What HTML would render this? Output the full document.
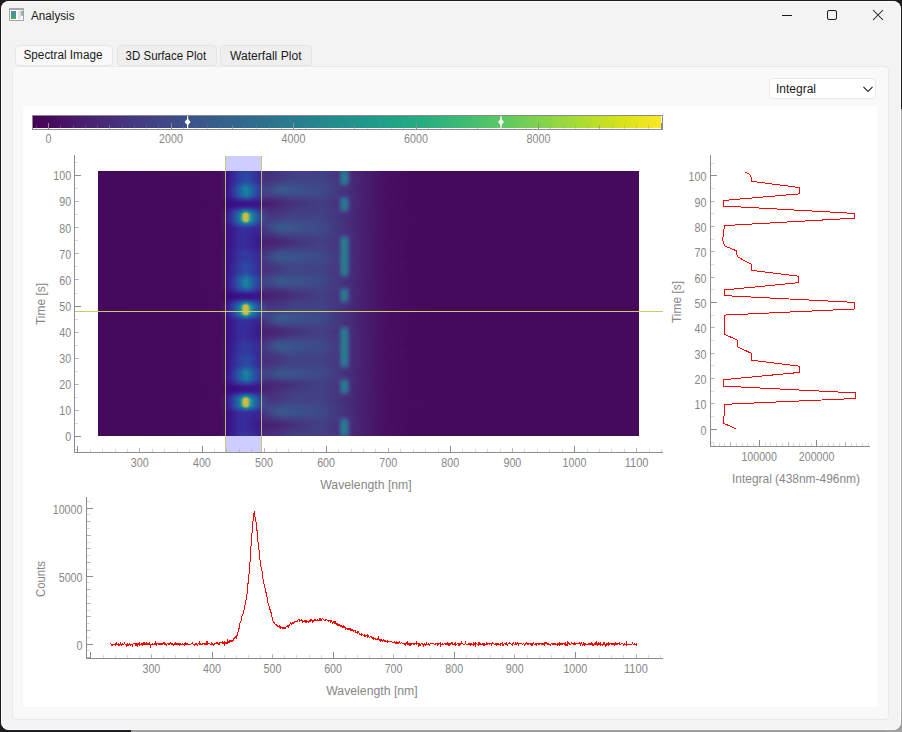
<!DOCTYPE html>
<html><head><meta charset="utf-8">
<style>
html,body{margin:0;padding:0;}
body{width:902px;height:732px;overflow:hidden;background:#1d1d1f;position:relative;font-family:"Liberation Sans",sans-serif;}
.abs{position:absolute;}
#win{left:1px;top:1px;width:900px;height:729px;background:#f3f3f3;border-radius:8px;box-shadow:inset 0 0 0 1px rgba(255,255,255,.7);}
.tab{top:45px;height:21px;border:1px solid #e4e4e4;border-radius:4px;box-sizing:border-box;background:#efefef;}
#pane{left:12px;top:66px;width:877px;height:654px;background:#f9f9f9;border:1px solid #e9e9e9;border-radius:4px;box-sizing:border-box;}
#white{left:23px;top:106px;width:854px;height:601px;background:#fff;}
#combo{left:769px;top:78px;width:107px;height:21px;background:#fff;border:1px solid #e8e8e8;border-radius:4px;box-sizing:border-box;}
#heat{left:98px;top:171px;width:541px;height:265px;}
svg{position:absolute;left:0;top:0;}
svg text{font-family:"Liberation Sans",sans-serif;}
</style></head><body>
<div class="abs" style="left:131px;top:730px;width:771px;height:2px;background:#9c9c9c"></div>
<div class="abs" style="left:901px;top:109px;width:1px;height:623px;background:#a8a8a8"></div>
<div class="abs" style="left:886px;top:716px;width:16px;height:16px;background:#a0a0a0"></div>
<div class="abs" id="win"></div>
<div class="abs" style="left:9px;top:8px;width:15px;height:13px;box-sizing:border-box;border:1px solid #a6a6a6;border-top:2px solid #a9a9a9;background:#fafafa;border-radius:1px;">
 <div class="abs" style="left:1px;top:1px;width:5px;height:8px;background:linear-gradient(#5d86c0,#3e9a80 55%,#4fae5c);"></div>
 <div class="abs" style="left:8px;top:1px;width:3px;height:8px;background:#e2e2e2;"></div>
 <div class="abs" style="left:11px;top:1px;width:2px;height:5px;background:linear-gradient(#7fa2d0,#9ad080);"></div>
</div>
<div class="abs" id="pane"></div>
<div class="abs tab" style="left:15px;width:98px;background:#f9f9f9;border-color:#e6e6e6"></div>
<div class="abs tab" style="left:117px;width:100px;"></div>
<div class="abs tab" style="left:220px;width:92px;"></div>
<div class="abs" id="white"></div>
<div class="abs" id="combo"></div>
<div class="abs" id="heat" style="background:linear-gradient(90deg,#460a5d 0.1%,#460b5e 22.5%,#48186a 23.9%,#443983 25.4%,#3c4f8a 26.5%,#39558c 27.4%,#3e4989 28.4%,#46327e 29.7%,#472e7c 31.3%,#453581 33.5%,#424086 36.0%,#423f85 41.9%,#453581 44.1%,#443b84 44.5%,#34618d 45.2%,#32658e 45.6%,#355e8d 45.9%,#443b84 46.5%,#472c7a 46.9%,#482475 47.8%,#470e61 53.5%,#460a5d 58.5%,#460a5d 99.9%) 0 0px/100% 1px no-repeat,
linear-gradient(90deg,#460a5d 0.1%,#460b5e 22.5%,#48186a 23.9%,#433e85 25.6%,#3c508b 26.5%,#39568c 27.4%,#3e4a89 28.4%,#46327e 29.7%,#472e7c 31.3%,#453781 33.7%,#424086 36.1%,#423f85 41.9%,#453581 44.1%,#433d84 44.5%,#31668e 45.2%,#2f6c8e 45.6%,#32648e 45.9%,#433e85 46.5%,#472c7a 46.9%,#482475 47.8%,#470e61 53.5%,#460a5d 58.5%,#460a5d 99.9%) 0 1px/100% 1px no-repeat,
linear-gradient(90deg,#460a5d 0.1%,#460b5e 22.5%,#48186a 23.9%,#453581 25.2%,#3b518b 26.5%,#38598c 27.4%,#3f4889 28.6%,#46337f 29.7%,#472e7c 31.1%,#453781 33.7%,#424086 36.1%,#424086 41.5%,#453581 44.1%,#433e85 44.5%,#33638d 45.0%,#2d718e 45.4%,#2d708e 45.7%,#306a8e 45.9%,#3c508b 46.3%,#463480 46.7%,#482979 47.0%,#471063 52.8%,#460a5d 57.9%,#460a5d 99.9%) 0 2px/100% 1px no-repeat,
linear-gradient(90deg,#460a5d 0.1%,#460b5e 22.5%,#48186a 23.9%,#443a83 25.4%,#3c508b 26.3%,#375b8d 27.4%,#3d4d8a 28.4%,#463480 29.7%,#472e7c 31.0%,#463480 33.2%,#424186 36.1%,#424086 41.5%,#453581 44.1%,#433e85 44.5%,#31668e 45.0%,#2b758e 45.4%,#2c738e 45.7%,#2e6e8e 45.9%,#3b528b 46.3%,#463480 46.7%,#482979 47.0%,#471063 52.8%,#460a5d 57.9%,#460a5d 99.9%) 0 3px/100% 1px no-repeat,
linear-gradient(90deg,#460a5d 0.1%,#460b5e 22.5%,#48186a 23.9%,#46307e 25.0%,#3d4d8a 26.2%,#365c8d 27.4%,#3d4e8a 28.4%,#46327e 29.9%,#46327e 32.8%,#424186 36.0%,#424086 41.5%,#453581 44.1%,#423f85 44.5%,#31688e 45.0%,#2c728e 45.2%,#29798e 45.6%,#2d708e 45.9%,#3a538b 46.3%,#453581 46.7%,#482979 47.0%,#471063 52.8%,#460a5d 57.9%,#460a5d 99.9%) 0 4px/100% 1px no-repeat,
linear-gradient(90deg,#460a5d 0.1%,#460b5e 22.5%,#48186a 23.9%,#46327e 25.0%,#3b518b 26.3%,#365c8d 27.4%,#3c4f8a 28.4%,#463480 29.7%,#472f7d 31.1%,#453882 33.7%,#424186 36.1%,#424086 41.7%,#453581 44.1%,#423f85 44.5%,#30698e 45.0%,#2c738e 45.2%,#297a8e 45.6%,#2d718e 45.9%,#3a548c 46.3%,#453581 46.7%,#482979 47.0%,#471063 52.8%,#460a5d 57.9%,#460a5d 99.9%) 0 5px/100% 1px no-repeat,
linear-gradient(90deg,#460a5d 0.1%,#460b5e 22.5%,#48186a 23.9%,#424086 25.6%,#3a538b 26.5%,#365d8d 27.4%,#3c4f8a 28.4%,#463480 29.7%,#472f7d 31.1%,#443983 33.7%,#414287 36.3%,#424086 41.7%,#453781 44.1%,#453882 44.3%,#423f85 44.5%,#30698e 45.0%,#29798e 45.4%,#2a788e 45.7%,#32658e 46.1%,#453581 46.7%,#482979 47.0%,#471063 52.8%,#460a5d 57.9%,#460a5d 99.9%) 0 6px/100% 1px no-repeat,
linear-gradient(90deg,#460a5d 0.1%,#460b5e 22.5%,#48186a 23.9%,#424086 25.6%,#3a538b 26.5%,#365d8d 27.4%,#3c4f8a 28.4%,#453581 29.7%,#46307e 30.8%,#453781 33.2%,#414287 36.0%,#424186 41.5%,#453781 44.1%,#423f85 44.5%,#30698e 45.0%,#29798e 45.4%,#2a778e 45.7%,#2d718e 45.9%,#3a548c 46.3%,#453581 46.7%,#482979 47.0%,#471063 52.8%,#460a5d 57.9%,#460a5d 99.9%) 0 7px/100% 1px no-repeat,
linear-gradient(90deg,#460a5d 0.1%,#460b5e 22.5%,#48186a 23.9%,#424086 25.6%,#3a538b 26.5%,#365d8d 27.4%,#3c4f8a 28.4%,#46337f 29.9%,#46337f 32.1%,#414487 35.8%,#424186 41.7%,#453781 44.1%,#423f85 44.5%,#30698e 45.0%,#2a788e 45.4%,#2a778e 45.7%,#2d718e 45.9%,#3a548c 46.3%,#453581 46.7%,#482979 47.0%,#471063 52.8%,#460a5d 57.9%,#460a5d 99.9%) 0 8px/100% 1px no-repeat,
linear-gradient(90deg,#460a5d 0.1%,#460b5e 22.5%,#48186a 23.9%,#453781 25.2%,#3b528b 26.3%,#355e8d 27.4%,#3c508b 28.4%,#453781 29.7%,#46327e 30.8%,#443a83 33.0%,#404588 36.0%,#414287 41.5%,#453781 44.1%,#423f85 44.5%,#31688e 45.0%,#2a768e 45.4%,#2b758e 45.7%,#2e6f8e 45.9%,#3a538b 46.3%,#453581 46.7%,#482979 47.0%,#471063 52.8%,#460a5d 57.9%,#460a5d 99.9%) 0 9px/100% 1px no-repeat,
linear-gradient(90deg,#460a5d 0.1%,#460b5e 22.5%,#481668 23.8%,#46337f 25.0%,#3b518b 26.2%,#33628d 27.4%,#38588c 28.2%,#453882 29.7%,#46337f 30.8%,#404688 35.2%,#414487 41.3%,#453781 44.1%,#423f85 44.5%,#2e6f8e 45.2%,#2b748e 45.6%,#2f6c8e 45.9%,#3b518b 46.3%,#463480 46.7%,#482979 47.0%,#471063 52.8%,#460a5d 57.9%,#460a5d 99.9%) 0 10px/100% 1px no-repeat,
linear-gradient(90deg,#460a5d 0.1%,#460b5e 22.5%,#481769 23.8%,#472f7d 24.9%,#3b518b 26.0%,#306a8e 27.4%,#355e8d 28.2%,#443b84 29.7%,#453581 30.6%,#433d84 32.4%,#3f4788 34.7%,#404588 41.3%,#453781 44.1%,#433e85 44.5%,#306a8e 45.2%,#2e6f8e 45.6%,#31678e 45.9%,#423f85 46.5%,#46337f 46.7%,#482878 47.2%,#471063 52.8%,#460a5d 57.9%,#460a5d 99.9%) 0 11px/100% 1px no-repeat,
linear-gradient(90deg,#460a5d 0.1%,#460b5e 22.5%,#481769 23.8%,#453882 25.0%,#375b8d 26.2%,#2c728e 27.3%,#2c718e 27.6%,#423f85 29.7%,#453882 30.8%,#414287 32.8%,#3e4a89 35.0%,#404588 41.5%,#453882 44.1%,#433d84 44.5%,#33628d 45.2%,#31668e 45.6%,#355f8d 45.9%,#433d84 46.5%,#472c7a 46.9%,#481769 50.7%,#460b5e 55.4%,#460a5d 99.9%) 0 12px/100% 1px no-repeat,
linear-gradient(90deg,#460a5d 0.1%,#460b5e 22.5%,#48186a 23.8%,#472e7c 24.7%,#39558c 25.8%,#287d8e 27.3%,#287c8e 27.6%,#3f4788 29.5%,#443a83 30.4%,#424186 32.3%,#3d4d8a 34.3%,#404688 41.5%,#453882 44.3%,#3e4989 44.8%,#38588c 45.2%,#38598c 45.7%,#3d4d8a 46.1%,#46307e 46.7%,#482677 47.4%,#470e61 53.3%,#460a5d 58.7%,#460a5d 99.9%) 0 13px/100% 1px no-repeat,
linear-gradient(90deg,#460a5d 0.1%,#460b5e 22.5%,#48186a 23.8%,#453781 24.9%,#375a8c 25.8%,#23888e 27.3%,#24868e 27.6%,#3e4c8a 29.5%,#423f85 30.2%,#423f85 31.5%,#3c508b 33.9%,#3f4788 41.3%,#453882 44.3%,#414287 44.8%,#3d4e8a 45.4%,#3f4889 45.9%,#472a7a 46.9%,#471164 52.2%,#460a5d 57.4%,#460a5d 99.9%) 0 14px/100% 1px no-repeat,
linear-gradient(90deg,#460a5d 0.1%,#460b5e 22.5%,#481668 23.6%,#472d7b 24.5%,#38588c 25.6%,#20938c 27.3%,#21918c 27.6%,#39558c 29.3%,#414487 30.0%,#423f85 31.0%,#3a538b 33.9%,#3e4c8a 39.8%,#414487 42.1%,#453882 44.5%,#414287 45.4%,#433e85 45.9%,#472a7a 46.9%,#471164 52.2%,#460a5d 57.4%,#460a5d 99.9%) 0 15px/100% 1px no-repeat,
linear-gradient(90deg,#460a5d 0.1%,#460b5e 22.5%,#481a6c 23.8%,#463480 24.7%,#375b8d 25.6%,#25858e 26.7%,#1e9d89 27.3%,#1f9e89 27.4%,#297a8e 28.4%,#3d4e8a 29.7%,#414287 30.4%,#404588 31.5%,#39558c 33.7%,#3b518b 36.1%,#3f4889 41.5%,#453882 44.5%,#443a83 45.6%,#482878 47.2%,#471063 52.8%,#460a5d 57.9%,#460a5d 99.9%) 0 16px/100% 1px no-repeat,
linear-gradient(90deg,#460a5d 0.1%,#460b5e 22.5%,#481a6c 23.8%,#472e7c 24.5%,#3a548c 25.4%,#23888e 26.7%,#1fa287 27.3%,#20a386 27.4%,#228c8d 28.0%,#3c4f8a 29.7%,#414487 30.4%,#404688 31.5%,#38588c 33.5%,#3a538b 36.0%,#3d4e8a 39.1%,#3f4788 41.7%,#453781 44.6%,#46337f 45.9%,#482576 47.6%,#470e61 53.5%,#460a5d 58.5%,#460a5d 99.9%) 0 17px/100% 1px no-repeat,
linear-gradient(90deg,#460a5d 0.1%,#460b5e 22.5%,#481a6c 23.8%,#472e7c 24.5%,#3a548c 25.4%,#26818e 26.5%,#1f9e89 27.1%,#20a486 27.3%,#1fa088 27.6%,#2a768e 28.6%,#3c508b 29.7%,#414487 30.4%,#404688 31.5%,#38598c 33.5%,#3a548c 35.8%,#3c4f8a 38.4%,#3f4889 41.5%,#46337f 45.4%,#481668 51.1%,#460b5e 55.5%,#460a5d 99.9%) 0 18px/100% 1px no-repeat,
linear-gradient(90deg,#460a5d 0.1%,#460b5e 22.5%,#481a6c 23.8%,#472e7c 24.5%,#3a548c 25.4%,#238a8d 26.7%,#1f9e89 27.1%,#20a486 27.3%,#21a585 27.4%,#218e8d 28.0%,#3a548c 29.5%,#414487 30.4%,#404688 31.5%,#38598c 33.5%,#3b528b 36.1%,#3e4989 41.3%,#482677 47.4%,#470e61 53.3%,#460a5d 58.7%,#460a5d 99.9%) 0 19px/100% 1px no-repeat,
linear-gradient(90deg,#460a5d 0.1%,#460b5e 22.5%,#481a6c 23.8%,#472e7c 24.5%,#3a548c 25.4%,#26818e 26.5%,#1f9e89 27.1%,#20a486 27.3%,#21a585 27.4%,#218e8d 28.0%,#3a548c 29.5%,#404588 30.2%,#404588 31.3%,#38588c 33.7%,#3d4e8a 38.5%,#3f4889 41.5%,#482173 48.5%,#470e61 53.5%,#460a5d 58.5%,#460a5d 99.9%) 0 20px/100% 1px no-repeat,
linear-gradient(90deg,#460a5d 0.1%,#460b5e 22.5%,#481a6c 23.8%,#472e7c 24.5%,#3a548c 25.4%,#23898e 26.7%,#1f9e89 27.1%,#20a486 27.3%,#1fa088 27.6%,#2a768e 28.6%,#3c4f8a 29.7%,#414287 30.4%,#414487 31.5%,#39558c 33.7%,#3d4d8a 38.7%,#3f4788 41.7%,#482677 47.4%,#470e61 53.3%,#460a5d 58.7%,#460a5d 99.9%) 0 21px/100% 1px no-repeat,
linear-gradient(90deg,#460a5d 0.1%,#460b5e 22.5%,#481a6c 23.8%,#472e7c 24.5%,#3a548c 25.4%,#23898e 26.7%,#20a386 27.3%,#20a486 27.4%,#228d8d 28.0%,#3d4e8a 29.7%,#424186 30.4%,#414287 31.7%,#3b528b 33.9%,#3e4c8a 38.5%,#3f4788 41.5%,#453581 44.8%,#472e7c 46.3%,#481769 50.7%,#460b5e 55.4%,#460a5d 99.9%) 0 22px/100% 1px no-repeat,
linear-gradient(90deg,#460a5d 0.1%,#460b5e 22.5%,#481a6c 23.8%,#463480 24.7%,#375b8d 25.6%,#24878e 26.7%,#1fa188 27.3%,#1fa187 27.4%,#238a8d 28.0%,#3d4d8a 29.7%,#423f85 30.4%,#424086 31.7%,#3d4e8a 34.1%,#3e4989 40.4%,#453781 44.6%,#453781 45.7%,#482878 47.2%,#471063 52.8%,#460a5d 57.9%,#460a5d 99.9%) 0 23px/100% 1px no-repeat,
linear-gradient(90deg,#460a5d 0.1%,#460b5e 22.5%,#481668 23.6%,#472c7a 24.5%,#3c508b 25.4%,#26818e 26.7%,#1f988b 27.3%,#1f948c 27.6%,#375b8d 29.1%,#424186 30.0%,#443a83 31.1%,#3e4989 34.5%,#404688 41.3%,#453781 44.5%,#423f85 45.4%,#453882 46.1%,#472a7a 46.9%,#471164 52.2%,#460a5d 57.4%,#460a5d 99.9%) 0 24px/100% 1px no-repeat,
linear-gradient(90deg,#460a5d 0.1%,#460b5e 22.5%,#481668 23.6%,#482979 24.5%,#3b518b 25.6%,#23888e 27.3%,#25858e 27.6%,#3d4e8a 29.3%,#443a83 30.2%,#453781 31.5%,#404588 34.7%,#414487 41.5%,#453781 44.3%,#3e4989 45.4%,#404588 45.9%,#472a7a 46.9%,#471164 52.2%,#460a5d 57.4%,#460a5d 99.9%) 0 25px/100% 1px no-repeat,
linear-gradient(90deg,#460a5d 0.1%,#460b5e 22.6%,#481c6e 24.1%,#424186 25.4%,#2d718e 27.1%,#2b758e 27.4%,#34618d 28.4%,#443983 29.9%,#46327e 31.3%,#424086 35.0%,#414487 41.3%,#453781 44.3%,#423f85 44.6%,#3a538b 45.2%,#3a548c 45.7%,#424086 46.3%,#472a7a 46.9%,#471164 52.2%,#460a5d 57.4%,#460a5d 99.9%) 0 26px/100% 1px no-repeat,
linear-gradient(90deg,#460a5d 0.1%,#460b5e 22.6%,#481769 23.9%,#472e7c 25.0%,#3e4a89 26.2%,#34618d 27.3%,#355e8d 27.8%,#453581 29.7%,#472e7c 30.8%,#463480 33.2%,#433d84 36.0%,#414287 41.3%,#453781 44.1%,#443b84 44.5%,#355e8d 45.2%,#33628d 45.6%,#375b8d 45.9%,#443b84 46.5%,#472c7a 46.9%,#481a6c 50.0%,#460b5e 55.0%,#460a5d 99.9%) 0 27px/100% 1px no-repeat,
linear-gradient(90deg,#460a5d 0.1%,#460b5e 22.8%,#48186a 24.3%,#433d84 26.2%,#3d4d8a 27.4%,#423f85 28.6%,#472c7a 29.9%,#472a7a 31.9%,#443983 36.1%,#424186 41.3%,#453781 44.1%,#433d84 44.5%,#355f8d 45.0%,#2f6c8e 45.4%,#306a8e 45.7%,#375a8c 46.1%,#46337f 46.7%,#482979 47.0%,#471063 52.8%,#460a5d 57.9%,#460a5d 99.9%) 0 28px/100% 1px no-repeat,
linear-gradient(90deg,#460a5d 0.1%,#460b5e 23.0%,#481a6c 24.7%,#46337f 26.7%,#443983 27.6%,#482576 29.9%,#472a7a 33.0%,#453781 36.3%,#424086 41.3%,#453581 44.1%,#433e85 44.5%,#32648e 45.0%,#2c718e 45.4%,#2d718e 45.7%,#355f8d 46.1%,#463480 46.7%,#482979 47.0%,#471063 52.8%,#460a5d 57.9%,#460a5d 99.9%) 0 29px/100% 1px no-repeat,
linear-gradient(90deg,#460a5d 0.1%,#460b5e 23.2%,#481a6c 25.2%,#482576 26.7%,#482677 28.0%,#481f70 29.9%,#472c7a 33.9%,#423f85 40.2%,#443b84 42.6%,#453581 44.1%,#433e85 44.5%,#31678e 45.0%,#2b758e 45.4%,#2b748e 45.7%,#2e6e8e 45.9%,#3b528b 46.3%,#463480 46.7%,#482979 47.0%,#471063 52.8%,#460a5d 57.9%,#460a5d 99.9%) 0 30px/100% 1px no-repeat,
linear-gradient(90deg,#460a5d 0.1%,#460b5e 23.4%,#481c6e 26.7%,#481d6f 30.2%,#472d7b 34.7%,#423f85 41.1%,#453581 44.1%,#423f85 44.5%,#31688e 45.0%,#2c728e 45.2%,#29798e 45.6%,#2d708e 45.9%,#3a538b 46.3%,#453581 46.7%,#482979 47.0%,#471063 52.8%,#460a5d 57.9%,#460a5d 99.9%) 0 31px/100% 1px no-repeat,
linear-gradient(90deg,#460a5d 0.1%,#460b5e 23.6%,#48186a 26.5%,#481c6e 30.2%,#482173 31.9%,#472d7b 34.8%,#423f85 41.3%,#453581 44.1%,#423f85 44.5%,#30698e 45.0%,#2c738e 45.2%,#297a8e 45.6%,#2d718e 45.9%,#3a548c 46.3%,#453581 46.7%,#482979 47.0%,#471063 52.8%,#460a5d 57.9%,#460a5d 99.9%) 0 32px/100% 1px no-repeat,
linear-gradient(90deg,#460a5d 0.1%,#460b5e 23.6%,#481a6c 26.7%,#481c6e 30.2%,#482173 31.9%,#472d7b 34.8%,#423f85 41.1%,#453581 44.1%,#423f85 44.5%,#30698e 45.0%,#2c738e 45.2%,#297a8e 45.6%,#2d718e 45.9%,#3a548c 46.3%,#453581 46.7%,#482979 47.0%,#471063 52.8%,#460a5d 57.9%,#460a5d 99.9%) 0 33px/100% 1px no-repeat,
linear-gradient(90deg,#460a5d 0.1%,#460b5e 23.4%,#481c6e 26.7%,#481d6f 30.2%,#482979 33.9%,#463480 36.9%,#423f85 41.1%,#453581 44.1%,#423f85 44.5%,#31688e 45.0%,#2a788e 45.4%,#2a768e 45.7%,#2d708e 45.9%,#3a548c 46.3%,#453581 46.7%,#482979 47.0%,#471063 52.8%,#460a5d 57.9%,#460a5d 99.9%) 0 34px/100% 1px no-repeat,
linear-gradient(90deg,#460a5d 0.1%,#460b5e 23.2%,#482475 26.5%,#482374 28.6%,#481f70 30.0%,#472a7a 33.9%,#453581 36.7%,#423f85 41.3%,#453581 44.1%,#433e85 44.5%,#31678e 45.0%,#2c718e 45.2%,#2a778e 45.6%,#2e6f8e 45.9%,#3a538b 46.3%,#463480 46.7%,#482979 47.0%,#471063 52.8%,#460a5d 57.9%,#460a5d 99.9%) 0 35px/100% 1px no-repeat,
linear-gradient(90deg,#460a5d 0.1%,#460b5e 23.0%,#48186a 24.5%,#463480 26.5%,#443983 27.6%,#482576 29.9%,#482878 33.0%,#453781 36.3%,#423f85 41.3%,#453581 44.1%,#433e85 44.5%,#38588c 44.8%,#2e6f8e 45.2%,#2b748e 45.6%,#2f6c8e 45.9%,#3b518b 46.3%,#463480 46.7%,#482979 47.0%,#471063 52.8%,#460a5d 57.9%,#460a5d 99.9%) 0 36px/100% 1px no-repeat,
linear-gradient(90deg,#460a5d 0.1%,#460b5e 22.6%,#48186a 24.1%,#453781 25.6%,#3b518b 27.1%,#3a538b 27.6%,#472d7b 29.9%,#482878 32.4%,#453882 36.1%,#423f85 41.5%,#453581 44.1%,#433d84 44.5%,#30698e 45.2%,#2e6f8e 45.6%,#31678e 45.9%,#423f85 46.5%,#472c7a 46.9%,#482475 47.8%,#470e61 53.5%,#460a5d 58.5%,#460a5d 99.9%) 0 37px/100% 1px no-repeat,
linear-gradient(90deg,#460a5d 0.1%,#460b5e 22.6%,#48186a 23.9%,#443983 25.2%,#355e8d 26.5%,#2d708e 27.3%,#2e6f8e 27.6%,#414287 29.3%,#46337f 30.0%,#472a7a 31.7%,#472f7d 33.7%,#443a83 36.3%,#423f85 41.3%,#453581 44.1%,#443b84 44.5%,#34618d 45.2%,#31668e 45.6%,#355f8d 45.9%,#443b84 46.5%,#472c7a 46.9%,#482475 47.8%,#470e61 53.5%,#460a5d 58.5%,#460a5d 99.9%) 0 38px/100% 1px no-repeat,
linear-gradient(90deg,#460a5d 0.1%,#460b5e 22.5%,#481668 23.6%,#482979 24.5%,#3b528b 25.6%,#218e8d 27.3%,#228b8d 27.6%,#3c4f8a 29.3%,#453882 30.2%,#472c7a 32.1%,#443b84 36.1%,#424086 41.3%,#453581 44.3%,#424086 44.6%,#39568c 45.2%,#38598c 45.7%,#3d4d8a 46.1%,#472f7d 46.7%,#482677 47.2%,#470e61 53.5%,#460a5d 58.5%,#460a5d 99.9%) 0 39px/100% 1px no-repeat,
linear-gradient(90deg,#460a5d 0.1%,#460b5e 22.5%,#481a6c 23.8%,#472e7c 24.5%,#39558c 25.4%,#25848e 26.5%,#1e9d89 26.9%,#2ab07f 27.3%,#2ab07f 27.4%,#1f9e89 27.8%,#26818e 28.4%,#404688 29.9%,#46337f 31.0%,#472e7c 32.6%,#433e85 36.3%,#424086 41.3%,#453581 44.3%,#424186 44.8%,#3e4c8a 45.2%,#3e4c8a 45.7%,#443b84 46.3%,#472e7c 46.7%,#482677 47.4%,#470e61 53.3%,#460a5d 58.7%,#460a5d 99.9%) 0 40px/100% 1px no-repeat,
linear-gradient(90deg,#460a5d 0.1%,#460b5e 22.3%,#481668 23.4%,#482576 24.1%,#3e4c8a 25.0%,#26818e 26.2%,#1f988b 26.5%,#23a983 26.7%,#3dbc74 26.9%,#63cb5f 27.1%,#7cd250 27.3%,#77d153 27.4%,#5ac864 27.6%,#37b878 27.8%,#22a884 28.0%,#1e9b8a 28.2%,#2e6d8e 29.1%,#3f4889 30.0%,#453781 31.0%,#472f7d 32.4%,#423f85 36.1%,#423f85 41.7%,#453581 44.5%,#424186 45.4%,#443a83 46.1%,#482979 46.9%,#470e61 53.1%,#460a5d 58.9%,#460a5d 99.9%) 0 41px/100% 1px no-repeat,
linear-gradient(90deg,#460a5d 0.1%,#460b5e 22.3%,#481668 23.4%,#472f7d 24.3%,#365c8d 25.2%,#228d8d 26.2%,#1f998a 26.3%,#25ab82 26.5%,#4ac16d 26.7%,#8ed645 26.9%,#d0e11c 27.1%,#f4e61e 27.3%,#eae51a 27.4%,#b8de29 27.6%,#73d056 27.8%,#3fbc73 28.0%,#26ad81 28.2%,#1fa088 28.4%,#2a768e 29.1%,#3d4e8a 30.0%,#443b84 30.8%,#46327e 31.9%,#453781 33.7%,#424086 36.3%,#423f85 41.9%,#463480 44.5%,#443983 45.6%,#472d7b 46.5%,#48186a 50.4%,#460b5e 55.2%,#460a5d 99.9%) 0 42px/100% 1px no-repeat,
linear-gradient(90deg,#460a5d 0.1%,#460b5e 22.3%,#471365 23.2%,#482475 23.9%,#414287 24.7%,#2b758e 25.6%,#1f958b 26.2%,#20a386 26.3%,#37b878 26.5%,#77d153 26.7%,#d8e219 26.9%,#fde725 27.1%,#fde725 27.6%,#aadc32 27.8%,#60ca60 28.0%,#37b878 28.2%,#24aa83 28.4%,#1f9f88 28.6%,#2c738e 29.3%,#3b518b 30.0%,#433e85 30.8%,#46337f 31.9%,#453882 33.7%,#424186 36.3%,#424086 41.7%,#463480 44.6%,#46327e 45.9%,#482173 48.3%,#470d60 54.1%,#460a5d 62.4%,#460a5d 99.9%) 0 43px/100% 1px no-repeat,
linear-gradient(90deg,#460a5d 0.1%,#460b5e 22.3%,#481769 23.4%,#472a7a 24.1%,#3d4e8a 24.9%,#26828e 25.8%,#1f998a 26.2%,#22a884 26.3%,#40bd72 26.5%,#8ed645 26.7%,#f6e620 26.9%,#fde725 27.1%,#fde725 27.6%,#c5e021 27.8%,#70cf57 28.0%,#3fbc73 28.2%,#28ae80 28.4%,#1fa287 28.6%,#228c8d 28.9%,#33638d 29.7%,#3f4788 30.4%,#453882 31.3%,#463480 32.8%,#424186 36.0%,#424086 41.7%,#46307e 45.6%,#471365 51.8%,#460a5d 56.8%,#460a5d 99.9%) 0 44px/100% 1px no-repeat,
linear-gradient(90deg,#460a5d 0.1%,#460b5e 22.3%,#481769 23.4%,#472a7a 24.1%,#3d4e8a 24.9%,#25838e 25.8%,#1f998a 26.2%,#23a983 26.3%,#42be71 26.5%,#93d741 26.7%,#fde725 26.9%,#fde725 27.6%,#c8e020 27.8%,#73d056 28.0%,#40bd72 28.2%,#29af7f 28.4%,#20a386 28.6%,#228c8d 28.9%,#375b8d 29.9%,#414487 30.6%,#453882 31.5%,#453882 33.2%,#414287 36.0%,#424186 41.5%,#482374 48.2%,#470e61 53.5%,#460a5d 58.5%,#460a5d 99.9%) 0 45px/100% 1px no-repeat,
linear-gradient(90deg,#460a5d 0.1%,#460b5e 22.3%,#481769 23.4%,#472a7a 24.1%,#3d4e8a 24.9%,#25838e 25.8%,#1f998a 26.2%,#23a983 26.3%,#44bf70 26.5%,#93d741 26.7%,#fde725 26.9%,#fde725 27.6%,#cae11f 27.8%,#73d056 28.0%,#42be71 28.2%,#29af7f 28.4%,#20a386 28.6%,#228d8d 28.9%,#32648e 29.7%,#3f4889 30.4%,#443a83 31.3%,#453882 32.4%,#414487 36.1%,#414287 41.3%,#482071 48.7%,#470d60 54.1%,#460a5d 62.4%,#460a5d 99.9%) 0 46px/100% 1px no-repeat,
linear-gradient(90deg,#460a5d 0.1%,#460b5e 22.3%,#481769 23.4%,#472a7a 24.1%,#3d4e8a 24.9%,#25838e 25.8%,#1f998a 26.2%,#22a884 26.3%,#42be71 26.5%,#93d741 26.7%,#fbe723 26.9%,#fde725 27.6%,#c8e020 27.8%,#73d056 28.0%,#40bd72 28.2%,#29af7f 28.4%,#20a386 28.6%,#228d8d 28.9%,#32648e 29.7%,#3e4989 30.4%,#443b84 31.3%,#443b84 33.0%,#404688 36.0%,#414287 41.5%,#481d6f 49.3%,#470d60 54.1%,#460a5d 62.4%,#460a5d 99.9%) 0 47px/100% 1px no-repeat,
linear-gradient(90deg,#460a5d 0.1%,#460b5e 22.3%,#481769 23.4%,#472a7a 24.1%,#3d4e8a 24.9%,#228d8d 26.0%,#1f988b 26.2%,#22a785 26.3%,#3fbc73 26.5%,#89d548 26.7%,#efe51c 26.9%,#fde725 27.1%,#fde725 27.6%,#c0df25 27.8%,#6ccd5a 28.0%,#3dbc74 28.2%,#28ae80 28.4%,#1fa287 28.6%,#228b8d 28.9%,#365c8d 29.9%,#404688 30.6%,#443b84 31.5%,#414287 33.7%,#3f4788 36.5%,#414287 41.7%,#481d6f 49.3%,#470d60 54.1%,#460a5d 62.4%,#460a5d 99.9%) 0 48px/100% 1px no-repeat,
linear-gradient(90deg,#460a5d 0.1%,#460b5e 22.3%,#471365 23.2%,#482979 24.1%,#3e4c8a 24.9%,#23898e 26.0%,#1fa187 26.3%,#31b57b 26.5%,#6ccd5a 26.7%,#c5e021 26.9%,#fde725 27.1%,#fde725 27.4%,#f1e51d 27.6%,#9dd93b 27.8%,#58c765 28.0%,#32b67a 28.2%,#22a884 28.4%,#1e9d89 28.6%,#2c738e 29.3%,#375a8c 29.9%,#404688 30.6%,#433e85 31.5%,#3e4989 35.4%,#404588 41.3%,#481d6f 49.3%,#470d60 54.1%,#460a5d 62.4%,#460a5d 99.9%) 0 49px/100% 1px no-repeat,
linear-gradient(90deg,#460a5d 0.1%,#460b5e 22.3%,#481668 23.4%,#472e7c 24.3%,#3b518b 25.0%,#238a8d 26.2%,#1f958b 26.3%,#21a685 26.5%,#3dbc74 26.7%,#75d054 26.9%,#b0dd2f 27.1%,#d2e21b 27.3%,#cae11f 27.4%,#9dd93b 27.6%,#60ca60 27.8%,#35b779 28.0%,#23a983 28.2%,#1e9d89 28.4%,#2b758e 29.1%,#39558c 29.9%,#404588 30.6%,#423f85 31.7%,#3e4c8a 34.7%,#404688 41.3%,#481f70 49.1%,#470d60 54.1%,#460a5d 62.4%,#460a5d 99.9%) 0 50px/100% 1px no-repeat,
linear-gradient(90deg,#460a5d 0.1%,#460b5e 22.3%,#481467 23.4%,#472c7a 24.3%,#3a548c 25.2%,#24878e 26.3%,#20a386 26.7%,#2fb47c 26.9%,#4cc26c 27.1%,#60ca60 27.3%,#5ec962 27.4%,#48c16e 27.6%,#2db27d 27.8%,#20a386 28.0%,#218e8d 28.4%,#39568c 29.7%,#404588 30.4%,#424086 31.5%,#3c4f8a 34.3%,#404688 41.5%,#481f70 49.1%,#470d60 54.1%,#460a5d 62.4%,#460a5d 99.9%) 0 51px/100% 1px no-repeat,
linear-gradient(90deg,#460a5d 0.1%,#460b5e 22.5%,#481a6c 23.8%,#453581 24.7%,#365d8d 25.6%,#26828e 26.5%,#1f978b 26.9%,#23a983 27.3%,#23a983 27.4%,#1f998a 27.8%,#2d708e 28.7%,#3e4a89 29.9%,#424086 30.6%,#414487 31.9%,#3b518b 33.7%,#3f4788 41.5%,#482374 48.2%,#470e61 53.5%,#460a5d 58.5%,#460a5d 99.9%) 0 52px/100% 1px no-repeat,
linear-gradient(90deg,#460a5d 0.1%,#460b5e 22.5%,#48186a 23.8%,#453781 24.9%,#375a8c 25.8%,#238a8d 27.3%,#24878e 27.6%,#3e4c8a 29.5%,#424086 30.2%,#424186 31.3%,#3a548c 33.7%,#3e4c8a 40.2%,#453882 44.1%,#471365 51.8%,#460a5d 56.8%,#460a5d 99.9%) 0 53px/100% 1px no-repeat,
linear-gradient(90deg,#460a5d 0.1%,#460b5e 22.5%,#481769 23.8%,#46327e 24.9%,#3a548c 26.0%,#2d718e 27.3%,#2d708e 27.6%,#414287 29.5%,#443b84 30.4%,#3e4c8a 32.3%,#38588c 33.9%,#3d4e8a 38.5%,#3f4889 41.5%,#482576 47.6%,#470e61 53.5%,#460a5d 58.5%,#460a5d 99.9%) 0 54px/100% 1px no-repeat,
linear-gradient(90deg,#460a5d 0.1%,#460b5e 22.5%,#48186a 23.9%,#423f85 25.6%,#3a548c 26.7%,#375b8d 27.4%,#3d4e8a 28.4%,#453882 29.7%,#443983 30.6%,#38588c 33.4%,#39558c 35.4%,#3c4f8a 38.2%,#3f4889 41.5%,#482374 48.2%,#470e61 53.5%,#460a5d 58.5%,#460a5d 99.9%) 0 55px/100% 1px no-repeat,
linear-gradient(90deg,#460a5d 0.1%,#460b5e 22.6%,#481769 23.9%,#433e85 26.0%,#3f4889 27.1%,#424186 28.2%,#46327e 29.5%,#453781 30.6%,#38588c 33.4%,#38588c 35.0%,#3c4f8a 38.2%,#3e4989 41.3%,#482173 48.5%,#470e61 53.5%,#460a5d 58.5%,#460a5d 99.9%) 0 56px/100% 1px no-repeat,
linear-gradient(90deg,#460a5d 0.1%,#460b5e 22.6%,#48186a 24.1%,#443a83 26.2%,#433e85 27.4%,#472d7b 29.5%,#453581 30.6%,#3a548c 33.0%,#38598c 34.5%,#3c4f8a 38.0%,#3f4889 41.5%,#482071 48.7%,#470d60 54.1%,#460a5d 62.4%,#460a5d 99.9%) 0 57px/100% 1px no-repeat,
linear-gradient(90deg,#460a5d 0.1%,#460b5e 22.6%,#48186a 24.1%,#453882 26.2%,#443a83 27.3%,#472c7a 29.7%,#433e85 31.3%,#39558c 33.4%,#39558c 35.2%,#3d4e8a 38.4%,#3f4889 41.5%,#482374 48.2%,#470e61 53.5%,#460a5d 58.5%,#460a5d 99.9%) 0 58px/100% 1px no-repeat,
linear-gradient(90deg,#460a5d 0.1%,#460b5e 22.6%,#48186a 24.1%,#453781 26.2%,#443a83 27.1%,#472a7a 29.5%,#453581 30.8%,#3a538b 33.4%,#3a538b 35.2%,#3d4d8a 38.4%,#3f4889 41.3%,#482173 48.5%,#470e61 53.5%,#460a5d 58.5%,#460a5d 99.9%) 0 59px/100% 1px no-repeat,
linear-gradient(90deg,#460a5d 0.1%,#460b5e 22.6%,#48186a 24.1%,#453781 26.2%,#443983 27.3%,#472a7a 29.7%,#433d84 31.5%,#3c508b 33.5%,#3c508b 35.6%,#3e4c8a 38.9%,#404588 41.9%,#482475 48.0%,#470e61 53.5%,#460a5d 58.5%,#460a5d 99.9%) 0 60px/100% 1px no-repeat,
linear-gradient(90deg,#460a5d 0.1%,#460b5e 22.6%,#48186a 24.1%,#453781 26.2%,#443983 27.3%,#482979 29.7%,#3e4a89 33.4%,#3d4e8a 35.2%,#3e4989 39.3%,#404588 41.7%,#453581 44.8%,#481769 50.7%,#460b5e 55.4%,#460a5d 99.9%) 0 61px/100% 1px no-repeat,
linear-gradient(90deg,#460a5d 0.1%,#460b5e 22.6%,#481a6c 24.3%,#463480 26.0%,#443a83 26.9%,#482979 29.7%,#3f4889 33.9%,#404688 41.3%,#453581 44.5%,#453581 45.7%,#482677 47.4%,#470e61 53.3%,#460a5d 58.7%,#460a5d 99.9%) 0 62px/100% 1px no-repeat,
linear-gradient(90deg,#460a5d 0.1%,#460b5e 22.6%,#481a6c 24.3%,#463480 26.0%,#443a83 26.9%,#472d7b 28.7%,#482878 29.7%,#404588 34.5%,#414487 41.5%,#453781 44.5%,#433e85 45.6%,#472f7d 46.5%,#482878 47.2%,#471063 52.8%,#460a5d 57.9%,#460a5d 99.9%) 0 63px/100% 1px no-repeat,
linear-gradient(90deg,#460a5d 0.1%,#460b5e 22.6%,#481a6c 24.3%,#463480 26.0%,#443983 27.1%,#482677 29.9%,#424086 34.5%,#414487 41.3%,#453781 44.3%,#423f85 44.8%,#3f4889 45.4%,#423f85 46.1%,#472d7b 46.7%,#482173 48.3%,#470d60 54.1%,#460a5d 62.4%,#460a5d 99.9%) 0 64px/100% 1px no-repeat,
linear-gradient(90deg,#460a5d 0.1%,#460b5e 22.6%,#481a6c 24.3%,#463480 26.0%,#443983 27.1%,#482576 29.7%,#433e85 35.4%,#414287 41.3%,#453781 44.3%,#423f85 44.6%,#3b518b 45.2%,#3a548c 45.6%,#3c4f8a 45.9%,#472a7a 46.9%,#471164 52.2%,#460a5d 57.4%,#460a5d 99.9%) 0 65px/100% 1px no-repeat,
linear-gradient(90deg,#460a5d 0.1%,#460b5e 22.6%,#481a6c 24.3%,#463480 26.0%,#443983 27.1%,#482475 29.7%,#463480 33.9%,#443b84 36.7%,#424186 41.3%,#453781 44.3%,#414287 44.6%,#365d8d 45.2%,#34618d 45.6%,#375a8c 45.9%,#443a83 46.5%,#472c7a 46.9%,#482475 47.8%,#470e61 53.5%,#460a5d 58.5%,#460a5d 99.9%) 0 66px/100% 1px no-repeat,
linear-gradient(90deg,#460a5d 0.1%,#460b5e 22.6%,#481a6c 24.3%,#463480 26.0%,#443983 27.1%,#482374 29.9%,#46327e 34.3%,#443a83 37.6%,#424086 41.3%,#453581 44.1%,#433d84 44.5%,#31668e 45.2%,#2f6b8e 45.6%,#33638d 45.9%,#3e4c8a 46.3%,#46337f 46.7%,#482979 47.0%,#471063 52.8%,#460a5d 57.9%,#460a5d 99.9%) 0 67px/100% 1px no-repeat,
linear-gradient(90deg,#460a5d 0.1%,#460b5e 22.6%,#481a6c 24.3%,#453781 26.2%,#453781 27.4%,#482173 29.7%,#472a7a 33.5%,#453781 36.7%,#424086 41.1%,#453581 44.1%,#433e85 44.5%,#2e6d8e 45.2%,#2c728e 45.6%,#306a8e 45.9%,#3c508b 46.3%,#463480 46.7%,#482979 47.0%,#471063 52.8%,#460a5d 57.9%,#460a5d 99.9%) 0 68px/100% 1px no-repeat,
linear-gradient(90deg,#460a5d 0.1%,#460b5e 22.6%,#481a6c 24.3%,#463480 26.0%,#453882 27.1%,#472c7a 28.6%,#482071 30.0%,#482979 33.7%,#463480 36.7%,#423f85 41.1%,#453581 44.1%,#433e85 44.5%,#31668e 45.0%,#2b758e 45.4%,#2b748e 45.7%,#2e6e8e 45.9%,#3b528b 46.3%,#463480 46.7%,#482979 47.0%,#471063 52.8%,#460a5d 57.9%,#460a5d 99.9%) 0 69px/100% 1px no-repeat,
linear-gradient(90deg,#460a5d 0.1%,#460b5e 22.6%,#481a6c 24.3%,#463480 26.0%,#453882 27.1%,#482979 28.7%,#482071 29.9%,#482677 33.5%,#463480 36.9%,#423f85 41.3%,#453581 44.1%,#423f85 44.5%,#31688e 45.0%,#2c728e 45.2%,#29798e 45.6%,#2d708e 45.9%,#3a538b 46.3%,#453581 46.7%,#482979 47.0%,#471063 52.8%,#460a5d 57.9%,#460a5d 99.9%) 0 70px/100% 1px no-repeat,
linear-gradient(90deg,#460a5d 0.1%,#460b5e 22.6%,#481a6c 24.3%,#463480 26.0%,#453882 27.1%,#482979 28.7%,#482071 29.9%,#482576 33.4%,#46337f 36.7%,#423f85 41.3%,#453581 44.1%,#423f85 44.5%,#30698e 45.0%,#29798e 45.4%,#2a778e 45.7%,#2d718e 45.9%,#3a548c 46.3%,#453581 46.7%,#482979 47.0%,#471063 52.8%,#460a5d 57.9%,#460a5d 99.9%) 0 71px/100% 1px no-repeat,
linear-gradient(90deg,#460a5d 0.1%,#460b5e 22.6%,#481a6c 24.3%,#463480 26.0%,#453882 27.1%,#472c7a 28.6%,#482071 29.9%,#482677 33.5%,#46337f 36.5%,#423f85 41.1%,#453581 44.1%,#423f85 44.5%,#30698e 45.0%,#29798e 45.4%,#2a788e 45.7%,#2c718e 45.9%,#3a548c 46.3%,#453581 46.7%,#482979 47.0%,#471063 52.8%,#460a5d 57.9%,#460a5d 99.9%) 0 72px/100% 1px no-repeat,
linear-gradient(90deg,#460a5d 0.1%,#460b5e 22.6%,#481a6c 24.3%,#453781 26.2%,#453781 27.4%,#482173 29.7%,#482878 33.4%,#453581 36.7%,#423f85 41.3%,#453581 44.1%,#423f85 44.5%,#306a8e 45.0%,#297a8e 45.4%,#2a788e 45.7%,#2c718e 45.9%,#39558c 46.3%,#453581 46.7%,#482979 47.0%,#471063 52.8%,#460a5d 57.9%,#460a5d 99.9%) 0 73px/100% 1px no-repeat,
linear-gradient(90deg,#460a5d 0.1%,#460b5e 22.6%,#481a6c 24.3%,#463480 26.0%,#443983 26.9%,#472e7c 28.4%,#482173 29.9%,#472d7b 33.7%,#453882 37.1%,#424086 41.3%,#453581 44.1%,#423f85 44.5%,#306a8e 45.0%,#297a8e 45.4%,#2a788e 45.7%,#2c718e 45.9%,#39558c 46.3%,#453581 46.7%,#482979 47.0%,#471063 52.8%,#460a5d 57.9%,#460a5d 99.9%) 0 74px/100% 1px no-repeat,
linear-gradient(90deg,#460a5d 0.1%,#460b5e 22.6%,#481a6c 24.3%,#463480 26.0%,#443983 27.1%,#482374 29.9%,#453581 34.8%,#424186 41.1%,#453781 44.1%,#423f85 44.5%,#306a8e 45.0%,#297a8e 45.4%,#2a788e 45.7%,#2c718e 45.9%,#39558c 46.3%,#453581 46.7%,#482979 47.0%,#471063 52.8%,#460a5d 57.9%,#460a5d 99.9%) 0 75px/100% 1px no-repeat,
linear-gradient(90deg,#460a5d 0.1%,#460b5e 22.6%,#48186a 24.1%,#453581 26.0%,#443a83 27.1%,#472a7a 28.9%,#482576 29.9%,#433d84 36.1%,#424186 41.5%,#453781 44.1%,#424086 44.5%,#306a8e 45.0%,#297a8e 45.4%,#29798e 45.7%,#31668e 46.1%,#453581 46.7%,#482979 47.0%,#471063 52.8%,#460a5d 57.9%,#460a5d 99.9%) 0 76px/100% 1px no-repeat,
linear-gradient(90deg,#460a5d 0.1%,#460b5e 22.6%,#48186a 24.1%,#443983 26.2%,#443b84 27.3%,#482677 29.9%,#423f85 35.2%,#414287 41.3%,#453781 44.1%,#424086 44.5%,#365c8d 44.8%,#2f6b8e 45.0%,#297a8e 45.4%,#29798e 45.7%,#31668e 46.1%,#453581 46.7%,#482979 47.0%,#471063 52.8%,#460a5d 57.9%,#460a5d 99.9%) 0 77px/100% 1px no-repeat,
linear-gradient(90deg,#460a5d 0.1%,#460b5e 22.6%,#48186a 24.1%,#453882 26.0%,#423f85 27.1%,#453581 28.4%,#482979 29.7%,#453882 32.6%,#414287 34.8%,#414287 41.7%,#453882 44.1%,#443983 44.3%,#424086 44.5%,#2f6b8e 45.0%,#2b758e 45.2%,#287c8e 45.6%,#2c728e 45.9%,#39558c 46.3%,#453581 46.7%,#482979 47.0%,#471063 52.8%,#460a5d 57.9%,#460a5d 99.9%) 0 78px/100% 1px no-repeat,
linear-gradient(90deg,#460a5d 0.1%,#460b5e 22.6%,#48186a 24.1%,#443a83 26.0%,#414287 27.3%,#46327e 28.9%,#472c7a 30.0%,#404688 34.3%,#404588 41.3%,#453882 44.1%,#424086 44.5%,#2f6b8e 45.0%,#297b8e 45.4%,#29798e 45.7%,#2c728e 45.9%,#39558c 46.3%,#453581 46.7%,#482979 47.0%,#471063 52.8%,#460a5d 57.9%,#460a5d 99.9%) 0 79px/100% 1px no-repeat,
linear-gradient(90deg,#460a5d 0.1%,#460b5e 22.6%,#481769 23.9%,#433d84 26.0%,#404588 27.3%,#443b84 28.4%,#472e7c 29.5%,#46327e 30.8%,#3e4989 33.7%,#404688 41.3%,#453882 44.1%,#424186 44.5%,#2f6b8e 45.0%,#297b8e 45.4%,#29798e 45.7%,#2c728e 45.9%,#39558c 46.3%,#453781 46.7%,#482979 47.0%,#471063 52.8%,#460a5d 57.9%,#460a5d 99.9%) 0 80px/100% 1px no-repeat,
linear-gradient(90deg,#460a5d 0.1%,#460b5e 22.6%,#481769 23.9%,#433e85 26.0%,#3f4788 27.1%,#404588 27.8%,#472f7d 29.7%,#433d84 31.7%,#3d4e8a 33.7%,#3f4788 41.3%,#443983 44.1%,#443a83 44.3%,#424186 44.5%,#2f6b8e 45.0%,#297b8e 45.4%,#29798e 45.7%,#2c728e 45.9%,#39558c 46.3%,#453781 46.7%,#482979 47.0%,#471063 52.8%,#460a5d 57.9%,#460a5d 99.9%) 0 81px/100% 1px no-repeat,
linear-gradient(90deg,#460a5d 0.1%,#460b5e 22.6%,#481769 23.9%,#423f85 26.0%,#3f4889 27.1%,#404688 27.8%,#46307e 29.7%,#443a83 31.1%,#3b518b 33.5%,#3c4f8a 36.1%,#3f4788 41.5%,#443983 44.1%,#424186 44.5%,#2f6c8e 45.0%,#297b8e 45.4%,#297a8e 45.7%,#31678e 46.1%,#453781 46.7%,#482979 47.0%,#471063 52.8%,#460a5d 57.9%,#460a5d 99.9%) 0 82px/100% 1px no-repeat,
linear-gradient(90deg,#460a5d 0.1%,#460b5e 22.6%,#481a6c 24.1%,#423f85 26.0%,#3e4989 27.1%,#414287 28.2%,#46327e 29.5%,#453581 30.6%,#3b528b 33.2%,#39558c 34.7%,#3d4d8a 38.4%,#3f4889 41.5%,#443983 44.1%,#414287 44.5%,#2a768e 45.2%,#287d8e 45.6%,#2c728e 45.9%,#39568c 46.3%,#453781 46.7%,#472a7a 47.0%,#481467 51.5%,#460a5d 56.7%,#460a5d 99.9%) 0 83px/100% 1px no-repeat,
linear-gradient(90deg,#460a5d 0.1%,#460b5e 22.6%,#481a6c 24.1%,#423f85 26.0%,#3e4989 27.1%,#404688 28.0%,#46337f 29.5%,#46337f 30.2%,#39568c 33.4%,#3a548c 35.6%,#3d4e8a 38.4%,#3e4989 41.3%,#443983 44.1%,#414287 44.5%,#2a768e 45.2%,#287d8e 45.6%,#2c728e 45.9%,#39568c 46.3%,#453781 46.7%,#472a7a 47.0%,#481467 51.5%,#460a5d 56.7%,#460a5d 99.9%) 0 84px/100% 1px no-repeat,
linear-gradient(90deg,#460a5d 0.1%,#460b5e 22.6%,#481a6c 24.1%,#423f85 26.0%,#3e4989 27.1%,#404688 28.0%,#46327e 29.7%,#433e85 31.1%,#38588c 33.4%,#38588c 34.8%,#3c4f8a 38.0%,#3f4889 41.5%,#443a83 44.1%,#443b84 44.3%,#3d4e8a 44.6%,#2f6c8e 45.0%,#287c8e 45.4%,#297a8e 45.7%,#31678e 46.1%,#453781 46.7%,#472a7a 47.0%,#481467 51.5%,#460a5d 56.7%,#460a5d 99.9%) 0 85px/100% 1px no-repeat,
linear-gradient(90deg,#460a5d 0.1%,#460b5e 22.6%,#481a6c 24.1%,#443b84 25.8%,#3e4989 26.9%,#3f4889 27.8%,#46337f 29.5%,#453882 30.6%,#38588c 33.4%,#38588c 35.0%,#3c4f8a 38.2%,#3e4989 41.3%,#443a83 44.1%,#443b84 44.3%,#3d4e8a 44.6%,#2f6c8e 45.0%,#287c8e 45.4%,#297a8e 45.7%,#31678e 46.1%,#453781 46.7%,#472a7a 47.0%,#481467 51.5%,#460a5d 56.7%,#460a5d 99.9%) 0 86px/100% 1px no-repeat,
linear-gradient(90deg,#460a5d 0.1%,#460b5e 22.6%,#481a6c 24.1%,#424086 26.0%,#3e4c8a 27.3%,#3f4788 28.0%,#46337f 29.5%,#453781 30.6%,#39568c 33.4%,#39568c 35.2%,#3c4f8a 38.0%,#3f4889 41.5%,#443983 44.1%,#414287 44.5%,#2a768e 45.2%,#287d8e 45.6%,#2c728e 45.9%,#39568c 46.3%,#453781 46.7%,#472a7a 47.0%,#481467 51.5%,#460a5d 56.7%,#460a5d 99.9%) 0 87px/100% 1px no-repeat,
linear-gradient(90deg,#460a5d 0.1%,#460b5e 22.6%,#481a6c 24.1%,#433d84 25.8%,#3e4a89 26.9%,#3e4a89 27.8%,#46337f 29.7%,#433d84 31.1%,#3a548c 33.4%,#3a548c 35.4%,#3d4e8a 38.5%,#3f4788 41.7%,#443983 44.1%,#414287 44.5%,#2a768e 45.2%,#287d8e 45.6%,#2c728e 45.9%,#39568c 46.3%,#453781 46.7%,#472a7a 47.0%,#481467 51.5%,#460a5d 56.7%,#460a5d 99.9%) 0 88px/100% 1px no-repeat,
linear-gradient(90deg,#460a5d 0.1%,#460b5e 22.6%,#481a6c 24.1%,#433e85 25.8%,#3d4e8a 27.1%,#3e4c8a 27.8%,#46337f 29.7%,#453882 30.8%,#3a538b 33.5%,#3c508b 36.1%,#3f4788 41.5%,#443983 44.1%,#424186 44.5%,#2f6c8e 45.0%,#2a768e 45.2%,#287c8e 45.6%,#297a8e 45.7%,#31678e 46.1%,#453781 46.7%,#482979 47.0%,#471063 52.8%,#460a5d 57.9%,#460a5d 99.9%) 0 89px/100% 1px no-repeat,
linear-gradient(90deg,#460a5d 0.1%,#460b5e 22.6%,#481b6d 24.1%,#414287 26.0%,#3c508b 27.1%,#3d4e8a 27.8%,#453581 29.5%,#453581 30.6%,#3c508b 33.5%,#3d4e8a 36.3%,#3f4788 41.5%,#443983 44.1%,#424186 44.5%,#2f6c8e 45.0%,#297b8e 45.4%,#29798e 45.7%,#31678e 46.1%,#453781 46.7%,#482979 47.0%,#471063 52.8%,#460a5d 57.9%,#460a5d 99.9%) 0 90px/100% 1px no-repeat,
linear-gradient(90deg,#460a5d 0.1%,#460b5e 22.6%,#481b6d 24.1%,#424086 25.8%,#3c4f8a 26.7%,#3b528b 27.6%,#463480 29.7%,#453581 30.8%,#3d4e8a 33.9%,#404688 41.5%,#453882 44.1%,#424186 44.5%,#2f6b8e 45.0%,#297b8e 45.4%,#29798e 45.7%,#2c728e 45.9%,#39558c 46.3%,#453781 46.7%,#482979 47.0%,#471063 52.8%,#460a5d 57.9%,#460a5d 99.9%) 0 91px/100% 1px no-repeat,
linear-gradient(90deg,#460a5d 0.1%,#460b5e 22.5%,#48186a 23.9%,#443983 25.4%,#3c4f8a 26.5%,#39558c 27.4%,#404688 28.6%,#46337f 29.9%,#453882 31.3%,#3e4a89 34.3%,#404688 41.3%,#453882 44.1%,#424186 44.5%,#2f6b8e 45.0%,#297b8e 45.4%,#29798e 45.7%,#2c728e 45.9%,#39558c 46.3%,#453581 46.7%,#482979 47.0%,#471063 52.8%,#460a5d 57.9%,#460a5d 99.9%) 0 92px/100% 1px no-repeat,
linear-gradient(90deg,#460a5d 0.1%,#460b5e 22.5%,#48186a 23.9%,#453581 25.2%,#3c508b 26.5%,#38588c 27.4%,#3f4889 28.6%,#463480 29.7%,#463480 31.0%,#3f4889 34.5%,#404588 41.3%,#453882 44.1%,#424086 44.5%,#2f6b8e 45.0%,#297b8e 45.4%,#29798e 45.7%,#2c728e 45.9%,#39558c 46.3%,#453581 46.7%,#482979 47.0%,#471063 52.8%,#460a5d 57.9%,#460a5d 99.9%) 0 93px/100% 1px no-repeat,
linear-gradient(90deg,#460a5d 0.1%,#460b5e 22.5%,#48186a 23.9%,#423f85 25.6%,#3a548c 26.7%,#375a8c 27.4%,#3d4d8a 28.4%,#46337f 29.9%,#453581 31.5%,#3f4788 35.0%,#414487 41.5%,#453781 44.1%,#424086 44.5%,#2f6b8e 45.0%,#2b758e 45.2%,#287c8e 45.6%,#2c718e 45.9%,#39558c 46.3%,#453581 46.7%,#482979 47.0%,#471063 52.8%,#460a5d 57.9%,#460a5d 99.9%) 0 94px/100% 1px no-repeat,
linear-gradient(90deg,#460a5d 0.1%,#460b5e 22.5%,#48186a 23.9%,#46327e 25.0%,#3c508b 26.3%,#365c8d 27.4%,#3d4e8a 28.4%,#453581 29.7%,#46327e 31.0%,#404688 35.4%,#414487 41.3%,#453781 44.1%,#424086 44.5%,#306a8e 45.0%,#297a8e 45.4%,#29798e 45.7%,#31668e 46.1%,#453581 46.7%,#482979 47.0%,#471063 52.8%,#460a5d 57.9%,#460a5d 99.9%) 0 95px/100% 1px no-repeat,
linear-gradient(90deg,#460a5d 0.1%,#460b5e 22.5%,#48186a 23.9%,#424086 25.6%,#3a538b 26.5%,#365d8d 27.4%,#3c4f8a 28.4%,#46337f 29.9%,#46337f 31.7%,#404588 35.6%,#414287 41.5%,#453781 44.1%,#424086 44.5%,#306a8e 45.0%,#297a8e 45.4%,#29798e 45.7%,#31668e 46.1%,#453581 46.7%,#482979 47.0%,#471063 52.8%,#460a5d 57.9%,#460a5d 99.9%) 0 96px/100% 1px no-repeat,
linear-gradient(90deg,#460a5d 0.1%,#460b5e 22.5%,#48186a 23.9%,#424086 25.6%,#3a538b 26.5%,#365d8d 27.4%,#3c4f8a 28.4%,#46337f 29.9%,#46337f 31.9%,#404588 35.8%,#414287 41.5%,#453781 44.1%,#424086 44.5%,#306a8e 45.0%,#297a8e 45.4%,#2a788e 45.7%,#2c718e 45.9%,#39558c 46.3%,#453581 46.7%,#482979 47.0%,#471063 52.8%,#460a5d 57.9%,#460a5d 99.9%) 0 97px/100% 1px no-repeat,
linear-gradient(90deg,#460a5d 0.1%,#460b5e 22.5%,#48186a 23.9%,#424086 25.6%,#3a538b 26.5%,#365d8d 27.4%,#3c4f8a 28.4%,#46337f 29.9%,#46337f 31.9%,#404588 35.8%,#414287 41.5%,#453781 44.1%,#424086 44.5%,#2b748e 45.2%,#297b8e 45.6%,#2c718e 45.9%,#3a548c 46.3%,#453581 46.7%,#482979 47.0%,#471063 52.8%,#460a5d 57.9%,#460a5d 99.9%) 0 98px/100% 1px no-repeat,
linear-gradient(90deg,#460a5d 0.1%,#460b5e 22.5%,#48186a 23.9%,#424086 25.6%,#3a538b 26.5%,#365d8d 27.4%,#3c4f8a 28.4%,#46337f 29.9%,#46337f 31.9%,#404588 35.6%,#414287 41.5%,#453781 44.1%,#423f85 44.5%,#30698e 45.0%,#29798e 45.4%,#2a778e 45.7%,#2d718e 45.9%,#3a548c 46.3%,#453581 46.7%,#482979 47.0%,#471063 52.8%,#460a5d 57.9%,#460a5d 99.9%) 0 99px/100% 1px no-repeat,
linear-gradient(90deg,#460a5d 0.1%,#460b5e 22.5%,#48186a 23.9%,#443b84 25.4%,#3b518b 26.3%,#365d8d 27.4%,#3c4f8a 28.4%,#453581 29.7%,#46327e 31.0%,#404688 35.8%,#414287 41.5%,#453781 44.1%,#423f85 44.5%,#31688e 45.0%,#2c728e 45.2%,#2a788e 45.6%,#2d708e 45.9%,#3a538b 46.3%,#453581 46.7%,#482979 47.0%,#471063 52.8%,#460a5d 57.9%,#460a5d 99.9%) 0 100px/100% 1px no-repeat,
linear-gradient(90deg,#460a5d 0.1%,#460b5e 22.5%,#48186a 23.9%,#46327e 25.0%,#3c4f8a 26.2%,#34608d 27.4%,#3e4989 28.7%,#453781 29.7%,#46337f 31.0%,#3f4788 35.6%,#414487 41.3%,#453781 44.1%,#423f85 44.5%,#31668e 45.0%,#2b748e 45.4%,#2c738e 45.7%,#33628d 46.1%,#463480 46.7%,#482979 47.0%,#471063 52.8%,#460a5d 57.9%,#460a5d 99.9%) 0 101px/100% 1px no-repeat,
linear-gradient(90deg,#460a5d 0.1%,#460b5e 22.5%,#481769 23.8%,#482979 24.7%,#3e4a89 25.8%,#32658e 27.3%,#33628d 27.8%,#443983 29.7%,#463480 30.8%,#3f4788 34.8%,#404588 41.3%,#453781 44.1%,#423f85 44.5%,#2f6b8e 45.2%,#2d718e 45.6%,#31688e 45.9%,#3c4f8a 46.3%,#463480 46.7%,#482979 47.0%,#471063 52.8%,#460a5d 57.9%,#460a5d 99.9%) 0 102px/100% 1px no-repeat,
linear-gradient(90deg,#460a5d 0.1%,#460b5e 22.5%,#481769 23.8%,#46307e 24.9%,#3a538b 26.0%,#2e6e8e 27.3%,#2e6e8e 27.6%,#433e85 29.7%,#453781 30.8%,#3e4989 34.7%,#404688 41.1%,#453882 44.1%,#433e85 44.5%,#32648e 45.2%,#30698e 45.6%,#34618d 45.9%,#433e85 46.5%,#472c7a 46.9%,#481769 50.7%,#460b5e 55.4%,#460a5d 99.9%) 0 103px/100% 1px no-repeat,
linear-gradient(90deg,#460a5d 0.1%,#460b5e 22.5%,#481668 23.6%,#482878 24.5%,#3d4d8a 25.6%,#2b748e 27.1%,#29798e 27.4%,#306a8e 28.2%,#424186 29.7%,#443983 30.4%,#423f85 32.1%,#3d4d8a 34.3%,#404688 41.3%,#453882 44.3%,#414287 44.6%,#375b8d 45.2%,#355e8d 45.6%,#39568c 45.9%,#443983 46.5%,#472c7a 46.9%,#481769 50.7%,#460b5e 55.4%,#460a5d 99.9%) 0 104px/100% 1px no-repeat,
linear-gradient(90deg,#460a5d 0.1%,#460b5e 22.5%,#48186a 23.8%,#453781 24.9%,#355e8d 26.0%,#25838e 27.3%,#26828e 27.6%,#404688 29.7%,#433d84 30.4%,#424186 31.9%,#3c508b 34.3%,#404688 41.5%,#453882 44.3%,#3b518b 45.4%,#3e4c8a 45.9%,#472a7a 46.9%,#471164 52.2%,#460a5d 57.4%,#460a5d 99.9%) 0 105px/100% 1px no-repeat,
linear-gradient(90deg,#460a5d 0.1%,#460b5e 22.5%,#481668 23.6%,#472c7a 24.5%,#3c4f8a 25.4%,#238a8d 27.1%,#21918c 27.4%,#3a538b 29.3%,#424086 30.2%,#424186 31.5%,#3a538b 34.1%,#3e4c8a 39.3%,#404588 41.9%,#453882 44.3%,#404688 45.4%,#433d84 46.1%,#472a7a 46.9%,#471164 52.2%,#460a5d 57.4%,#460a5d 99.9%) 0 106px/100% 1px no-repeat,
linear-gradient(90deg,#460a5d 0.1%,#460b5e 22.5%,#481a6c 23.8%,#463480 24.7%,#375a8c 25.6%,#26828e 26.7%,#1f9a8a 27.3%,#1e9b8a 27.4%,#2f6b8e 28.7%,#3d4d8a 29.7%,#424186 30.4%,#404588 31.7%,#39558c 33.7%,#3d4d8a 39.3%,#404688 41.9%,#453882 44.5%,#433d84 45.6%,#482979 47.0%,#471063 52.8%,#460a5d 57.9%,#460a5d 99.9%) 0 107px/100% 1px no-repeat,
linear-gradient(90deg,#460a5d 0.1%,#460b5e 22.5%,#481a6c 23.8%,#463480 24.7%,#365c8d 25.6%,#24878e 26.7%,#1fa187 27.3%,#1e9d89 27.6%,#2e6f8e 28.7%,#3c4f8a 29.7%,#414287 30.4%,#3f4788 31.7%,#38588c 33.7%,#3d4e8a 38.7%,#3f4788 41.7%,#453781 44.6%,#463480 45.9%,#482878 47.2%,#471063 52.8%,#460a5d 57.9%,#460a5d 99.9%) 0 108px/100% 1px no-repeat,
linear-gradient(90deg,#460a5d 0.1%,#460b5e 22.5%,#481a6c 23.8%,#472e7c 24.5%,#3a548c 25.4%,#23898e 26.7%,#20a386 27.3%,#20a486 27.4%,#228d8d 28.0%,#3a548c 29.5%,#414487 30.4%,#404688 31.5%,#38598c 33.5%,#3b528b 36.1%,#3e4989 41.3%,#453581 44.8%,#481668 51.1%,#460b5e 55.5%,#460a5d 99.9%) 0 109px/100% 1px no-repeat,
linear-gradient(90deg,#460a5d 0.1%,#460b5e 22.5%,#481a6c 23.8%,#472e7c 24.5%,#3a548c 25.4%,#238a8d 26.7%,#1f9e89 27.1%,#20a486 27.3%,#21a585 27.4%,#218e8d 28.0%,#3a548c 29.5%,#414487 30.4%,#3f4788 31.5%,#38598c 33.5%,#3a548c 35.8%,#3c4f8a 38.4%,#3f4889 41.5%,#482677 47.4%,#470e61 53.3%,#460a5d 58.7%,#460a5d 99.9%) 0 110px/100% 1px no-repeat,
linear-gradient(90deg,#460a5d 0.1%,#460b5e 22.5%,#481a6c 23.8%,#472e7c 24.5%,#3a548c 25.4%,#26818e 26.5%,#1f9e89 27.1%,#20a486 27.3%,#21a585 27.4%,#1f968b 27.8%,#33628d 29.1%,#3e4a89 29.9%,#414287 30.8%,#3c4f8a 32.4%,#38598c 34.1%,#3d4e8a 38.2%,#3e4989 41.3%,#482475 48.0%,#470e61 53.5%,#460a5d 58.5%,#460a5d 99.9%) 0 111px/100% 1px no-repeat,
linear-gradient(90deg,#460a5d 0.1%,#460b5e 22.5%,#481a6c 23.8%,#472e7c 24.5%,#3a548c 25.4%,#23898e 26.7%,#1f9e89 27.1%,#20a486 27.3%,#1fa088 27.6%,#2a768e 28.6%,#3c4f8a 29.7%,#424186 30.6%,#3d4d8a 32.4%,#39568c 34.1%,#3d4d8a 38.4%,#3f4889 41.5%,#482677 47.4%,#470e61 53.3%,#460a5d 58.7%,#460a5d 99.9%) 0 112px/100% 1px no-repeat,
linear-gradient(90deg,#460a5d 0.1%,#460b5e 22.5%,#481a6c 23.8%,#472e7c 24.5%,#3a548c 25.4%,#23898e 26.7%,#1f9e89 27.1%,#20a486 27.4%,#228d8d 28.0%,#3d4e8a 29.7%,#424086 30.6%,#404588 31.9%,#3a538b 33.9%,#3e4c8a 39.1%,#3f4788 41.5%,#453581 44.8%,#481769 50.7%,#460b5e 55.4%,#460a5d 99.9%) 0 113px/100% 1px no-repeat,
linear-gradient(90deg,#460a5d 0.1%,#460b5e 22.5%,#481a6c 23.8%,#472e7c 24.5%,#3a548c 25.4%,#23888e 26.7%,#1fa287 27.3%,#20a386 27.4%,#228c8d 28.0%,#3a538b 29.5%,#404588 30.0%,#433e85 31.1%,#3c4f8a 34.1%,#3e4a89 39.8%,#424186 42.4%,#453781 44.6%,#453581 45.7%,#482677 47.4%,#470e61 53.3%,#460a5d 58.7%,#460a5d 99.9%) 0 114px/100% 1px no-repeat,
linear-gradient(90deg,#460a5d 0.1%,#460b5e 22.5%,#481a6c 23.8%,#463480 24.7%,#375a8c 25.6%,#25848e 26.7%,#1f978b 27.1%,#1f9e89 27.4%,#21918c 27.8%,#39568c 29.3%,#414287 30.0%,#443b84 31.1%,#3e4a89 34.3%,#404688 41.3%,#453781 44.5%,#433d84 45.6%,#472f7d 46.5%,#482576 47.6%,#470e61 53.5%,#460a5d 58.5%,#460a5d 99.9%) 0 115px/100% 1px no-repeat,
linear-gradient(90deg,#460a5d 0.1%,#460b5e 22.5%,#48186a 23.8%,#46327e 24.7%,#39558c 25.6%,#21918c 27.3%,#218e8d 27.6%,#3b528b 29.3%,#423f85 30.0%,#453882 31.1%,#404688 34.7%,#404588 41.3%,#453781 44.3%,#404688 45.4%,#414287 45.9%,#472a7a 46.9%,#471164 52.2%,#460a5d 57.4%,#460a5d 99.9%) 0 116px/100% 1px no-repeat,
linear-gradient(90deg,#460a5d 0.1%,#460b5e 22.5%,#481467 23.6%,#472e7c 24.7%,#39558c 25.8%,#26818e 27.3%,#277f8e 27.6%,#404688 29.5%,#453882 30.2%,#463480 31.7%,#424186 34.8%,#414487 41.3%,#453781 44.3%,#404588 44.8%,#3b528b 45.4%,#3b518b 45.7%,#433e85 46.3%,#472a7a 46.9%,#471164 52.2%,#460a5d 57.4%,#460a5d 99.9%) 0 117px/100% 1px no-repeat,
linear-gradient(90deg,#460a5d 0.1%,#460b5e 22.5%,#481668 23.8%,#472f7d 24.9%,#3b528b 26.0%,#2d708e 27.3%,#2d708e 27.6%,#414287 29.3%,#463480 30.0%,#472f7d 31.5%,#433e85 36.0%,#414287 41.3%,#453781 44.1%,#443b84 44.5%,#365c8d 45.2%,#355f8d 45.6%,#38598c 45.9%,#443a83 46.5%,#472c7a 46.9%,#481a6c 50.0%,#460b5e 55.0%,#460a5d 99.9%) 0 118px/100% 1px no-repeat,
linear-gradient(90deg,#460a5d 0.1%,#460b5e 22.6%,#481769 23.9%,#46337f 25.2%,#3b528b 26.5%,#34608d 27.4%,#3c508b 28.4%,#46307e 29.9%,#472c7a 31.7%,#443a83 36.3%,#424186 41.3%,#453781 44.1%,#433d84 44.5%,#32658e 45.2%,#306a8e 45.6%,#33628d 45.9%,#3e4c8a 46.3%,#46337f 46.7%,#482979 47.0%,#471063 52.8%,#460a5d 57.9%,#460a5d 99.9%) 0 119px/100% 1px no-repeat,
linear-gradient(90deg,#460a5d 0.1%,#460b5e 22.8%,#481769 24.1%,#433e85 26.2%,#3d4d8a 27.4%,#423f85 28.6%,#472a7a 29.9%,#482979 32.4%,#453882 36.5%,#424086 41.1%,#453581 44.1%,#433e85 44.5%,#33638d 45.0%,#2d718e 45.4%,#2e6f8e 45.7%,#30698e 45.9%,#3c4f8a 46.3%,#463480 46.7%,#482979 47.0%,#471063 52.8%,#460a5d 57.9%,#460a5d 99.9%) 0 120px/100% 1px no-repeat,
linear-gradient(90deg,#460a5d 0.1%,#460b5e 23.0%,#48186a 24.5%,#463480 26.5%,#443a83 27.6%,#482475 29.9%,#482979 33.4%,#453581 36.7%,#424086 41.1%,#453581 44.1%,#433e85 44.5%,#31668e 45.0%,#2b748e 45.4%,#2c738e 45.7%,#33628d 46.1%,#463480 46.7%,#482979 47.0%,#471063 52.8%,#460a5d 57.9%,#460a5d 99.9%) 0 121px/100% 1px no-repeat,
linear-gradient(90deg,#460a5d 0.1%,#460b5e 23.2%,#481f70 25.6%,#482979 27.3%,#482374 28.9%,#482071 30.2%,#482878 33.5%,#463480 36.9%,#423f85 41.3%,#453581 44.1%,#423f85 44.5%,#31688e 45.0%,#2a778e 45.4%,#2a768e 45.7%,#32648e 46.1%,#453581 46.7%,#482979 47.0%,#471063 52.8%,#460a5d 57.9%,#460a5d 99.9%) 0 122px/100% 1px no-repeat,
linear-gradient(90deg,#460a5d 0.1%,#460b5e 23.4%,#481d6f 26.7%,#481c6e 29.1%,#482071 30.8%,#482677 33.5%,#453581 37.4%,#423f85 41.3%,#453581 44.1%,#423f85 44.5%,#30698e 45.0%,#2a788e 45.4%,#2a778e 45.7%,#2d718e 45.9%,#3a548c 46.3%,#453581 46.7%,#482979 47.0%,#471063 52.8%,#460a5d 57.9%,#460a5d 99.9%) 0 123px/100% 1px no-repeat,
linear-gradient(90deg,#460a5d 0.1%,#460b5e 23.6%,#481a6c 26.7%,#481c6e 30.2%,#482173 31.9%,#472d7b 34.8%,#423f85 41.1%,#453581 44.1%,#423f85 44.5%,#30698e 45.0%,#2c738e 45.2%,#297a8e 45.6%,#2d718e 45.9%,#3a548c 46.3%,#453581 46.7%,#482979 47.0%,#471063 52.8%,#460a5d 57.9%,#460a5d 99.9%) 0 124px/100% 1px no-repeat,
linear-gradient(90deg,#460a5d 0.1%,#460b5e 23.6%,#481a6c 26.7%,#481c6e 30.0%,#482173 31.7%,#482878 33.7%,#463480 36.9%,#423f85 41.1%,#453581 44.1%,#423f85 44.5%,#31688e 45.0%,#2a788e 45.4%,#2a768e 45.7%,#2d708e 45.9%,#3a548c 46.3%,#453581 46.7%,#482979 47.0%,#471063 52.8%,#460a5d 57.9%,#460a5d 99.9%) 0 125px/100% 1px no-repeat,
linear-gradient(90deg,#460a5d 0.1%,#460b5e 23.4%,#481b6d 26.5%,#481d6f 30.2%,#482374 31.9%,#472d7b 34.5%,#453581 37.1%,#423f85 41.3%,#453581 44.1%,#433e85 44.5%,#31678e 45.0%,#2c718e 45.2%,#2a778e 45.6%,#2e6f8e 45.9%,#3a538b 46.3%,#463480 46.7%,#482979 47.0%,#471063 52.8%,#460a5d 57.9%,#460a5d 99.9%) 0 126px/100% 1px no-repeat,
linear-gradient(90deg,#460a5d 0.1%,#460b5e 23.2%,#482475 26.9%,#482071 29.1%,#482173 30.4%,#472a7a 33.7%,#453781 36.5%,#423f85 41.3%,#453581 44.1%,#433e85 44.5%,#32658e 45.0%,#2c738e 45.4%,#2c728e 45.7%,#34618d 46.1%,#463480 46.7%,#482979 47.0%,#471063 52.8%,#460a5d 57.9%,#460a5d 99.9%) 0 127px/100% 1px no-repeat,
linear-gradient(90deg,#460a5d 0.1%,#460b5e 23.0%,#481a6c 24.7%,#46337f 26.7%,#453882 27.6%,#482576 29.9%,#472a7a 33.2%,#453882 36.3%,#423f85 41.5%,#453581 44.1%,#433d84 44.5%,#30698e 45.2%,#2e6f8e 45.6%,#31678e 45.9%,#423f85 46.5%,#472c7a 46.9%,#482475 47.8%,#470e61 53.5%,#460a5d 58.5%,#460a5d 99.9%) 0 128px/100% 1px no-repeat,
linear-gradient(90deg,#460a5d 0.1%,#460b5e 22.8%,#481a6c 24.3%,#433e85 26.0%,#3a548c 27.4%,#414487 28.6%,#472e7c 29.9%,#482979 32.1%,#453882 35.4%,#424086 41.1%,#453581 44.1%,#443b84 44.5%,#34618d 45.2%,#31668e 45.6%,#355f8d 45.9%,#443b84 46.5%,#472c7a 46.9%,#482475 47.8%,#470e61 53.5%,#460a5d 58.5%,#460a5d 99.9%) 0 129px/100% 1px no-repeat,
linear-gradient(90deg,#460a5d 0.1%,#460b5e 22.6%,#481b6d 24.1%,#423f85 25.4%,#30698e 26.9%,#2c728e 27.3%,#2c718e 27.6%,#423f85 29.5%,#46307e 30.4%,#472c7a 32.6%,#443b84 36.1%,#423f85 41.7%,#453581 44.3%,#424086 44.6%,#39568c 45.2%,#375b8d 45.6%,#3a548c 45.9%,#472f7d 46.7%,#482677 47.2%,#470e61 53.5%,#460a5d 58.5%,#460a5d 99.9%) 0 130px/100% 1px no-repeat,
linear-gradient(90deg,#460a5d 0.1%,#460b5e 22.5%,#481668 23.6%,#482475 24.3%,#3e4c8a 25.4%,#287c8e 26.7%,#218f8d 27.1%,#1f958b 27.4%,#23888e 27.8%,#3e4a89 29.5%,#453781 30.4%,#472d7b 32.1%,#433d84 36.1%,#424086 41.3%,#453581 44.3%,#424186 44.8%,#3d4e8a 45.4%,#3f4889 45.9%,#472a7a 46.9%,#471164 52.2%,#460a5d 57.4%,#460a5d 99.9%) 0 131px/100% 1px no-repeat,
linear-gradient(90deg,#460a5d 0.1%,#460b5e 22.5%,#481769 23.6%,#482979 24.3%,#3c4f8a 25.2%,#23898e 26.5%,#1f968b 26.7%,#21a585 26.9%,#2eb37c 27.1%,#3bbb75 27.3%,#3aba76 27.4%,#21a585 27.8%,#218e8d 28.2%,#3c4f8a 29.7%,#443b84 30.4%,#472f7d 31.7%,#463480 33.7%,#433e85 36.0%,#424086 41.5%,#463480 44.3%,#414287 45.4%,#443a83 46.1%,#482979 46.9%,#470e61 53.1%,#460a5d 58.9%,#460a5d 99.9%) 0 132px/100% 1px no-repeat,
linear-gradient(90deg,#460a5d 0.1%,#460b5e 22.3%,#481668 23.4%,#482677 24.1%,#3d4e8a 25.0%,#25848e 26.2%,#1f9f88 26.5%,#2db27d 26.7%,#56c667 26.9%,#89d548 27.1%,#a8db34 27.3%,#a0da39 27.4%,#7ad151 27.6%,#4ac16d 27.8%,#29af7f 28.0%,#1fa187 28.2%,#26828e 28.7%,#3c508b 29.9%,#433d84 30.6%,#46327e 31.7%,#46337f 33.2%,#424086 36.3%,#423f85 41.9%,#463480 44.5%,#443983 45.6%,#46307e 46.3%,#482677 47.2%,#470e61 53.5%,#460a5d 58.5%,#460a5d 99.9%) 0 133px/100% 1px no-repeat,
linear-gradient(90deg,#460a5d 0.1%,#460b5e 22.3%,#481668 23.4%,#472f7d 24.3%,#355e8d 25.2%,#21918c 26.2%,#1f9e89 26.3%,#2ab07f 26.5%,#5cc863 26.7%,#addc30 26.9%,#f6e620 27.1%,#fde725 27.3%,#fde725 27.4%,#d8e219 27.6%,#89d548 27.8%,#4cc26c 28.0%,#2cb17e 28.2%,#20a486 28.4%,#218f8d 28.7%,#355e8d 29.7%,#404588 30.4%,#453882 31.1%,#46327e 32.4%,#424086 36.1%,#424086 41.7%,#463480 44.6%,#46327e 45.9%,#482173 48.3%,#470d60 54.1%,#460a5d 62.4%,#460a5d 99.9%) 0 134px/100% 1px no-repeat,
linear-gradient(90deg,#460a5d 0.1%,#460b5e 22.3%,#481467 23.2%,#482475 23.9%,#414287 24.7%,#2a778e 25.6%,#1f978b 26.2%,#21a585 26.3%,#3bbb75 26.5%,#81d34d 26.7%,#e7e419 26.9%,#fde725 27.1%,#fde725 27.6%,#b8de29 27.8%,#67cc5c 28.0%,#3bbb75 28.2%,#26ad81 28.4%,#1fa188 28.6%,#277f8e 29.1%,#3b528b 30.0%,#423f85 30.8%,#463480 31.9%,#443983 33.7%,#424186 36.0%,#424086 41.7%,#46307e 45.6%,#471365 51.8%,#460a5d 56.8%,#460a5d 99.9%) 0 135px/100% 1px no-repeat,
linear-gradient(90deg,#460a5d 0.1%,#460b5e 22.3%,#481769 23.4%,#472a7a 24.1%,#3d4e8a 24.9%,#25838e 25.8%,#1f998a 26.2%,#22a884 26.3%,#42be71 26.5%,#90d743 26.7%,#fbe723 26.9%,#fde725 27.6%,#c8e020 27.8%,#73d056 28.0%,#40bd72 28.2%,#29af7f 28.4%,#20a386 28.6%,#228c8d 28.9%,#375b8d 29.9%,#414487 30.6%,#453882 31.5%,#453882 33.2%,#414287 36.0%,#424186 41.5%,#482374 48.2%,#470e61 53.5%,#460a5d 58.5%,#460a5d 99.9%) 0 136px/100% 1px no-repeat,
linear-gradient(90deg,#460a5d 0.1%,#460b5e 22.3%,#481769 23.4%,#472a7a 24.1%,#3d4e8a 24.9%,#25838e 25.8%,#1f9a8a 26.2%,#23a983 26.3%,#44bf70 26.5%,#95d840 26.7%,#fde725 26.9%,#fde725 27.6%,#cae11f 27.8%,#75d054 28.0%,#42be71 28.2%,#2ab07f 28.4%,#20a386 28.6%,#228d8d 28.9%,#32648e 29.7%,#3f4889 30.4%,#443a83 31.3%,#453781 32.4%,#414487 35.8%,#414287 41.3%,#482071 48.7%,#470d60 54.1%,#460a5d 62.4%,#460a5d 99.9%) 0 137px/100% 1px no-repeat,
linear-gradient(90deg,#460a5d 0.1%,#460b5e 22.3%,#481769 23.4%,#472a7a 24.1%,#3d4e8a 24.9%,#25838e 25.8%,#1f9a8a 26.2%,#23a983 26.3%,#44bf70 26.5%,#95d840 26.7%,#fde725 26.9%,#fde725 27.6%,#cae11f 27.8%,#75d054 28.0%,#42be71 28.2%,#2ab07f 28.4%,#20a486 28.6%,#228d8d 28.9%,#32648e 29.7%,#3e4989 30.4%,#443b84 31.3%,#443b84 33.0%,#404688 36.0%,#414287 41.5%,#481d6f 49.3%,#470d60 54.1%,#460a5d 62.4%,#460a5d 99.9%) 0 138px/100% 1px no-repeat,
linear-gradient(90deg,#460a5d 0.1%,#460b5e 22.3%,#481769 23.4%,#472a7a 24.1%,#3d4e8a 24.9%,#25838e 25.8%,#1f9a8a 26.2%,#23a983 26.3%,#44bf70 26.5%,#95d840 26.7%,#fde725 26.9%,#fde725 27.6%,#cae11f 27.8%,#75d054 28.0%,#42be71 28.2%,#2ab07f 28.4%,#20a486 28.6%,#228d8d 28.9%,#365d8d 29.9%,#404688 30.6%,#443b84 31.7%,#3f4788 36.0%,#414487 41.5%,#481d6f 49.3%,#470d60 54.1%,#460a5d 62.4%,#460a5d 99.9%) 0 139px/100% 1px no-repeat,
linear-gradient(90deg,#460a5d 0.1%,#460b5e 22.3%,#481769 23.4%,#472a7a 24.1%,#3d4e8a 24.9%,#25838e 25.8%,#1f9a8a 26.2%,#23a983 26.3%,#44bf70 26.5%,#95d840 26.7%,#fde725 26.9%,#fde725 27.6%,#cae11f 27.8%,#75d054 28.0%,#42be71 28.2%,#2ab07f 28.4%,#20a486 28.6%,#228d8d 28.9%,#365d8d 29.9%,#3f4788 30.6%,#433e85 31.5%,#3e4989 35.4%,#404588 41.3%,#481d6f 49.3%,#470d60 54.1%,#460a5d 62.4%,#460a5d 99.9%) 0 140px/100% 1px no-repeat,
linear-gradient(90deg,#460a5d 0.1%,#460b5e 22.3%,#481769 23.4%,#472a7a 24.1%,#3d4e8a 24.9%,#26828e 25.8%,#1f998a 26.2%,#22a884 26.3%,#42be71 26.5%,#90d743 26.7%,#f8e621 26.9%,#fde725 27.3%,#fde725 27.6%,#c5e021 27.8%,#70cf57 28.0%,#40bd72 28.2%,#29af7f 28.4%,#20a386 28.6%,#228d8d 28.9%,#365d8d 29.9%,#3f4889 30.6%,#424086 31.5%,#3e4c8a 34.8%,#404588 41.5%,#481d6f 49.3%,#470d60 54.1%,#460a5d 62.4%,#460a5d 99.9%) 0 141px/100% 1px no-repeat,
linear-gradient(90deg,#460a5d 0.1%,#460b5e 22.3%,#471365 23.2%,#482475 23.9%,#414287 24.7%,#2b758e 25.6%,#1f958b 26.2%,#20a386 26.3%,#35b779 26.5%,#75d054 26.7%,#d5e21a 26.9%,#fde725 27.1%,#fde725 27.6%,#aadc32 27.8%,#60ca60 28.0%,#37b878 28.2%,#25ab82 28.4%,#1f9f88 28.6%,#2b748e 29.3%,#39558c 30.0%,#404688 30.8%,#414287 31.9%,#3c4f8a 34.5%,#404688 41.5%,#481f70 49.1%,#470d60 54.1%,#460a5d 62.4%,#460a5d 99.9%) 0 142px/100% 1px no-repeat,
linear-gradient(90deg,#460a5d 0.1%,#460b5e 22.3%,#481668 23.4%,#472f7d 24.3%,#365c8d 25.2%,#228c8d 26.2%,#1f978b 26.3%,#23a983 26.5%,#44bf70 26.7%,#81d34d 26.9%,#c2df23 27.1%,#e5e419 27.3%,#dde318 27.4%,#aadc32 27.6%,#6ccd5a 27.8%,#3bbb75 28.0%,#25ab82 28.2%,#1f9f88 28.4%,#2a778e 29.1%,#38588c 29.9%,#3e4989 30.4%,#414487 31.3%,#3b528b 34.3%,#3e4c8a 39.3%,#404588 41.9%,#482374 48.2%,#470e61 53.5%,#460a5d 58.5%,#460a5d 99.9%) 0 143px/100% 1px no-repeat,
linear-gradient(90deg,#460a5d 0.1%,#460b5e 22.3%,#481467 23.4%,#472c7a 24.3%,#3a548c 25.2%,#24878e 26.3%,#20a386 26.7%,#31b57b 26.9%,#4ec36b 27.1%,#63cb5f 27.3%,#60ca60 27.4%,#48c16e 27.6%,#2db27d 27.8%,#20a386 28.0%,#218e8d 28.4%,#39568c 29.7%,#404688 30.4%,#404688 31.7%,#3a548c 33.7%,#3e4c8a 40.2%,#453882 44.1%,#471365 51.8%,#460a5d 56.8%,#460a5d 99.9%) 0 144px/100% 1px no-repeat,
linear-gradient(90deg,#460a5d 0.1%,#460b5e 22.5%,#481a6c 23.8%,#463480 24.7%,#375b8d 25.6%,#277f8e 26.5%,#1e9d89 27.1%,#20a386 27.3%,#20a386 27.4%,#1f948c 27.8%,#31668e 28.9%,#3e4989 29.9%,#424186 30.8%,#3b518b 32.8%,#38588c 34.3%,#3d4e8a 38.4%,#3f4889 41.5%,#482576 47.6%,#470e61 53.5%,#460a5d 58.5%,#460a5d 99.9%) 0 145px/100% 1px no-repeat,
linear-gradient(90deg,#460a5d 0.1%,#460b5e 22.5%,#48186a 23.8%,#472e7c 24.7%,#39558c 25.8%,#27808e 27.3%,#277e8e 27.6%,#404588 29.7%,#433e85 30.6%,#38588c 33.5%,#39558c 35.4%,#3c4f8a 38.0%,#3f4889 41.5%,#482374 48.2%,#470e61 53.5%,#460a5d 58.5%,#460a5d 99.9%) 0 146px/100% 1px no-repeat,
linear-gradient(90deg,#460a5d 0.1%,#460b5e 22.5%,#481769 23.8%,#472e7c 24.9%,#3d4d8a 26.0%,#32648e 27.3%,#34608d 27.8%,#433e85 29.5%,#443983 30.4%,#38598c 33.5%,#3a548c 35.8%,#3c4f8a 38.4%,#3f4889 41.5%,#482071 48.7%,#470d60 54.1%,#460a5d 62.4%,#460a5d 99.9%) 0 147px/100% 1px no-repeat,
linear-gradient(90deg,#460a5d 0.1%,#460b5e 22.6%,#481a6c 24.1%,#433d84 25.8%,#3e4a89 26.9%,#3e4c8a 27.6%,#463480 29.5%,#453581 30.4%,#39558c 33.2%,#38588c 34.8%,#3c4f8a 37.8%,#3f4889 41.5%,#482071 48.7%,#470d60 54.1%,#460a5d 62.4%,#460a5d 99.9%) 0 148px/100% 1px no-repeat,
linear-gradient(90deg,#460a5d 0.1%,#460b5e 22.6%,#48186a 24.1%,#453882 26.0%,#423f85 27.1%,#453781 28.4%,#472e7c 29.7%,#443983 31.0%,#39558c 33.4%,#39558c 35.0%,#3d4e8a 38.2%,#3f4889 41.5%,#482374 48.2%,#470e61 53.5%,#460a5d 58.5%,#460a5d 99.9%) 0 149px/100% 1px no-repeat,
linear-gradient(90deg,#460a5d 0.1%,#460b5e 22.6%,#48186a 24.1%,#453882 26.2%,#443a83 27.3%,#472c7a 29.5%,#46337f 30.6%,#3b518b 33.2%,#3a538b 34.8%,#3d4d8a 38.0%,#3f4889 41.3%,#482173 48.5%,#470e61 53.5%,#460a5d 58.5%,#460a5d 99.9%) 0 150px/100% 1px no-repeat,
linear-gradient(90deg,#460a5d 0.1%,#460b5e 22.6%,#48186a 24.1%,#453781 26.2%,#443a83 27.1%,#472a7a 29.7%,#453581 31.0%,#3d4e8a 33.4%,#3d4e8a 36.0%,#3e4a89 40.2%,#423f85 42.8%,#482071 48.7%,#470d60 54.1%,#460a5d 62.4%,#460a5d 99.9%) 0 151px/100% 1px no-repeat,
linear-gradient(90deg,#460a5d 0.1%,#460b5e 22.6%,#48186a 24.1%,#453781 26.2%,#443983 27.3%,#482979 29.7%,#453781 31.3%,#3e4a89 33.5%,#3e4989 36.7%,#404688 41.5%,#453581 44.8%,#481769 50.7%,#460b5e 55.4%,#460a5d 99.9%) 0 152px/100% 1px no-repeat,
linear-gradient(90deg,#460a5d 0.1%,#460b5e 22.6%,#48186a 24.1%,#453781 26.2%,#443983 27.3%,#482878 29.9%,#404688 33.7%,#404588 41.5%,#453581 44.5%,#453581 45.7%,#482878 47.0%,#470e61 53.3%,#460a5d 58.7%,#460a5d 99.9%) 0 153px/100% 1px no-repeat,
linear-gradient(90deg,#460a5d 0.1%,#460b5e 22.6%,#481a6c 24.3%,#463480 26.0%,#443a83 26.9%,#472e7c 28.6%,#482677 29.9%,#414287 34.5%,#404588 41.1%,#453781 44.5%,#433e85 45.6%,#472f7d 46.5%,#482878 47.2%,#471063 52.8%,#460a5d 57.9%,#460a5d 99.9%) 0 154px/100% 1px no-repeat,
linear-gradient(90deg,#460a5d 0.1%,#460b5e 22.6%,#481a6c 24.3%,#463480 26.0%,#443983 27.1%,#472c7a 28.7%,#482576 29.9%,#433e85 34.7%,#414287 41.5%,#453781 44.3%,#423f85 44.8%,#3f4889 45.4%,#414487 45.9%,#472d7b 46.7%,#482173 48.3%,#470d60 54.1%,#460a5d 62.4%,#460a5d 99.9%) 0 155px/100% 1px no-repeat,
linear-gradient(90deg,#460a5d 0.1%,#460b5e 22.6%,#481a6c 24.3%,#463480 26.0%,#443983 27.1%,#482475 29.7%,#443b84 35.8%,#414287 41.1%,#453781 44.3%,#433e85 44.6%,#3b518b 45.2%,#3a548c 45.6%,#3f4788 46.1%,#472f7d 46.7%,#482677 47.2%,#470e61 53.5%,#460a5d 58.5%,#460a5d 99.9%) 0 156px/100% 1px no-repeat,
linear-gradient(90deg,#460a5d 0.1%,#460b5e 22.6%,#481a6c 24.3%,#463480 26.0%,#443983 27.1%,#482374 29.9%,#46307e 33.7%,#443983 36.9%,#424186 41.1%,#453781 44.3%,#3e4c8a 44.8%,#365d8d 45.2%,#34618d 45.6%,#375a8c 45.9%,#443a83 46.5%,#472c7a 46.9%,#482475 47.8%,#470e61 53.5%,#460a5d 58.5%,#460a5d 99.9%) 0 157px/100% 1px no-repeat,
linear-gradient(90deg,#460a5d 0.1%,#460b5e 22.6%,#481a6c 24.3%,#463480 26.0%,#443983 27.1%,#482173 29.9%,#472d7b 33.7%,#453781 36.9%,#424086 41.3%,#453581 44.1%,#433d84 44.5%,#31668e 45.2%,#2f6b8e 45.6%,#33638d 45.9%,#433e85 46.5%,#472c7a 46.9%,#482475 47.8%,#470e61 53.5%,#460a5d 58.5%,#460a5d 99.9%) 0 158px/100% 1px no-repeat,
linear-gradient(90deg,#460a5d 0.1%,#460b5e 22.6%,#481a6c 24.3%,#463480 26.0%,#443983 26.9%,#472e7c 28.4%,#482173 29.7%,#482878 33.4%,#453581 37.1%,#423f85 40.9%,#453581 44.1%,#433e85 44.5%,#33638d 45.0%,#2d718e 45.4%,#2d708e 45.7%,#306a8e 45.9%,#3c508b 46.3%,#463480 46.7%,#482979 47.0%,#471063 52.8%,#460a5d 57.9%,#460a5d 99.9%) 0 159px/100% 1px no-repeat,
linear-gradient(90deg,#460a5d 0.1%,#460b5e 22.6%,#481a6c 24.3%,#463480 26.0%,#443983 26.9%,#472c7a 28.6%,#482071 29.9%,#482878 33.5%,#463480 36.9%,#423f85 41.1%,#453581 44.1%,#433e85 44.5%,#31668e 45.0%,#2b758e 45.4%,#2b748e 45.7%,#2e6e8e 45.9%,#3b528b 46.3%,#463480 46.7%,#482979 47.0%,#471063 52.8%,#460a5d 57.9%,#460a5d 99.9%) 0 160px/100% 1px no-repeat,
linear-gradient(90deg,#460a5d 0.1%,#460b5e 22.6%,#481a6c 24.3%,#463480 26.0%,#443983 26.9%,#472c7a 28.6%,#482071 29.9%,#482878 33.5%,#463480 36.9%,#423f85 41.1%,#453581 44.1%,#423f85 44.5%,#31688e 45.0%,#2c728e 45.2%,#29798e 45.6%,#2d708e 45.9%,#3a538b 46.3%,#453581 46.7%,#482979 47.0%,#471063 52.8%,#460a5d 57.9%,#460a5d 99.9%) 0 161px/100% 1px no-repeat,
linear-gradient(90deg,#460a5d 0.1%,#460b5e 22.6%,#481a6c 24.3%,#463480 26.0%,#443983 26.9%,#472e7c 28.4%,#482173 29.7%,#482878 33.4%,#463480 36.5%,#423f85 41.1%,#453581 44.1%,#423f85 44.5%,#30698e 45.0%,#29798e 45.4%,#2a778e 45.7%,#2d718e 45.9%,#3a548c 46.3%,#453581 46.7%,#482979 47.0%,#471063 52.8%,#460a5d 57.9%,#460a5d 99.9%) 0 162px/100% 1px no-repeat,
linear-gradient(90deg,#460a5d 0.1%,#460b5e 22.6%,#481a6c 24.3%,#463480 26.0%,#443983 27.1%,#482173 29.9%,#472c7a 33.7%,#453781 36.7%,#424086 41.3%,#453581 44.1%,#423f85 44.5%,#306a8e 45.0%,#2b748e 45.2%,#297b8e 45.6%,#2c718e 45.9%,#3a548c 46.3%,#453581 46.7%,#482979 47.0%,#471063 52.8%,#460a5d 57.9%,#460a5d 99.9%) 0 163px/100% 1px no-repeat,
linear-gradient(90deg,#460a5d 0.1%,#460b5e 22.6%,#481a6c 24.3%,#463480 26.0%,#443983 27.1%,#472a7a 28.7%,#482374 30.0%,#46307e 33.9%,#443983 36.7%,#424086 41.3%,#453781 44.1%,#423f85 44.5%,#306a8e 45.0%,#297a8e 45.4%,#2a788e 45.7%,#2c718e 45.9%,#39558c 46.3%,#453581 46.7%,#482979 47.0%,#471063 52.8%,#460a5d 57.9%,#460a5d 99.9%) 0 164px/100% 1px no-repeat,
linear-gradient(90deg,#460a5d 0.1%,#460b5e 22.6%,#481a6c 24.3%,#463480 26.0%,#443983 27.1%,#472d7b 28.6%,#482475 29.7%,#443b84 36.3%,#424186 41.3%,#453781 44.1%,#424086 44.5%,#306a8e 45.0%,#297a8e 45.4%,#29798e 45.7%,#31668e 46.1%,#453581 46.7%,#482979 47.0%,#471063 52.8%,#460a5d 57.9%,#460a5d 99.9%) 0 165px/100% 1px no-repeat,
linear-gradient(90deg,#460a5d 0.1%,#460b5e 22.6%,#481a6c 24.3%,#463480 26.0%,#443a83 26.9%,#472e7c 28.6%,#482576 29.7%,#423f85 35.8%,#414287 41.3%,#453781 44.1%,#424086 44.5%,#306a8e 45.0%,#297a8e 45.4%,#29798e 45.7%,#31668e 46.1%,#453581 46.7%,#482979 47.0%,#471063 52.8%,#460a5d 57.9%,#460a5d 99.9%) 0 166px/100% 1px no-repeat,
linear-gradient(90deg,#460a5d 0.1%,#460b5e 22.6%,#48186a 24.1%,#453882 26.2%,#453882 27.6%,#482677 29.7%,#424186 34.8%,#414487 41.3%,#453781 44.1%,#424086 44.5%,#2f6b8e 45.0%,#2b758e 45.2%,#287c8e 45.6%,#2c728e 45.9%,#39558c 46.3%,#453581 46.7%,#482979 47.0%,#471063 52.8%,#460a5d 57.9%,#460a5d 99.9%) 0 167px/100% 1px no-repeat,
linear-gradient(90deg,#460a5d 0.1%,#460b5e 22.6%,#48186a 24.1%,#443983 26.2%,#443b84 27.3%,#482979 29.7%,#404588 34.3%,#414487 41.5%,#453882 44.1%,#424086 44.5%,#2f6b8e 45.0%,#297b8e 45.4%,#29798e 45.7%,#2c728e 45.9%,#39558c 46.3%,#453581 46.7%,#482979 47.0%,#471063 52.8%,#460a5d 57.9%,#460a5d 99.9%) 0 168px/100% 1px no-repeat,
linear-gradient(90deg,#460a5d 0.1%,#460b5e 22.6%,#48186a 24.1%,#453882 26.0%,#423f85 27.1%,#463480 28.6%,#472a7a 29.9%,#3f4889 33.9%,#404688 41.3%,#453882 44.1%,#424186 44.5%,#2f6b8e 45.0%,#297b8e 45.4%,#29798e 45.7%,#2c728e 45.9%,#39558c 46.3%,#453781 46.7%,#482979 47.0%,#471063 52.8%,#460a5d 57.9%,#460a5d 99.9%) 0 169px/100% 1px no-repeat,
linear-gradient(90deg,#460a5d 0.1%,#460b5e 22.6%,#48186a 24.1%,#443a83 26.0%,#424186 27.1%,#443983 28.4%,#472d7b 29.7%,#453781 31.1%,#3d4d8a 33.7%,#3e4a89 36.9%,#404688 41.5%,#443983 44.1%,#443a83 44.3%,#424186 44.5%,#2f6b8e 45.0%,#297b8e 45.4%,#29798e 45.7%,#2c728e 45.9%,#39558c 46.3%,#453781 46.7%,#482979 47.0%,#471063 52.8%,#460a5d 57.9%,#460a5d 99.9%) 0 170px/100% 1px no-repeat,
linear-gradient(90deg,#460a5d 0.1%,#460b5e 22.6%,#481769 23.9%,#443b84 26.0%,#404588 27.1%,#433e85 28.2%,#472f7d 29.5%,#46337f 30.6%,#3c4f8a 33.4%,#3b518b 35.0%,#3e4c8a 38.7%,#404688 41.7%,#443983 44.1%,#424186 44.5%,#2f6c8e 45.0%,#297b8e 45.4%,#297a8e 45.7%,#31678e 46.1%,#453781 46.7%,#482979 47.0%,#471063 52.8%,#460a5d 57.9%,#460a5d 99.9%) 0 171px/100% 1px no-repeat,
linear-gradient(90deg,#460a5d 0.1%,#460b5e 22.6%,#481769 23.9%,#433e85 26.0%,#3f4788 27.1%,#424086 28.2%,#46307e 29.5%,#453581 30.6%,#3a538b 33.4%,#3a538b 35.2%,#3d4d8a 38.4%,#3f4889 41.3%,#443983 44.1%,#414287 44.5%,#2a768e 45.2%,#287d8e 45.6%,#2c728e 45.9%,#39568c 46.3%,#453781 46.7%,#482979 47.0%,#471063 52.8%,#460a5d 57.9%,#460a5d 99.9%) 0 172px/100% 1px no-repeat,
linear-gradient(90deg,#460a5d 0.1%,#460b5e 22.6%,#481a6c 24.1%,#423f85 26.0%,#3e4989 27.1%,#414287 28.2%,#46337f 29.5%,#463480 30.4%,#3a548c 33.2%,#39568c 34.8%,#3d4e8a 38.2%,#3f4889 41.5%,#443983 44.1%,#414287 44.5%,#2a768e 45.2%,#287d8e 45.6%,#2c728e 45.9%,#39568c 46.3%,#453781 46.7%,#472a7a 47.0%,#481467 51.5%,#460a5d 56.7%,#460a5d 99.9%) 0 173px/100% 1px no-repeat,
linear-gradient(90deg,#460a5d 0.1%,#460b5e 22.6%,#481c6e 24.3%,#424086 26.0%,#3e4a89 27.1%,#3f4889 27.8%,#46337f 29.5%,#453882 30.6%,#38588c 33.4%,#38588c 34.8%,#3c4f8a 38.0%,#3f4889 41.5%,#443983 44.1%,#414287 44.5%,#2a768e 45.2%,#287d8e 45.6%,#2c728e 45.9%,#39568c 46.3%,#453781 46.7%,#472a7a 47.0%,#481467 51.5%,#460a5d 56.7%,#460a5d 99.9%) 0 174px/100% 1px no-repeat,
linear-gradient(90deg,#460a5d 0.1%,#460b5e 22.6%,#481a6c 24.1%,#424086 26.0%,#3e4a89 27.1%,#3f4788 28.0%,#463480 29.5%,#453581 30.4%,#38588c 33.4%,#38588c 35.0%,#3c4f8a 38.2%,#3e4989 41.3%,#443a83 44.1%,#443b84 44.3%,#3d4e8a 44.6%,#2f6c8e 45.0%,#287c8e 45.4%,#297a8e 45.7%,#31678e 46.1%,#453781 46.7%,#472a7a 47.0%,#481467 51.5%,#460a5d 56.7%,#460a5d 99.9%) 0 175px/100% 1px no-repeat,
linear-gradient(90deg,#460a5d 0.1%,#460b5e 22.6%,#481a6c 24.1%,#424086 26.0%,#3e4a89 27.1%,#3f4788 28.0%,#463480 29.5%,#453581 30.4%,#39558c 33.2%,#38588c 34.8%,#3c4f8a 38.0%,#3f4889 41.5%,#443983 44.1%,#414287 44.5%,#2a768e 45.2%,#287d8e 45.6%,#2c728e 45.9%,#39568c 46.3%,#453781 46.7%,#472a7a 47.0%,#481467 51.5%,#460a5d 56.7%,#460a5d 99.9%) 0 176px/100% 1px no-repeat,
linear-gradient(90deg,#460a5d 0.1%,#460b5e 22.6%,#481a6c 24.1%,#424086 26.0%,#3e4a89 27.1%,#3f4788 28.0%,#46337f 29.5%,#453781 30.6%,#39558c 33.4%,#39558c 35.2%,#3d4e8a 38.4%,#3f4889 41.5%,#443983 44.1%,#414287 44.5%,#2a768e 45.2%,#287d8e 45.6%,#2c728e 45.9%,#39568c 46.3%,#453781 46.7%,#472a7a 47.0%,#481467 51.5%,#460a5d 56.7%,#460a5d 99.9%) 0 177px/100% 1px no-repeat,
linear-gradient(90deg,#460a5d 0.1%,#460b5e 22.6%,#481a6c 24.1%,#424086 26.0%,#3e4a89 27.1%,#3f4788 28.0%,#46327e 29.7%,#443b84 31.1%,#3b528b 33.4%,#3b528b 35.8%,#3d4d8a 38.9%,#404688 41.7%,#443983 44.1%,#424186 44.5%,#2f6c8e 45.0%,#2a768e 45.2%,#287d8e 45.6%,#2c728e 45.9%,#39568c 46.3%,#453781 46.7%,#482979 47.0%,#471063 52.8%,#460a5d 57.9%,#460a5d 99.9%) 0 178px/100% 1px no-repeat,
linear-gradient(90deg,#460a5d 0.1%,#460b5e 22.6%,#481a6c 24.1%,#424086 26.0%,#3e4a89 27.1%,#3f4788 28.0%,#46327e 29.7%,#453781 30.8%,#3b518b 33.7%,#3f4788 41.5%,#443983 44.1%,#424186 44.5%,#2f6c8e 45.0%,#297b8e 45.4%,#297a8e 45.7%,#31678e 46.1%,#453781 46.7%,#482979 47.0%,#471063 52.8%,#460a5d 57.9%,#460a5d 99.9%) 0 179px/100% 1px no-repeat,
linear-gradient(90deg,#460a5d 0.1%,#460b5e 22.6%,#481a6c 24.1%,#433d84 25.8%,#3e4a89 26.9%,#3e4c8a 27.6%,#46327e 29.7%,#453581 30.8%,#3d4e8a 33.9%,#404688 41.5%,#453882 44.1%,#424186 44.5%,#2f6b8e 45.0%,#297b8e 45.4%,#29798e 45.7%,#2c728e 45.9%,#39558c 46.3%,#453781 46.7%,#482979 47.0%,#471063 52.8%,#460a5d 57.9%,#460a5d 99.9%) 0 180px/100% 1px no-repeat,
linear-gradient(90deg,#460a5d 0.1%,#460b5e 22.6%,#481a6c 24.1%,#433e85 25.8%,#3e4c8a 26.9%,#3e4c8a 27.8%,#46337f 29.5%,#46337f 30.6%,#3e4c8a 34.3%,#404688 41.3%,#453882 44.1%,#424186 44.5%,#2f6b8e 45.0%,#297b8e 45.4%,#29798e 45.7%,#2c728e 45.9%,#39558c 46.3%,#453781 46.7%,#482979 47.0%,#471063 52.8%,#460a5d 57.9%,#460a5d 99.9%) 0 181px/100% 1px no-repeat,
linear-gradient(90deg,#460a5d 0.1%,#460b5e 22.6%,#481b6d 24.1%,#414287 26.0%,#3c508b 27.3%,#3f4889 28.2%,#46327e 29.7%,#46337f 30.8%,#3f4889 34.5%,#404588 41.3%,#453882 44.1%,#424086 44.5%,#2f6b8e 45.0%,#297b8e 45.4%,#29798e 45.7%,#2c728e 45.9%,#39558c 46.3%,#453581 46.7%,#482979 47.0%,#471063 52.8%,#460a5d 57.9%,#460a5d 99.9%) 0 182px/100% 1px no-repeat,
linear-gradient(90deg,#460a5d 0.1%,#460b5e 22.6%,#481b6d 24.1%,#424086 25.8%,#3c508b 26.9%,#3b528b 27.6%,#46337f 29.7%,#46337f 31.1%,#3f4788 35.0%,#414487 41.5%,#453781 44.1%,#424086 44.5%,#2f6b8e 45.0%,#2b758e 45.2%,#287c8e 45.6%,#2c728e 45.9%,#39558c 46.3%,#453581 46.7%,#482979 47.0%,#471063 52.8%,#460a5d 57.9%,#460a5d 99.9%) 0 183px/100% 1px no-repeat,
linear-gradient(90deg,#460a5d 0.1%,#460b5e 22.5%,#48186a 23.9%,#443983 25.4%,#3c4f8a 26.5%,#39558c 27.4%,#404688 28.6%,#46337f 29.7%,#46337f 31.5%,#404688 35.4%,#414287 41.5%,#453781 44.1%,#424086 44.5%,#306a8e 45.0%,#297a8e 45.4%,#29798e 45.7%,#31668e 46.1%,#453581 46.7%,#482979 47.0%,#471063 52.8%,#460a5d 57.9%,#460a5d 99.9%) 0 184px/100% 1px no-repeat,
linear-gradient(90deg,#460a5d 0.1%,#460b5e 22.5%,#48186a 23.9%,#453581 25.2%,#3d4e8a 26.3%,#38598c 27.4%,#3e4c8a 28.4%,#46327e 29.9%,#463480 32.3%,#404588 35.6%,#414287 41.3%,#453781 44.1%,#424086 44.5%,#306a8e 45.0%,#297a8e 45.4%,#29798e 45.7%,#31668e 46.1%,#453581 46.7%,#482979 47.0%,#471063 52.8%,#460a5d 57.9%,#460a5d 99.9%) 0 185px/100% 1px no-repeat,
linear-gradient(90deg,#460a5d 0.1%,#460b5e 22.5%,#48186a 23.9%,#453581 25.2%,#3c508b 26.3%,#375b8d 27.4%,#3d4e8a 28.4%,#463480 29.7%,#46307e 31.3%,#414487 36.0%,#424186 41.5%,#453781 44.1%,#423f85 44.5%,#306a8e 45.0%,#297a8e 45.4%,#29798e 45.7%,#31668e 46.1%,#453581 46.7%,#482979 47.0%,#471063 52.8%,#460a5d 57.9%,#460a5d 99.9%) 0 186px/100% 1px no-repeat,
linear-gradient(90deg,#460a5d 0.1%,#460b5e 22.5%,#48186a 23.9%,#424086 25.6%,#3a538b 26.5%,#365d8d 27.4%,#3c4f8a 28.4%,#453882 29.5%,#472f7d 30.6%,#453781 33.2%,#414287 36.0%,#424186 41.5%,#453781 44.1%,#423f85 44.5%,#306a8e 45.0%,#297a8e 45.4%,#2a788e 45.7%,#2c718e 45.9%,#39558c 46.3%,#453581 46.7%,#482979 47.0%,#471063 52.8%,#460a5d 57.9%,#460a5d 99.9%) 0 187px/100% 1px no-repeat,
linear-gradient(90deg,#460a5d 0.1%,#460b5e 22.5%,#48186a 23.9%,#443b84 25.4%,#3b518b 26.3%,#365d8d 27.4%,#3c4f8a 28.4%,#46337f 29.9%,#46307e 31.3%,#453882 33.4%,#414287 36.1%,#424186 41.5%,#453781 44.1%,#423f85 44.5%,#306a8e 45.0%,#297a8e 45.4%,#2a788e 45.7%,#2c718e 45.9%,#39558c 46.3%,#453581 46.7%,#482979 47.0%,#471063 52.8%,#460a5d 57.9%,#460a5d 99.9%) 0 188px/100% 1px no-repeat,
linear-gradient(90deg,#460a5d 0.1%,#460b5e 22.5%,#48186a 23.9%,#443b84 25.4%,#3b518b 26.3%,#365d8d 27.4%,#3c4f8a 28.4%,#46337f 29.9%,#472f7d 31.3%,#443b84 34.1%,#414287 36.5%,#424186 41.5%,#453781 44.1%,#423f85 44.5%,#306a8e 45.0%,#29798e 45.4%,#2a788e 45.7%,#2c718e 45.9%,#3a548c 46.3%,#453581 46.7%,#482979 47.0%,#471063 52.8%,#460a5d 57.9%,#460a5d 99.9%) 0 189px/100% 1px no-repeat,
linear-gradient(90deg,#460a5d 0.1%,#460b5e 22.5%,#48186a 23.9%,#443b84 25.4%,#3b518b 26.3%,#365d8d 27.4%,#3c4f8a 28.4%,#46337f 29.9%,#46307e 31.3%,#453882 33.4%,#414287 36.1%,#424186 41.5%,#453781 44.1%,#423f85 44.5%,#30698e 45.0%,#29798e 45.4%,#2a778e 45.7%,#2d718e 45.9%,#3a548c 46.3%,#453581 46.7%,#482979 47.0%,#471063 52.8%,#460a5d 57.9%,#460a5d 99.9%) 0 190px/100% 1px no-repeat,
linear-gradient(90deg,#460a5d 0.1%,#460b5e 22.5%,#48186a 23.9%,#443b84 25.4%,#3b518b 26.3%,#365d8d 27.4%,#3c4f8a 28.4%,#46337f 29.9%,#46337f 32.4%,#414287 35.6%,#424186 41.5%,#453781 44.1%,#423f85 44.5%,#31688e 45.0%,#2a778e 45.4%,#2a768e 45.7%,#2d708e 45.9%,#3a538b 46.3%,#453581 46.7%,#482979 47.0%,#471063 52.8%,#460a5d 57.9%,#460a5d 99.9%) 0 191px/100% 1px no-repeat,
linear-gradient(90deg,#460a5d 0.1%,#460b5e 22.5%,#48186a 23.9%,#443b84 25.4%,#3b518b 26.3%,#355e8d 27.4%,#3f4788 28.7%,#46337f 29.9%,#46337f 32.1%,#414487 35.8%,#424186 41.7%,#453781 44.1%,#423f85 44.5%,#38598c 44.8%,#2d708e 45.2%,#2b758e 45.6%,#2e6d8e 45.9%,#3b528b 46.3%,#463480 46.7%,#482979 47.0%,#471063 52.8%,#460a5d 57.9%,#460a5d 99.9%) 0 192px/100% 1px no-repeat,
linear-gradient(90deg,#460a5d 0.1%,#460b5e 22.5%,#48186a 23.9%,#453781 25.2%,#39558c 26.5%,#355e8d 27.4%,#3c508b 28.4%,#463480 29.9%,#463480 31.9%,#404588 35.6%,#414287 41.5%,#453781 44.1%,#433e85 44.5%,#2f6b8e 45.2%,#2d718e 45.6%,#31688e 45.9%,#3c4f8a 46.3%,#463480 46.7%,#482979 47.0%,#471063 52.8%,#460a5d 57.9%,#460a5d 99.9%) 0 193px/100% 1px no-repeat,
linear-gradient(90deg,#460a5d 0.1%,#460b5e 22.5%,#481668 23.8%,#46337f 25.0%,#3b518b 26.2%,#33628d 27.4%,#38588c 28.2%,#453882 29.7%,#46337f 30.8%,#423f85 33.4%,#404688 36.0%,#414487 41.3%,#453781 44.1%,#433d84 44.5%,#32648e 45.2%,#30698e 45.6%,#34618d 45.9%,#3e4a89 46.3%,#46337f 46.7%,#482979 47.0%,#471063 52.8%,#460a5d 57.9%,#460a5d 99.9%) 0 194px/100% 1px no-repeat,
linear-gradient(90deg,#460a5d 0.1%,#460b5e 22.5%,#481769 23.8%,#472f7d 24.9%,#3b518b 26.0%,#30698e 27.3%,#31668e 27.8%,#443b84 29.7%,#453581 30.6%,#423f85 33.0%,#3f4788 34.8%,#404588 41.3%,#453781 44.1%,#443b84 44.5%,#375a8c 45.2%,#355e8d 45.6%,#39568c 45.9%,#443983 46.5%,#472c7a 46.9%,#481a6c 50.0%,#460b5e 55.0%,#460a5d 99.9%) 0 195px/100% 1px no-repeat,
linear-gradient(90deg,#460a5d 0.1%,#460b5e 22.5%,#481769 23.8%,#453882 25.0%,#375b8d 26.2%,#2c728e 27.3%,#2c728e 27.6%,#414287 29.5%,#453882 30.4%,#433e85 32.3%,#3e4989 34.3%,#404688 41.1%,#453882 44.3%,#433e85 44.6%,#3c4f8a 45.2%,#3c4f8a 45.7%,#433e85 46.3%,#472a7a 46.9%,#471164 52.2%,#460a5d 57.4%,#460a5d 99.9%) 0 196px/100% 1px no-repeat,
linear-gradient(90deg,#460a5d 0.1%,#460b5e 22.5%,#48186a 23.8%,#472f7d 24.7%,#39558c 25.8%,#277e8e 27.3%,#287d8e 27.6%,#414487 29.7%,#443a83 30.4%,#424186 32.3%,#3d4d8a 34.3%,#404688 41.3%,#453781 44.3%,#404588 45.4%,#424186 45.9%,#472a7a 46.9%,#471164 52.2%,#460a5d 57.4%,#460a5d 99.9%) 0 197px/100% 1px no-repeat,
linear-gradient(90deg,#460a5d 0.1%,#460b5e 22.5%,#48186a 23.8%,#46307e 24.7%,#3a548c 25.6%,#238a8d 27.3%,#24878e 27.6%,#3e4c8a 29.5%,#423f85 30.2%,#423f85 31.5%,#3c508b 34.3%,#404688 41.5%,#453781 44.5%,#433d84 45.4%,#453581 46.1%,#482878 47.0%,#470e61 53.3%,#460a5d 58.7%,#460a5d 99.9%) 0 198px/100% 1px no-repeat,
linear-gradient(90deg,#460a5d 0.1%,#460b5e 22.5%,#481a6c 23.8%,#46337f 24.7%,#38588c 25.6%,#23888e 26.9%,#1f968b 27.3%,#1f978b 27.4%,#33638d 28.9%,#3f4788 29.9%,#423f85 30.6%,#404688 32.1%,#3b528b 33.7%,#3f4788 41.5%,#453781 44.6%,#453581 45.7%,#482677 47.4%,#470e61 53.3%,#460a5d 58.7%,#460a5d 99.9%) 0 199px/100% 1px no-repeat,
linear-gradient(90deg,#460a5d 0.1%,#460b5e 22.5%,#481a6c 23.8%,#463480 24.7%,#375b8d 25.6%,#24868e 26.7%,#1f9a8a 27.1%,#1fa188 27.4%,#20938c 27.8%,#38598c 29.3%,#404688 30.0%,#424186 31.1%,#39558c 33.9%,#3d4d8a 38.9%,#404688 41.9%,#453581 44.8%,#481668 51.1%,#460b5e 55.5%,#460a5d 99.9%) 0 200px/100% 1px no-repeat,
linear-gradient(90deg,#460a5d 0.1%,#460b5e 22.5%,#481a6c 23.8%,#472e7c 24.5%,#3a548c 25.4%,#238a8d 26.7%,#1f9e89 27.1%,#20a486 27.3%,#21a585 27.4%,#218e8d 28.0%,#3c4f8a 29.7%,#414287 30.4%,#404588 31.5%,#39568c 33.5%,#3b528b 36.0%,#3d4d8a 39.6%,#404688 41.9%,#482173 48.5%,#470e61 53.5%,#460a5d 58.5%,#460a5d 99.9%) 0 201px/100% 1px no-repeat,
linear-gradient(90deg,#460a5d 0.1%,#460b5e 22.5%,#481769 23.6%,#472e7c 24.5%,#39558c 25.4%,#26828e 26.5%,#1fa088 27.1%,#21a685 27.3%,#21a685 27.4%,#218f8d 28.0%,#39558c 29.5%,#3f4788 30.0%,#414287 31.0%,#38588c 33.7%,#3d4e8a 38.4%,#3f4889 41.5%,#482173 48.5%,#470e61 53.5%,#460a5d 58.5%,#460a5d 99.9%) 0 202px/100% 1px no-repeat,
linear-gradient(90deg,#460a5d 0.1%,#460b5e 22.5%,#481a6c 23.8%,#453581 24.7%,#365d8d 25.6%,#228b8d 26.7%,#1fa088 27.1%,#21a685 27.3%,#21a685 27.4%,#218f8d 28.0%,#3a548c 29.5%,#404588 30.2%,#414287 31.1%,#38588c 33.7%,#3d4d8a 38.4%,#3e4989 41.3%,#482677 47.4%,#470e61 53.3%,#460a5d 58.7%,#460a5d 99.9%) 0 203px/100% 1px no-repeat,
linear-gradient(90deg,#460a5d 0.1%,#460b5e 22.5%,#481a6c 23.8%,#453581 24.7%,#365d8d 25.6%,#228b8d 26.7%,#1f9f88 27.1%,#21a685 27.3%,#21a685 27.4%,#1f978b 27.8%,#34618d 29.1%,#404688 30.0%,#424186 31.1%,#39558c 33.7%,#3e4c8a 38.0%,#3e4989 41.3%,#453581 44.8%,#481668 51.1%,#460b5e 55.5%,#460a5d 99.9%) 0 204px/100% 1px no-repeat,
linear-gradient(90deg,#460a5d 0.1%,#460b5e 22.5%,#481a6c 23.8%,#472e7c 24.5%,#3a548c 25.4%,#238a8d 26.7%,#1f9f88 27.1%,#21a585 27.3%,#21a685 27.4%,#1f978b 27.8%,#34618d 29.1%,#3e4989 29.9%,#424086 30.6%,#414287 31.7%,#3b528b 33.9%,#3e4a89 38.2%,#3f4788 41.5%,#453781 44.6%,#453581 45.7%,#482677 47.4%,#470e61 53.3%,#460a5d 58.7%,#460a5d 99.9%) 0 205px/100% 1px no-repeat,
linear-gradient(90deg,#460a5d 0.1%,#460b5e 22.5%,#481a6c 23.8%,#472e7c 24.5%,#3a548c 25.4%,#26818e 26.5%,#1f9e89 27.1%,#20a486 27.3%,#21a585 27.4%,#1f968b 27.8%,#34608d 29.1%,#414487 30.0%,#433d84 31.1%,#3d4e8a 34.1%,#3f4889 38.4%,#3f4788 41.3%,#453882 44.5%,#433e85 45.4%,#46337f 46.3%,#482979 47.0%,#471063 52.8%,#460a5d 57.9%,#460a5d 99.9%) 0 206px/100% 1px no-repeat,
linear-gradient(90deg,#460a5d 0.1%,#460b5e 22.5%,#481a6c 23.8%,#463480 24.7%,#375b8d 25.6%,#24878e 26.7%,#1fa188 27.3%,#1e9c89 27.6%,#2f6c8e 28.7%,#3e4a89 29.7%,#433d84 30.4%,#433d84 31.9%,#3f4889 33.9%,#404688 38.5%,#404688 41.3%,#453882 44.3%,#3f4788 45.4%,#433e85 46.1%,#472a7a 46.9%,#471164 52.2%,#460a5d 57.4%,#460a5d 99.9%) 0 207px/100% 1px no-repeat,
linear-gradient(90deg,#460a5d 0.1%,#460b5e 22.5%,#481668 23.6%,#472d7b 24.5%,#3c508b 25.4%,#23888e 26.9%,#1f968b 27.3%,#20928c 27.6%,#38598c 29.1%,#433e85 30.0%,#453781 31.1%,#433e85 32.8%,#414287 34.7%,#414487 38.5%,#414487 41.7%,#453882 44.3%,#404588 44.8%,#3b528b 45.4%,#3b518b 45.7%,#433e85 46.3%,#472a7a 46.9%,#471164 52.2%,#460a5d 57.4%,#460a5d 99.9%) 0 208px/100% 1px no-repeat,
linear-gradient(90deg,#460a5d 0.1%,#460b5e 22.5%,#48186a 23.8%,#472f7d 24.7%,#3b518b 25.6%,#24868e 27.3%,#25848e 27.6%,#3e4c8a 29.3%,#453781 30.2%,#46327e 31.5%,#433e85 34.7%,#424186 38.7%,#414487 41.3%,#453882 44.3%,#414287 44.6%,#365c8d 45.2%,#355f8d 45.6%,#38598c 45.9%,#443a83 46.5%,#472c7a 46.9%,#481769 50.7%,#460b5e 55.4%,#460a5d 99.9%) 0 209px/100% 1px no-repeat,
linear-gradient(90deg,#460a5d 0.1%,#460b5e 22.5%,#481769 23.8%,#472c7a 24.7%,#3c508b 25.8%,#2a768e 27.3%,#2b748e 27.6%,#404588 29.3%,#46327e 30.2%,#472e7c 31.7%,#443a83 35.6%,#414287 41.3%,#453781 44.1%,#433d84 44.5%,#32658e 45.2%,#306a8e 45.6%,#33628d 45.9%,#3e4c8a 46.3%,#46337f 46.7%,#482979 47.0%,#471063 52.8%,#460a5d 57.9%,#460a5d 99.9%) 0 210px/100% 1px no-repeat,
linear-gradient(90deg,#460a5d 0.1%,#460b5e 22.6%,#481b6d 24.1%,#453781 25.2%,#38588c 26.5%,#31668e 27.4%,#38598c 28.2%,#463480 29.7%,#472a7a 31.1%,#443983 37.1%,#424186 41.1%,#453882 44.3%,#3f4889 44.6%,#33638d 45.0%,#2d718e 45.4%,#2e6f8e 45.7%,#30698e 45.9%,#3c508b 46.3%,#463480 46.7%,#482979 47.0%,#471063 52.8%,#460a5d 57.9%,#460a5d 99.9%) 0 211px/100% 1px no-repeat,
linear-gradient(90deg,#460a5d 0.1%,#460b5e 22.6%,#48186a 24.1%,#424086 26.0%,#3a538b 27.3%,#3b518b 27.8%,#472e7c 29.7%,#482878 30.8%,#472c7a 33.2%,#424086 40.4%,#443b84 42.8%,#453781 44.1%,#453882 44.3%,#3e4a89 44.6%,#31668e 45.0%,#2b758e 45.4%,#2c738e 45.7%,#33628d 46.1%,#463480 46.7%,#482979 47.0%,#471063 52.8%,#460a5d 57.9%,#460a5d 99.9%) 0 212px/100% 1px no-repeat,
linear-gradient(90deg,#460a5d 0.1%,#460b5e 22.8%,#481a6c 24.5%,#453882 26.3%,#424086 27.6%,#482878 29.7%,#482677 32.4%,#453581 36.7%,#424086 41.3%,#453781 44.1%,#453882 44.3%,#3e4a89 44.6%,#31688e 45.0%,#2c728e 45.2%,#2a788e 45.6%,#2d708e 45.9%,#3a538b 46.3%,#453581 46.7%,#482979 47.0%,#471063 52.8%,#460a5d 57.9%,#460a5d 99.9%) 0 213px/100% 1px no-repeat,
linear-gradient(90deg,#460a5d 0.1%,#460b5e 23.0%,#481769 24.7%,#472a7a 26.5%,#472d7b 28.0%,#482173 29.9%,#472a7a 33.5%,#453781 37.1%,#424086 41.1%,#453581 44.1%,#423f85 44.5%,#30698e 45.0%,#2c738e 45.2%,#297a8e 45.6%,#2d718e 45.9%,#3a548c 46.3%,#453581 46.7%,#482979 47.0%,#471063 52.8%,#460a5d 57.9%,#460a5d 99.9%) 0 214px/100% 1px no-repeat,
linear-gradient(90deg,#460a5d 0.1%,#460b5e 23.4%,#482071 26.7%,#481f70 28.7%,#482071 30.4%,#472e7c 34.3%,#423f85 40.2%,#443b84 42.4%,#453581 44.1%,#423f85 44.5%,#30698e 45.0%,#29798e 45.4%,#2a778e 45.7%,#2d718e 45.9%,#3a548c 46.3%,#453581 46.7%,#482979 47.0%,#471063 52.8%,#460a5d 57.9%,#460a5d 99.9%) 0 215px/100% 1px no-repeat,
linear-gradient(90deg,#460a5d 0.1%,#460b5e 23.4%,#481b6d 26.9%,#481d6f 30.0%,#482576 31.7%,#46307e 34.7%,#423f85 40.2%,#443b84 42.4%,#453581 44.1%,#423f85 44.5%,#30698e 45.0%,#2a788e 45.4%,#2a778e 45.7%,#2d718e 45.9%,#3a548c 46.3%,#453581 46.7%,#482979 47.0%,#471063 52.8%,#460a5d 57.9%,#460a5d 99.9%) 0 216px/100% 1px no-repeat,
linear-gradient(90deg,#460a5d 0.1%,#460b5e 23.6%,#481a6c 26.7%,#481d6f 29.9%,#482677 32.1%,#453882 36.3%,#424086 41.1%,#453581 44.1%,#423f85 44.5%,#31688e 45.0%,#2a778e 45.4%,#2b758e 45.7%,#2e6f8e 45.9%,#3a538b 46.3%,#453581 46.7%,#482979 47.0%,#471063 52.8%,#460a5d 57.9%,#460a5d 99.9%) 0 217px/100% 1px no-repeat,
linear-gradient(90deg,#460a5d 0.1%,#460b5e 23.6%,#481a6c 26.7%,#481f70 30.0%,#482878 31.9%,#443a83 36.5%,#423f85 41.3%,#453581 44.1%,#433e85 44.5%,#31668e 45.0%,#2b748e 45.4%,#2c738e 45.7%,#2e6d8e 45.9%,#3b528b 46.3%,#463480 46.7%,#482979 47.0%,#471063 52.8%,#460a5d 57.9%,#460a5d 99.9%) 0 218px/100% 1px no-repeat,
linear-gradient(90deg,#460a5d 0.1%,#460b5e 23.4%,#481c6e 26.7%,#482071 30.0%,#482979 31.9%,#443b84 36.3%,#423f85 41.5%,#453581 44.1%,#433d84 44.5%,#33628d 45.0%,#2d708e 45.4%,#2e6f8e 45.7%,#355e8d 46.1%,#46337f 46.7%,#482677 47.2%,#470e61 53.5%,#460a5d 58.5%,#460a5d 99.9%) 0 219px/100% 1px no-repeat,
linear-gradient(90deg,#460a5d 0.1%,#460b5e 23.2%,#482475 26.9%,#482374 28.9%,#482475 30.2%,#453581 34.3%,#433d84 36.5%,#424086 41.3%,#453781 44.3%,#404588 44.6%,#32648e 45.2%,#30698e 45.6%,#34618d 45.9%,#3e4a89 46.3%,#46327e 46.7%,#482677 47.2%,#470e61 53.5%,#460a5d 58.5%,#460a5d 99.9%) 0 220px/100% 1px no-repeat,
linear-gradient(90deg,#460a5d 0.1%,#460b5e 23.0%,#481c6e 24.9%,#46327e 26.5%,#453882 27.6%,#482878 30.0%,#46327e 33.4%,#433e85 36.1%,#424086 41.3%,#453781 44.3%,#424186 44.6%,#375a8c 45.2%,#355e8d 45.6%,#38588c 45.9%,#443983 46.5%,#472c7a 46.9%,#482475 47.8%,#470e61 53.5%,#460a5d 58.5%,#460a5d 99.9%) 0 221px/100% 1px no-repeat,
linear-gradient(90deg,#460a5d 0.1%,#460b5e 22.8%,#481b6d 24.3%,#424186 26.2%,#3a538b 27.3%,#3b518b 27.8%,#46327e 29.7%,#472d7b 31.1%,#46337f 33.4%,#423f85 36.1%,#423f85 41.7%,#453581 44.3%,#414487 44.8%,#3b518b 45.4%,#3e4c8a 45.9%,#472e7c 46.7%,#482677 47.4%,#470e61 53.3%,#460a5d 58.7%,#460a5d 99.9%) 0 222px/100% 1px no-repeat,
linear-gradient(90deg,#460a5d 0.1%,#460b5e 22.6%,#48186a 23.9%,#443983 25.2%,#355e8d 26.5%,#2c718e 27.3%,#2d718e 27.6%,#424086 29.5%,#463480 30.2%,#472f7d 32.1%,#443983 34.3%,#424086 36.9%,#423f85 41.7%,#453581 44.5%,#414487 45.2%,#414487 45.7%,#453781 46.3%,#482878 47.0%,#470e61 53.3%,#460a5d 58.7%,#460a5d 99.9%) 0 223px/100% 1px no-repeat,
linear-gradient(90deg,#460a5d 0.1%,#460b5e 22.5%,#481668 23.6%,#472a7a 24.5%,#3a538b 25.6%,#297b8e 26.7%,#20928c 27.3%,#218f8d 27.6%,#3b518b 29.3%,#443a83 30.2%,#472f7d 31.9%,#443b84 34.7%,#424086 36.9%,#423f85 41.9%,#463480 44.5%,#443b84 45.6%,#482677 47.2%,#470e61 53.5%,#460a5d 58.5%,#460a5d 99.9%) 0 224px/100% 1px no-repeat,
linear-gradient(90deg,#460a5d 0.1%,#460b5e 22.5%,#481769 23.6%,#472f7d 24.5%,#39568c 25.4%,#23888e 26.5%,#20a386 26.9%,#37b878 27.3%,#37b878 27.4%,#20a386 27.8%,#228d8d 28.2%,#3c4f8a 29.7%,#433d84 30.4%,#46327e 31.5%,#463480 33.2%,#424086 36.0%,#424086 41.5%,#463480 44.6%,#46337f 45.9%,#482677 47.2%,#470e61 53.5%,#460a5d 58.5%,#460a5d 99.9%) 0 225px/100% 1px no-repeat,
linear-gradient(90deg,#460a5d 0.1%,#460b5e 22.3%,#481668 23.4%,#482677 24.1%,#404588 24.9%,#297b8e 26.0%,#218f8d 26.3%,#1e9d89 26.5%,#2ab07f 26.7%,#52c569 26.9%,#81d34d 27.1%,#9dd93b 27.3%,#98d83e 27.4%,#73d056 27.6%,#46c06f 27.8%,#28ae80 28.0%,#1fa188 28.2%,#29798e 28.9%,#3c508b 29.9%,#433e85 30.6%,#46337f 31.7%,#453581 33.4%,#424186 36.1%,#424086 41.7%,#46337f 45.0%,#471164 52.2%,#460a5d 57.4%,#460a5d 99.9%) 0 226px/100% 1px no-repeat,
linear-gradient(90deg,#460a5d 0.1%,#460b5e 22.3%,#481668 23.4%,#472f7d 24.3%,#355e8d 25.2%,#21908d 26.2%,#1e9d89 26.3%,#29af7f 26.5%,#58c765 26.7%,#a8db34 26.9%,#f1e51d 27.1%,#fde725 27.3%,#fde725 27.4%,#d2e21b 27.6%,#86d549 27.8%,#4ac16d 28.0%,#2cb17e 28.2%,#20a386 28.4%,#218e8d 28.7%,#355e8d 29.7%,#404588 30.4%,#463480 31.7%,#453781 33.4%,#424186 36.1%,#424086 41.7%,#482576 47.6%,#470e61 53.5%,#460a5d 58.5%,#460a5d 99.9%) 0 227px/100% 1px no-repeat,
linear-gradient(90deg,#460a5d 0.1%,#460b5e 22.3%,#481769 23.4%,#472a7a 24.1%,#3d4d8a 24.9%,#228c8d 26.0%,#21a585 26.3%,#3aba76 26.5%,#81d34d 26.7%,#e5e419 26.9%,#fde725 27.1%,#fde725 27.6%,#b5de2b 27.8%,#67cc5c 28.0%,#3aba76 28.2%,#26ad81 28.4%,#1fa188 28.6%,#277f8e 29.1%,#3b528b 30.0%,#423f85 30.8%,#453581 31.9%,#443983 33.5%,#414287 36.1%,#424186 41.5%,#482071 48.7%,#470d60 54.1%,#460a5d 62.4%,#460a5d 99.9%) 0 228px/100% 1px no-repeat,
linear-gradient(90deg,#460a5d 0.1%,#460b5e 22.3%,#481769 23.4%,#472a7a 24.1%,#3d4e8a 24.9%,#25838e 25.8%,#1f998a 26.2%,#22a884 26.3%,#42be71 26.5%,#90d743 26.7%,#fbe723 26.9%,#fde725 27.6%,#c8e020 27.8%,#73d056 28.0%,#40bd72 28.2%,#29af7f 28.4%,#20a386 28.6%,#228c8d 28.9%,#375b8d 29.9%,#414487 30.6%,#453781 31.7%,#443983 33.4%,#414487 36.1%,#424186 41.5%,#481d6f 49.3%,#470d60 54.1%,#460a5d 62.4%,#460a5d 99.9%) 0 229px/100% 1px no-repeat,
linear-gradient(90deg,#460a5d 0.1%,#460b5e 22.3%,#481769 23.4%,#472a7a 24.1%,#3d4e8a 24.9%,#25838e 25.8%,#1f9a8a 26.2%,#23a983 26.3%,#44bf70 26.5%,#95d840 26.7%,#fde725 26.9%,#fde725 27.6%,#cae11f 27.8%,#75d054 28.0%,#42be71 28.2%,#2ab07f 28.4%,#20a386 28.6%,#228d8d 28.9%,#32648e 29.7%,#3e4989 30.4%,#443a83 31.3%,#443a83 33.2%,#404588 36.1%,#414287 41.3%,#481f70 49.1%,#470d60 54.1%,#460a5d 62.4%,#460a5d 99.9%) 0 230px/100% 1px no-repeat,
linear-gradient(90deg,#460a5d 0.1%,#460b5e 22.3%,#481769 23.4%,#472a7a 24.1%,#3d4e8a 24.9%,#25838e 25.8%,#1f9a8a 26.2%,#23a983 26.3%,#44bf70 26.5%,#95d840 26.7%,#fde725 26.9%,#fde725 27.6%,#cae11f 27.8%,#75d054 28.0%,#42be71 28.2%,#2ab07f 28.4%,#20a486 28.6%,#228d8d 28.9%,#365c8d 29.9%,#404688 30.6%,#443a83 31.5%,#433d84 33.0%,#404688 36.0%,#414287 41.5%,#481d6f 49.3%,#470d60 54.1%,#460a5d 62.4%,#460a5d 99.9%) 0 231px/100% 1px no-repeat,
linear-gradient(90deg,#460a5d 0.1%,#460b5e 22.3%,#481769 23.4%,#472a7a 24.1%,#3d4e8a 24.9%,#25838e 25.8%,#1f9a8a 26.2%,#23a983 26.3%,#44bf70 26.5%,#95d840 26.7%,#fde725 26.9%,#fde725 27.6%,#cae11f 27.8%,#75d054 28.0%,#42be71 28.2%,#2ab07f 28.4%,#20a486 28.6%,#228d8d 28.9%,#365d8d 29.9%,#404688 30.6%,#443b84 31.7%,#3f4889 35.8%,#414487 41.5%,#481c6e 49.6%,#470d60 54.1%,#460a5d 62.4%,#460a5d 99.9%) 0 232px/100% 1px no-repeat,
linear-gradient(90deg,#460a5d 0.1%,#460b5e 22.3%,#481769 23.4%,#472a7a 24.1%,#3d4e8a 24.9%,#25838e 25.8%,#1f998a 26.2%,#22a884 26.3%,#42be71 26.5%,#90d743 26.7%,#f8e621 26.9%,#fde725 27.3%,#fde725 27.6%,#c8e020 27.8%,#70cf57 28.0%,#40bd72 28.2%,#29af7f 28.4%,#20a386 28.6%,#228d8d 28.9%,#365d8d 29.9%,#3f4788 30.6%,#433e85 31.7%,#3e4989 35.0%,#404588 41.3%,#481d6f 49.3%,#470d60 54.1%,#460a5d 62.4%,#460a5d 99.9%) 0 233px/100% 1px no-repeat,
linear-gradient(90deg,#460a5d 0.1%,#460b5e 22.3%,#481467 23.2%,#482475 23.9%,#414287 24.7%,#2a768e 25.6%,#1f958b 26.2%,#20a386 26.3%,#37b878 26.5%,#77d153 26.7%,#d8e219 26.9%,#fde725 27.1%,#fde725 27.6%,#aadc32 27.8%,#60ca60 28.0%,#37b878 28.2%,#25ab82 28.4%,#1fa088 28.6%,#2b748e 29.3%,#3a548c 30.0%,#404588 30.8%,#424086 31.9%,#3e4c8a 34.5%,#404688 41.3%,#481f70 49.1%,#470d60 54.1%,#460a5d 62.4%,#460a5d 99.9%) 0 234px/100% 1px no-repeat,
linear-gradient(90deg,#460a5d 0.1%,#460b5e 22.3%,#481668 23.4%,#472f7d 24.3%,#365c8d 25.2%,#228c8d 26.2%,#1f988b 26.3%,#24aa83 26.5%,#46c06f 26.7%,#86d549 26.9%,#c8e020 27.1%,#ece51b 27.3%,#e2e418 27.4%,#b0dd2f 27.6%,#6ece58 27.8%,#3dbc74 28.0%,#25ac82 28.2%,#1fa088 28.4%,#2a778e 29.1%,#38588c 29.9%,#404688 30.6%,#414287 31.7%,#3c4f8a 34.3%,#404688 41.5%,#481f70 49.1%,#470d60 54.1%,#460a5d 62.4%,#460a5d 99.9%) 0 235px/100% 1px no-repeat,
linear-gradient(90deg,#460a5d 0.1%,#460b5e 22.3%,#481467 23.4%,#472c7a 24.3%,#3a548c 25.2%,#23888e 26.3%,#20a486 26.7%,#32b67a 26.9%,#50c46a 27.1%,#65cb5e 27.3%,#63cb5f 27.4%,#4ac16d 27.6%,#2eb37c 27.8%,#20a486 28.0%,#218e8d 28.4%,#39568c 29.7%,#404688 30.4%,#414287 31.5%,#3b528b 34.1%,#3e4c8a 39.6%,#414287 42.2%,#481b6d 49.8%,#470d60 54.3%,#460a5d 61.6%,#460a5d 99.9%) 0 236px/100% 1px no-repeat,
linear-gradient(90deg,#460a5d 0.1%,#460b5e 22.5%,#481a6c 23.8%,#463480 24.7%,#375b8d 25.6%,#277e8e 26.5%,#1e9d89 27.1%,#20a386 27.4%,#238a8d 28.0%,#3b528b 29.5%,#424186 30.4%,#404588 31.7%,#3a548c 33.7%,#3c508b 36.3%,#3f4889 41.3%,#482374 48.2%,#470e61 53.5%,#460a5d 58.5%,#460a5d 99.9%) 0 237px/100% 1px no-repeat,
linear-gradient(90deg,#460a5d 0.1%,#460b5e 22.5%,#481668 23.6%,#482979 24.5%,#3d4e8a 25.6%,#277f8e 27.3%,#287c8e 27.6%,#414487 29.7%,#433e85 30.6%,#3d4e8a 32.4%,#38588c 34.1%,#3d4e8a 38.4%,#3f4889 41.5%,#482374 48.2%,#470e61 53.5%,#460a5d 58.5%,#460a5d 99.9%) 0 238px/100% 1px no-repeat,
linear-gradient(90deg,#460a5d 0.1%,#460b5e 22.5%,#48186a 23.9%,#46327e 25.0%,#3c508b 26.2%,#33628d 27.4%,#3e4a89 28.7%,#443a83 29.7%,#443a83 30.6%,#38588c 33.4%,#39558c 35.4%,#3c4f8a 38.2%,#3f4889 41.5%,#482071 48.7%,#470d60 54.1%,#460a5d 62.4%,#460a5d 99.9%) 0 239px/100% 1px no-repeat,
linear-gradient(90deg,#460a5d 0.1%,#460b5e 22.6%,#481a6c 24.1%,#423f85 26.0%,#3e4a89 27.1%,#404688 28.0%,#46337f 29.5%,#453781 30.6%,#38588c 33.4%,#38588c 34.8%,#3c4f8a 38.0%,#3f4889 41.5%,#482071 48.7%,#470d60 54.1%,#460a5d 62.4%,#460a5d 99.9%) 0 240px/100% 1px no-repeat,
linear-gradient(90deg,#460a5d 0.1%,#460b5e 22.6%,#48186a 24.1%,#453882 26.0%,#423f85 27.1%,#463480 28.6%,#472e7c 29.7%,#453882 30.8%,#39568c 33.4%,#39568c 35.0%,#3d4e8a 38.2%,#3e4989 41.3%,#482374 48.3%,#470e61 53.3%,#460a5d 58.7%,#460a5d 99.9%) 0 241px/100% 1px no-repeat,
linear-gradient(90deg,#460a5d 0.1%,#460b5e 22.6%,#48186a 24.1%,#453882 26.2%,#443b84 27.3%,#472c7a 29.7%,#424086 31.5%,#3a548c 33.4%,#3a548c 35.2%,#3d4e8a 38.0%,#3f4889 41.5%,#482475 48.0%,#470e61 53.5%,#460a5d 58.5%,#460a5d 99.9%) 0 242px/100% 1px no-repeat,
linear-gradient(90deg,#460a5d 0.1%,#460b5e 22.6%,#48186a 24.1%,#453882 26.2%,#443a83 27.3%,#472a7a 29.5%,#46337f 30.6%,#3c508b 33.2%,#3a538b 34.7%,#3e4c8a 38.7%,#3f4788 41.5%,#453581 44.8%,#481668 51.1%,#460b5e 55.5%,#460a5d 99.9%) 0 243px/100% 1px no-repeat,
linear-gradient(90deg,#460a5d 0.1%,#460b5e 22.6%,#48186a 24.1%,#453882 26.2%,#453882 27.6%,#472a7a 29.7%,#453581 31.0%,#3d4e8a 33.4%,#3d4e8a 35.8%,#3e4a89 40.0%,#423f85 42.8%,#453781 44.8%,#46337f 45.9%,#482576 47.6%,#470e61 53.5%,#460a5d 58.5%,#460a5d 99.9%) 0 244px/100% 1px no-repeat,
linear-gradient(90deg,#460a5d 0.1%,#460b5e 22.6%,#48186a 24.1%,#453882 26.2%,#453882 27.6%,#482979 29.5%,#463480 31.1%,#3e4a89 33.7%,#404688 41.5%,#453781 44.5%,#433d84 45.4%,#453581 46.1%,#482878 47.0%,#470e61 53.3%,#460a5d 58.7%,#460a5d 99.9%) 0 245px/100% 1px no-repeat,
linear-gradient(90deg,#460a5d 0.1%,#460b5e 22.6%,#48186a 24.1%,#453781 26.2%,#443a83 27.1%,#482878 29.9%,#404688 33.9%,#404588 41.5%,#453781 44.3%,#404588 45.4%,#424086 45.9%,#472a7a 46.9%,#471164 52.2%,#460a5d 57.4%,#460a5d 99.9%) 0 246px/100% 1px no-repeat,
linear-gradient(90deg,#460a5d 0.1%,#460b5e 22.6%,#48186a 24.1%,#453781 26.2%,#443983 27.3%,#482677 29.7%,#424186 34.3%,#414487 41.5%,#453781 44.3%,#414487 44.8%,#3c4f8a 45.2%,#3c4f8a 45.7%,#404588 46.1%,#472e7c 46.7%,#481f70 48.9%,#470d60 54.1%,#460a5d 62.4%,#460a5d 99.9%) 0 247px/100% 1px no-repeat,
linear-gradient(90deg,#460a5d 0.1%,#460b5e 22.6%,#481a6c 24.3%,#463480 26.0%,#443a83 26.9%,#472f7d 28.4%,#482576 29.7%,#453882 33.4%,#423f85 36.7%,#414287 41.5%,#453781 44.1%,#424186 44.6%,#375a8c 45.2%,#355e8d 45.6%,#39568c 45.9%,#46307e 46.7%,#482677 47.4%,#470e61 53.3%,#460a5d 58.7%,#460a5d 99.9%) 0 248px/100% 1px no-repeat,
linear-gradient(90deg,#460a5d 0.1%,#460b5e 22.6%,#481a6c 24.3%,#463480 26.0%,#443983 27.1%,#482475 29.7%,#443b84 36.3%,#424186 41.3%,#453781 44.1%,#433d84 44.5%,#32648e 45.2%,#30698e 45.6%,#34618d 45.9%,#3e4a89 46.3%,#46327e 46.7%,#482979 47.0%,#471063 52.8%,#460a5d 57.9%,#460a5d 99.9%) 0 249px/100% 1px no-repeat,
linear-gradient(90deg,#460a5d 0.1%,#460b5e 22.6%,#481a6c 24.3%,#463480 26.0%,#443983 27.1%,#482374 29.7%,#472f7d 33.7%,#453882 36.5%,#424086 41.1%,#453781 44.1%,#433e85 44.5%,#2f6b8e 45.2%,#2d718e 45.6%,#31688e 45.9%,#3c4f8a 46.3%,#463480 46.7%,#482979 47.0%,#471063 52.8%,#460a5d 57.9%,#460a5d 99.9%) 0 250px/100% 1px no-repeat,
linear-gradient(90deg,#460a5d 0.1%,#460b5e 22.6%,#481a6c 24.3%,#463480 26.0%,#443983 26.9%,#472e7c 28.4%,#482173 29.9%,#472c7a 33.7%,#453781 37.1%,#424086 41.1%,#453581 44.1%,#433e85 44.5%,#31668e 45.0%,#2b748e 45.4%,#2c738e 45.7%,#2e6d8e 45.9%,#3b528b 46.3%,#463480 46.7%,#482979 47.0%,#471063 52.8%,#460a5d 57.9%,#460a5d 99.9%) 0 251px/100% 1px no-repeat,
linear-gradient(90deg,#460a5d 0.1%,#460b5e 22.6%,#481a6c 24.3%,#463480 26.0%,#453882 27.1%,#472c7a 28.6%,#482071 29.9%,#482878 33.5%,#463480 36.7%,#423f85 41.1%,#453581 44.1%,#423f85 44.5%,#31688e 45.0%,#2a778e 45.4%,#2b758e 45.7%,#2e6f8e 45.9%,#3a538b 46.3%,#453581 46.7%,#482979 47.0%,#471063 52.8%,#460a5d 57.9%,#460a5d 99.9%) 0 252px/100% 1px no-repeat,
linear-gradient(90deg,#460a5d 0.1%,#460b5e 22.6%,#481a6c 24.3%,#463480 26.0%,#453882 27.1%,#482979 28.7%,#482071 29.9%,#482576 33.4%,#46337f 36.7%,#423f85 41.3%,#453581 44.1%,#423f85 44.5%,#30698e 45.0%,#2c738e 45.2%,#297a8e 45.6%,#2d718e 45.9%,#3a548c 46.3%,#453581 46.7%,#482979 47.0%,#471063 52.8%,#460a5d 57.9%,#460a5d 99.9%) 0 253px/100% 1px no-repeat,
linear-gradient(90deg,#460a5d 0.1%,#460b5e 22.6%,#481a6c 24.3%,#463480 26.0%,#453882 27.1%,#482979 28.7%,#482071 29.9%,#482576 33.4%,#46337f 36.7%,#423f85 41.1%,#453581 44.1%,#423f85 44.5%,#30698e 45.0%,#29798e 45.4%,#2a788e 45.7%,#32658e 46.1%,#453581 46.7%,#482979 47.0%,#471063 52.8%,#460a5d 57.9%,#460a5d 99.9%) 0 254px/100% 1px no-repeat,
linear-gradient(90deg,#460a5d 0.1%,#460b5e 22.6%,#481a6c 24.3%,#463480 26.0%,#453882 27.1%,#472c7a 28.6%,#482071 29.9%,#482576 33.4%,#46337f 36.5%,#423f85 41.1%,#453581 44.1%,#423f85 44.5%,#30698e 45.0%,#29798e 45.4%,#2a788e 45.7%,#2c718e 45.9%,#3a548c 46.3%,#453581 46.7%,#482979 47.0%,#471063 52.8%,#460a5d 57.9%,#460a5d 99.9%) 0 255px/100% 1px no-repeat,
linear-gradient(90deg,#460a5d 0.1%,#460b5e 22.6%,#481a6c 24.3%,#453781 26.2%,#453781 27.4%,#482173 29.7%,#482677 33.4%,#463480 36.5%,#423f85 41.3%,#453581 44.1%,#423f85 44.5%,#306a8e 45.0%,#2b748e 45.2%,#297b8e 45.6%,#2c718e 45.9%,#3a548c 46.3%,#453581 46.7%,#482979 47.0%,#471063 52.8%,#460a5d 57.9%,#460a5d 99.9%) 0 256px/100% 1px no-repeat,
linear-gradient(90deg,#460a5d 0.1%,#460b5e 22.6%,#481a6c 24.3%,#463480 26.0%,#443983 26.9%,#472e7c 28.4%,#482173 29.9%,#482979 33.5%,#453581 36.3%,#423f85 41.3%,#453581 44.1%,#423f85 44.5%,#375b8d 44.8%,#306a8e 45.0%,#29798e 45.4%,#2a788e 45.7%,#2c718e 45.9%,#3a548c 46.3%,#453581 46.7%,#482979 47.0%,#471063 52.8%,#460a5d 57.9%,#460a5d 99.9%) 0 257px/100% 1px no-repeat,
linear-gradient(90deg,#460a5d 0.1%,#460b5e 22.6%,#481a6c 24.3%,#463480 26.0%,#443983 27.1%,#482374 29.9%,#472c7a 33.5%,#453882 36.3%,#423f85 41.5%,#453581 44.1%,#423f85 44.5%,#30698e 45.0%,#29798e 45.4%,#2a788e 45.7%,#32658e 46.1%,#453581 46.7%,#482979 47.0%,#471063 52.8%,#460a5d 57.9%,#460a5d 99.9%) 0 258px/100% 1px no-repeat,
linear-gradient(90deg,#460a5d 0.1%,#460b5e 22.6%,#48186a 24.1%,#453882 26.2%,#453882 27.6%,#482475 29.7%,#472d7b 33.4%,#443983 36.1%,#423f85 41.3%,#453581 44.1%,#423f85 44.5%,#30698e 45.0%,#29798e 45.4%,#2a778e 45.7%,#2d718e 45.9%,#3a548c 46.3%,#453581 46.7%,#482979 47.0%,#471063 52.8%,#460a5d 57.9%,#460a5d 99.9%) 0 259px/100% 1px no-repeat,
linear-gradient(90deg,#460a5d 0.1%,#460b5e 22.6%,#48186a 24.1%,#443983 26.2%,#443b84 27.3%,#482576 29.9%,#472f7d 33.5%,#443b84 36.3%,#423f85 41.5%,#453581 44.1%,#423f85 44.5%,#31688e 45.0%,#2c728e 45.2%,#29798e 45.6%,#2d708e 45.9%,#3a538b 46.3%,#453581 46.7%,#482979 47.0%,#471063 52.8%,#460a5d 57.9%,#460a5d 99.9%) 0 260px/100% 1px no-repeat,
linear-gradient(90deg,#460a5d 0.1%,#460b5e 22.6%,#48186a 24.1%,#453882 26.0%,#423f85 27.1%,#46337f 28.6%,#482677 29.9%,#472f7d 33.2%,#433d84 36.1%,#423f85 41.7%,#453581 44.1%,#433e85 44.5%,#31668e 45.0%,#2d718e 45.2%,#2a768e 45.6%,#2e6e8e 45.9%,#3b528b 46.3%,#463480 46.7%,#482979 47.0%,#471063 52.8%,#460a5d 57.9%,#460a5d 99.9%) 0 261px/100% 1px no-repeat,
linear-gradient(90deg,#460a5d 0.1%,#460b5e 22.6%,#48186a 24.1%,#443a83 26.0%,#424186 27.1%,#443a83 28.2%,#482979 29.7%,#472f7d 33.0%,#433e85 36.1%,#424086 41.3%,#453581 44.1%,#433e85 44.5%,#2e6d8e 45.2%,#2c728e 45.6%,#306a8e 45.9%,#3c508b 46.3%,#463480 46.7%,#482979 47.0%,#471063 52.8%,#460a5d 57.9%,#460a5d 99.9%) 0 262px/100% 1px no-repeat,
linear-gradient(90deg,#460a5d 0.1%,#460b5e 22.6%,#481769 23.9%,#443b84 26.0%,#414487 27.3%,#443a83 28.4%,#472a7a 29.7%,#472f7d 32.8%,#423f85 36.1%,#423f85 41.7%,#453781 44.3%,#404688 44.6%,#355f8d 45.0%,#2f6c8e 45.4%,#306a8e 45.7%,#375a8c 46.1%,#46337f 46.7%,#482979 47.0%,#471063 52.8%,#460a5d 57.9%,#460a5d 99.9%) 0 263px/100% 1px no-repeat,
linear-gradient(90deg,#460a5d 0.1%,#460b5e 22.6%,#481769 23.9%,#433d84 26.0%,#404688 27.1%,#423f85 28.2%,#472c7a 29.7%,#472f7d 32.8%,#423f85 36.0%,#423f85 41.7%,#453781 44.3%,#414487 44.6%,#33628d 45.2%,#31668e 45.6%,#355f8d 45.9%,#443b84 46.5%,#472c7a 46.9%,#482475 47.8%,#470e61 53.5%,#460a5d 58.5%,#460a5d 99.9%) 0 264px/100% 1px no-repeat;"></div>
<svg width="902" height="732">
 <rect x="782" y="15" width="10" height="1" fill="#1a1a1a"/>
 <rect x="827.5" y="10.5" width="9" height="9" rx="1.5" fill="none" stroke="#1a1a1a" stroke-width="1"/>
 <path d="M873 10 L883 20 M883 10 L873 20" stroke="#1a1a1a" stroke-width="1.05"/>
 <path d="M863.5 87 L868 91.5 L872.5 87" fill="none" stroke="#333" stroke-width="1.1"/>
<text x="31.0" y="20.0" text-anchor="start" font-size="12.5" fill="#1a1a1a" textLength="43.5" lengthAdjust="spacingAndGlyphs">Analysis</text>
<text x="23.5" y="58.6" text-anchor="start" font-size="12" fill="#1a1a1a" textLength="79.0" lengthAdjust="spacingAndGlyphs">Spectral Image</text>
<text x="125.6" y="60.0" text-anchor="start" font-size="12" fill="#1a1a1a" textLength="80.5" lengthAdjust="spacingAndGlyphs">3D Surface Plot</text>
<text x="230.0" y="60.0" text-anchor="start" font-size="12" fill="#1a1a1a" textLength="71.5" lengthAdjust="spacingAndGlyphs">Waterfall Plot</text>
<text x="776.0" y="93.0" text-anchor="start" font-size="12" fill="#1a1a1a" textLength="40.0" lengthAdjust="spacingAndGlyphs">Integral</text>
<defs><linearGradient id="vir" x1="0" x2="1" y1="0" y2="0"><stop offset="0.0000" stop-color="#440154"/><stop offset="0.0625" stop-color="#48186a"/><stop offset="0.1250" stop-color="#472d7b"/><stop offset="0.1875" stop-color="#424086"/><stop offset="0.2500" stop-color="#3b528b"/><stop offset="0.3125" stop-color="#33638d"/><stop offset="0.3750" stop-color="#2c728e"/><stop offset="0.4375" stop-color="#26828e"/><stop offset="0.5000" stop-color="#21918c"/><stop offset="0.5625" stop-color="#1fa088"/><stop offset="0.6250" stop-color="#28ae80"/><stop offset="0.6875" stop-color="#3fbc73"/><stop offset="0.7500" stop-color="#5ec962"/><stop offset="0.8125" stop-color="#84d44b"/><stop offset="0.8750" stop-color="#addc30"/><stop offset="0.9375" stop-color="#d8e219"/><stop offset="1.0000" stop-color="#fde725"/></linearGradient></defs>
<rect x="32.5" y="115.5" width="630" height="14" fill="#fff" stroke="#8c8c8c" stroke-width="1"/>
<rect x="33" y="116" width="628" height="12" fill="url(#vir)"/>
<rect x="32" y="129" width="631" height="1" fill="#8c8c8c" fill-opacity="1.00"/>
<rect x="48" y="123" width="1" height="6" fill="#8c8c8c" fill-opacity="1.00"/>
<rect x="171" y="123" width="1" height="6" fill="#8c8c8c" fill-opacity="1.00"/>
<rect x="293" y="123" width="1" height="6" fill="#8c8c8c" fill-opacity="1.00"/>
<rect x="416" y="123" width="1" height="6" fill="#8c8c8c" fill-opacity="1.00"/>
<rect x="538" y="123" width="1" height="6" fill="#8c8c8c" fill-opacity="1.00"/>
<rect x="661" y="123" width="1" height="6" fill="#8c8c8c" fill-opacity="1.00"/>
<rect x="48" y="125" width="1" height="4" fill="#8c8c8c" fill-opacity="0.50"/>
<rect x="109" y="125" width="1" height="4" fill="#8c8c8c" fill-opacity="0.50"/>
<rect x="171" y="125" width="1" height="4" fill="#8c8c8c" fill-opacity="0.50"/>
<rect x="232" y="125" width="1" height="4" fill="#8c8c8c" fill-opacity="0.50"/>
<rect x="293" y="125" width="1" height="4" fill="#8c8c8c" fill-opacity="0.50"/>
<rect x="354" y="125" width="1" height="4" fill="#8c8c8c" fill-opacity="0.50"/>
<rect x="416" y="125" width="1" height="4" fill="#8c8c8c" fill-opacity="0.50"/>
<rect x="477" y="125" width="1" height="4" fill="#8c8c8c" fill-opacity="0.50"/>
<rect x="538" y="125" width="1" height="4" fill="#8c8c8c" fill-opacity="0.50"/>
<rect x="599" y="125" width="1" height="4" fill="#8c8c8c" fill-opacity="0.50"/>
<rect x="661" y="125" width="1" height="4" fill="#8c8c8c" fill-opacity="0.50"/>
<rect x="36" y="125" width="1" height="4" fill="#8c8c8c" fill-opacity="0.33"/>
<rect x="48" y="125" width="1" height="4" fill="#8c8c8c" fill-opacity="0.33"/>
<rect x="60" y="125" width="1" height="4" fill="#8c8c8c" fill-opacity="0.33"/>
<rect x="73" y="125" width="1" height="4" fill="#8c8c8c" fill-opacity="0.33"/>
<rect x="85" y="125" width="1" height="4" fill="#8c8c8c" fill-opacity="0.33"/>
<rect x="97" y="125" width="1" height="4" fill="#8c8c8c" fill-opacity="0.33"/>
<rect x="109" y="125" width="1" height="4" fill="#8c8c8c" fill-opacity="0.33"/>
<rect x="122" y="125" width="1" height="4" fill="#8c8c8c" fill-opacity="0.33"/>
<rect x="134" y="125" width="1" height="4" fill="#8c8c8c" fill-opacity="0.33"/>
<rect x="146" y="125" width="1" height="4" fill="#8c8c8c" fill-opacity="0.33"/>
<rect x="158" y="125" width="1" height="4" fill="#8c8c8c" fill-opacity="0.33"/>
<rect x="171" y="125" width="1" height="4" fill="#8c8c8c" fill-opacity="0.33"/>
<rect x="183" y="125" width="1" height="4" fill="#8c8c8c" fill-opacity="0.33"/>
<rect x="195" y="125" width="1" height="4" fill="#8c8c8c" fill-opacity="0.33"/>
<rect x="207" y="125" width="1" height="4" fill="#8c8c8c" fill-opacity="0.33"/>
<rect x="220" y="125" width="1" height="4" fill="#8c8c8c" fill-opacity="0.33"/>
<rect x="232" y="125" width="1" height="4" fill="#8c8c8c" fill-opacity="0.33"/>
<rect x="244" y="125" width="1" height="4" fill="#8c8c8c" fill-opacity="0.33"/>
<rect x="256" y="125" width="1" height="4" fill="#8c8c8c" fill-opacity="0.33"/>
<rect x="269" y="125" width="1" height="4" fill="#8c8c8c" fill-opacity="0.33"/>
<rect x="281" y="125" width="1" height="4" fill="#8c8c8c" fill-opacity="0.33"/>
<rect x="293" y="125" width="1" height="4" fill="#8c8c8c" fill-opacity="0.33"/>
<rect x="305" y="125" width="1" height="4" fill="#8c8c8c" fill-opacity="0.33"/>
<rect x="318" y="125" width="1" height="4" fill="#8c8c8c" fill-opacity="0.33"/>
<rect x="330" y="125" width="1" height="4" fill="#8c8c8c" fill-opacity="0.33"/>
<rect x="342" y="125" width="1" height="4" fill="#8c8c8c" fill-opacity="0.33"/>
<rect x="354" y="125" width="1" height="4" fill="#8c8c8c" fill-opacity="0.33"/>
<rect x="367" y="125" width="1" height="4" fill="#8c8c8c" fill-opacity="0.33"/>
<rect x="379" y="125" width="1" height="4" fill="#8c8c8c" fill-opacity="0.33"/>
<rect x="391" y="125" width="1" height="4" fill="#8c8c8c" fill-opacity="0.33"/>
<rect x="403" y="125" width="1" height="4" fill="#8c8c8c" fill-opacity="0.33"/>
<rect x="416" y="125" width="1" height="4" fill="#8c8c8c" fill-opacity="0.33"/>
<rect x="428" y="125" width="1" height="4" fill="#8c8c8c" fill-opacity="0.33"/>
<rect x="440" y="125" width="1" height="4" fill="#8c8c8c" fill-opacity="0.33"/>
<rect x="452" y="125" width="1" height="4" fill="#8c8c8c" fill-opacity="0.33"/>
<rect x="465" y="125" width="1" height="4" fill="#8c8c8c" fill-opacity="0.33"/>
<rect x="477" y="125" width="1" height="4" fill="#8c8c8c" fill-opacity="0.33"/>
<rect x="489" y="125" width="1" height="4" fill="#8c8c8c" fill-opacity="0.33"/>
<rect x="501" y="125" width="1" height="4" fill="#8c8c8c" fill-opacity="0.33"/>
<rect x="514" y="125" width="1" height="4" fill="#8c8c8c" fill-opacity="0.33"/>
<rect x="526" y="125" width="1" height="4" fill="#8c8c8c" fill-opacity="0.33"/>
<rect x="538" y="125" width="1" height="4" fill="#8c8c8c" fill-opacity="0.33"/>
<rect x="550" y="125" width="1" height="4" fill="#8c8c8c" fill-opacity="0.33"/>
<rect x="563" y="125" width="1" height="4" fill="#8c8c8c" fill-opacity="0.33"/>
<rect x="575" y="125" width="1" height="4" fill="#8c8c8c" fill-opacity="0.33"/>
<rect x="587" y="125" width="1" height="4" fill="#8c8c8c" fill-opacity="0.33"/>
<rect x="599" y="125" width="1" height="4" fill="#8c8c8c" fill-opacity="0.33"/>
<rect x="612" y="125" width="1" height="4" fill="#8c8c8c" fill-opacity="0.33"/>
<rect x="624" y="125" width="1" height="4" fill="#8c8c8c" fill-opacity="0.33"/>
<rect x="636" y="125" width="1" height="4" fill="#8c8c8c" fill-opacity="0.33"/>
<rect x="648" y="125" width="1" height="4" fill="#8c8c8c" fill-opacity="0.33"/>
<rect x="661" y="125" width="1" height="4" fill="#8c8c8c" fill-opacity="0.33"/>
<text x="48.5" y="142.7" text-anchor="middle" font-size="12.5" fill="#878787" textLength="6.0" lengthAdjust="spacingAndGlyphs">0</text>
<text x="171.0" y="142.7" text-anchor="middle" font-size="12.5" fill="#878787" textLength="23.8" lengthAdjust="spacingAndGlyphs">2000</text>
<text x="293.5" y="142.7" text-anchor="middle" font-size="12.5" fill="#878787" textLength="23.8" lengthAdjust="spacingAndGlyphs">4000</text>
<text x="416.0" y="142.7" text-anchor="middle" font-size="12.5" fill="#878787" textLength="23.8" lengthAdjust="spacingAndGlyphs">6000</text>
<text x="538.5" y="142.7" text-anchor="middle" font-size="12.5" fill="#878787" textLength="23.8" lengthAdjust="spacingAndGlyphs">8000</text>
<rect x="187.0" y="116" width="1.2" height="12" fill="#fff"/>
<path d="M187.6 118.5 L190.6 122 L187.6 125.5 L184.6 122 Z" fill="#fff"/>
<rect x="500.4" y="116" width="1.2" height="12" fill="#fff"/>
<path d="M501.0 118.5 L504.0 122 L501.0 125.5 L498.0 122 Z" fill="#fff"/>
<rect x="225.4" y="156" width="36" height="296" fill="rgb(0,0,255)" fill-opacity="0.196"/>
<rect x="225" y="156" width="1" height="296" fill="#c8c864" fill-opacity="0.9"/>
<rect x="261" y="156" width="1" height="296" fill="#c8c864" fill-opacity="0.9"/>
<rect x="75" y="311" width="588" height="1" fill="#cccc66"/>
<rect x="74" y="155" width="1" height="298" fill="#8c8c8c" fill-opacity="1.00"/>
<rect x="75" y="436" width="6" height="1" fill="#8c8c8c" fill-opacity="1.00"/>
<rect x="75" y="306" width="6" height="1" fill="#8c8c8c" fill-opacity="1.00"/>
<rect x="75" y="175" width="6" height="1" fill="#8c8c8c" fill-opacity="1.00"/>
<rect x="75" y="436" width="4" height="1" fill="#8c8c8c" fill-opacity="0.50"/>
<rect x="75" y="410" width="4" height="1" fill="#8c8c8c" fill-opacity="0.50"/>
<rect x="75" y="384" width="4" height="1" fill="#8c8c8c" fill-opacity="0.50"/>
<rect x="75" y="358" width="4" height="1" fill="#8c8c8c" fill-opacity="0.50"/>
<rect x="75" y="332" width="4" height="1" fill="#8c8c8c" fill-opacity="0.50"/>
<rect x="75" y="306" width="4" height="1" fill="#8c8c8c" fill-opacity="0.50"/>
<rect x="75" y="279" width="4" height="1" fill="#8c8c8c" fill-opacity="0.50"/>
<rect x="75" y="253" width="4" height="1" fill="#8c8c8c" fill-opacity="0.50"/>
<rect x="75" y="227" width="4" height="1" fill="#8c8c8c" fill-opacity="0.50"/>
<rect x="75" y="201" width="4" height="1" fill="#8c8c8c" fill-opacity="0.50"/>
<rect x="75" y="175" width="4" height="1" fill="#8c8c8c" fill-opacity="0.50"/>
<rect x="75" y="449" width="3" height="1" fill="#8c8c8c" fill-opacity="0.33"/>
<rect x="75" y="436" width="3" height="1" fill="#8c8c8c" fill-opacity="0.33"/>
<rect x="75" y="423" width="3" height="1" fill="#8c8c8c" fill-opacity="0.33"/>
<rect x="75" y="410" width="3" height="1" fill="#8c8c8c" fill-opacity="0.33"/>
<rect x="75" y="397" width="3" height="1" fill="#8c8c8c" fill-opacity="0.33"/>
<rect x="75" y="384" width="3" height="1" fill="#8c8c8c" fill-opacity="0.33"/>
<rect x="75" y="371" width="3" height="1" fill="#8c8c8c" fill-opacity="0.33"/>
<rect x="75" y="358" width="3" height="1" fill="#8c8c8c" fill-opacity="0.33"/>
<rect x="75" y="345" width="3" height="1" fill="#8c8c8c" fill-opacity="0.33"/>
<rect x="75" y="332" width="3" height="1" fill="#8c8c8c" fill-opacity="0.33"/>
<rect x="75" y="319" width="3" height="1" fill="#8c8c8c" fill-opacity="0.33"/>
<rect x="75" y="306" width="3" height="1" fill="#8c8c8c" fill-opacity="0.33"/>
<rect x="75" y="293" width="3" height="1" fill="#8c8c8c" fill-opacity="0.33"/>
<rect x="75" y="279" width="3" height="1" fill="#8c8c8c" fill-opacity="0.33"/>
<rect x="75" y="266" width="3" height="1" fill="#8c8c8c" fill-opacity="0.33"/>
<rect x="75" y="253" width="3" height="1" fill="#8c8c8c" fill-opacity="0.33"/>
<rect x="75" y="240" width="3" height="1" fill="#8c8c8c" fill-opacity="0.33"/>
<rect x="75" y="227" width="3" height="1" fill="#8c8c8c" fill-opacity="0.33"/>
<rect x="75" y="214" width="3" height="1" fill="#8c8c8c" fill-opacity="0.33"/>
<rect x="75" y="201" width="3" height="1" fill="#8c8c8c" fill-opacity="0.33"/>
<rect x="75" y="188" width="3" height="1" fill="#8c8c8c" fill-opacity="0.33"/>
<rect x="75" y="175" width="3" height="1" fill="#8c8c8c" fill-opacity="0.33"/>
<rect x="75" y="162" width="3" height="1" fill="#8c8c8c" fill-opacity="0.33"/>
<text x="71.2" y="441.1" text-anchor="end" font-size="12.5" fill="#878787" textLength="6.0" lengthAdjust="spacingAndGlyphs">0</text>
<text x="71.2" y="415.0" text-anchor="end" font-size="12.5" fill="#878787" textLength="11.9" lengthAdjust="spacingAndGlyphs">10</text>
<text x="71.2" y="388.9" text-anchor="end" font-size="12.5" fill="#878787" textLength="11.9" lengthAdjust="spacingAndGlyphs">20</text>
<text x="71.2" y="362.9" text-anchor="end" font-size="12.5" fill="#878787" textLength="11.9" lengthAdjust="spacingAndGlyphs">30</text>
<text x="71.2" y="336.8" text-anchor="end" font-size="12.5" fill="#878787" textLength="11.9" lengthAdjust="spacingAndGlyphs">40</text>
<text x="71.2" y="310.7" text-anchor="end" font-size="12.5" fill="#878787" textLength="11.9" lengthAdjust="spacingAndGlyphs">50</text>
<text x="71.2" y="284.6" text-anchor="end" font-size="12.5" fill="#878787" textLength="11.9" lengthAdjust="spacingAndGlyphs">60</text>
<text x="71.2" y="258.5" text-anchor="end" font-size="12.5" fill="#878787" textLength="11.9" lengthAdjust="spacingAndGlyphs">70</text>
<text x="71.2" y="232.5" text-anchor="end" font-size="12.5" fill="#878787" textLength="11.9" lengthAdjust="spacingAndGlyphs">80</text>
<text x="71.2" y="206.4" text-anchor="end" font-size="12.5" fill="#878787" textLength="11.9" lengthAdjust="spacingAndGlyphs">90</text>
<text x="71.2" y="180.3" text-anchor="end" font-size="12.5" fill="#878787" textLength="17.9" lengthAdjust="spacingAndGlyphs">100</text>
<rect x="74" y="452" width="589" height="1" fill="#8c8c8c" fill-opacity="1.00"/>
<rect x="77" y="446" width="1" height="6" fill="#8c8c8c" fill-opacity="1.00"/>
<rect x="202" y="446" width="1" height="6" fill="#8c8c8c" fill-opacity="1.00"/>
<rect x="326" y="446" width="1" height="6" fill="#8c8c8c" fill-opacity="1.00"/>
<rect x="450" y="446" width="1" height="6" fill="#8c8c8c" fill-opacity="1.00"/>
<rect x="574" y="446" width="1" height="6" fill="#8c8c8c" fill-opacity="1.00"/>
<rect x="77" y="448" width="1" height="4" fill="#8c8c8c" fill-opacity="0.50"/>
<rect x="139" y="448" width="1" height="4" fill="#8c8c8c" fill-opacity="0.50"/>
<rect x="202" y="448" width="1" height="4" fill="#8c8c8c" fill-opacity="0.50"/>
<rect x="264" y="448" width="1" height="4" fill="#8c8c8c" fill-opacity="0.50"/>
<rect x="326" y="448" width="1" height="4" fill="#8c8c8c" fill-opacity="0.50"/>
<rect x="388" y="448" width="1" height="4" fill="#8c8c8c" fill-opacity="0.50"/>
<rect x="450" y="448" width="1" height="4" fill="#8c8c8c" fill-opacity="0.50"/>
<rect x="512" y="448" width="1" height="4" fill="#8c8c8c" fill-opacity="0.50"/>
<rect x="574" y="448" width="1" height="4" fill="#8c8c8c" fill-opacity="0.50"/>
<rect x="636" y="448" width="1" height="4" fill="#8c8c8c" fill-opacity="0.50"/>
<rect x="77" y="449" width="1" height="3" fill="#8c8c8c" fill-opacity="0.33"/>
<rect x="90" y="449" width="1" height="3" fill="#8c8c8c" fill-opacity="0.33"/>
<rect x="102" y="449" width="1" height="3" fill="#8c8c8c" fill-opacity="0.33"/>
<rect x="115" y="449" width="1" height="3" fill="#8c8c8c" fill-opacity="0.33"/>
<rect x="127" y="449" width="1" height="3" fill="#8c8c8c" fill-opacity="0.33"/>
<rect x="139" y="449" width="1" height="3" fill="#8c8c8c" fill-opacity="0.33"/>
<rect x="152" y="449" width="1" height="3" fill="#8c8c8c" fill-opacity="0.33"/>
<rect x="164" y="449" width="1" height="3" fill="#8c8c8c" fill-opacity="0.33"/>
<rect x="177" y="449" width="1" height="3" fill="#8c8c8c" fill-opacity="0.33"/>
<rect x="189" y="449" width="1" height="3" fill="#8c8c8c" fill-opacity="0.33"/>
<rect x="202" y="449" width="1" height="3" fill="#8c8c8c" fill-opacity="0.33"/>
<rect x="214" y="449" width="1" height="3" fill="#8c8c8c" fill-opacity="0.33"/>
<rect x="226" y="449" width="1" height="3" fill="#8c8c8c" fill-opacity="0.33"/>
<rect x="239" y="449" width="1" height="3" fill="#8c8c8c" fill-opacity="0.33"/>
<rect x="251" y="449" width="1" height="3" fill="#8c8c8c" fill-opacity="0.33"/>
<rect x="264" y="449" width="1" height="3" fill="#8c8c8c" fill-opacity="0.33"/>
<rect x="276" y="449" width="1" height="3" fill="#8c8c8c" fill-opacity="0.33"/>
<rect x="288" y="449" width="1" height="3" fill="#8c8c8c" fill-opacity="0.33"/>
<rect x="301" y="449" width="1" height="3" fill="#8c8c8c" fill-opacity="0.33"/>
<rect x="313" y="449" width="1" height="3" fill="#8c8c8c" fill-opacity="0.33"/>
<rect x="326" y="449" width="1" height="3" fill="#8c8c8c" fill-opacity="0.33"/>
<rect x="338" y="449" width="1" height="3" fill="#8c8c8c" fill-opacity="0.33"/>
<rect x="351" y="449" width="1" height="3" fill="#8c8c8c" fill-opacity="0.33"/>
<rect x="363" y="449" width="1" height="3" fill="#8c8c8c" fill-opacity="0.33"/>
<rect x="375" y="449" width="1" height="3" fill="#8c8c8c" fill-opacity="0.33"/>
<rect x="388" y="449" width="1" height="3" fill="#8c8c8c" fill-opacity="0.33"/>
<rect x="400" y="449" width="1" height="3" fill="#8c8c8c" fill-opacity="0.33"/>
<rect x="413" y="449" width="1" height="3" fill="#8c8c8c" fill-opacity="0.33"/>
<rect x="425" y="449" width="1" height="3" fill="#8c8c8c" fill-opacity="0.33"/>
<rect x="438" y="449" width="1" height="3" fill="#8c8c8c" fill-opacity="0.33"/>
<rect x="450" y="449" width="1" height="3" fill="#8c8c8c" fill-opacity="0.33"/>
<rect x="462" y="449" width="1" height="3" fill="#8c8c8c" fill-opacity="0.33"/>
<rect x="475" y="449" width="1" height="3" fill="#8c8c8c" fill-opacity="0.33"/>
<rect x="487" y="449" width="1" height="3" fill="#8c8c8c" fill-opacity="0.33"/>
<rect x="500" y="449" width="1" height="3" fill="#8c8c8c" fill-opacity="0.33"/>
<rect x="512" y="449" width="1" height="3" fill="#8c8c8c" fill-opacity="0.33"/>
<rect x="524" y="449" width="1" height="3" fill="#8c8c8c" fill-opacity="0.33"/>
<rect x="537" y="449" width="1" height="3" fill="#8c8c8c" fill-opacity="0.33"/>
<rect x="549" y="449" width="1" height="3" fill="#8c8c8c" fill-opacity="0.33"/>
<rect x="562" y="449" width="1" height="3" fill="#8c8c8c" fill-opacity="0.33"/>
<rect x="574" y="449" width="1" height="3" fill="#8c8c8c" fill-opacity="0.33"/>
<rect x="587" y="449" width="1" height="3" fill="#8c8c8c" fill-opacity="0.33"/>
<rect x="599" y="449" width="1" height="3" fill="#8c8c8c" fill-opacity="0.33"/>
<rect x="611" y="449" width="1" height="3" fill="#8c8c8c" fill-opacity="0.33"/>
<rect x="624" y="449" width="1" height="3" fill="#8c8c8c" fill-opacity="0.33"/>
<rect x="636" y="449" width="1" height="3" fill="#8c8c8c" fill-opacity="0.33"/>
<rect x="649" y="449" width="1" height="3" fill="#8c8c8c" fill-opacity="0.33"/>
<rect x="661" y="449" width="1" height="3" fill="#8c8c8c" fill-opacity="0.33"/>
<text x="139.8" y="467.0" text-anchor="middle" font-size="12.5" fill="#878787" textLength="17.9" lengthAdjust="spacingAndGlyphs">300</text>
<text x="201.9" y="467.0" text-anchor="middle" font-size="12.5" fill="#878787" textLength="17.9" lengthAdjust="spacingAndGlyphs">400</text>
<text x="264.0" y="467.0" text-anchor="middle" font-size="12.5" fill="#878787" textLength="17.9" lengthAdjust="spacingAndGlyphs">500</text>
<text x="326.1" y="467.0" text-anchor="middle" font-size="12.5" fill="#878787" textLength="17.9" lengthAdjust="spacingAndGlyphs">600</text>
<text x="388.2" y="467.0" text-anchor="middle" font-size="12.5" fill="#878787" textLength="17.9" lengthAdjust="spacingAndGlyphs">700</text>
<text x="450.3" y="467.0" text-anchor="middle" font-size="12.5" fill="#878787" textLength="17.9" lengthAdjust="spacingAndGlyphs">800</text>
<text x="512.4" y="467.0" text-anchor="middle" font-size="12.5" fill="#878787" textLength="17.9" lengthAdjust="spacingAndGlyphs">900</text>
<text x="574.5" y="467.0" text-anchor="middle" font-size="12.5" fill="#878787" textLength="23.8" lengthAdjust="spacingAndGlyphs">1000</text>
<text x="636.6" y="467.0" text-anchor="middle" font-size="12.5" fill="#878787" textLength="23.8" lengthAdjust="spacingAndGlyphs">1100</text>
<text x="366.0" y="488.6" text-anchor="middle" font-size="12.5" fill="#878787" textLength="91.5" lengthAdjust="spacingAndGlyphs">Wavelength [nm]</text>
<text x="0.0" y="0.0" text-anchor="middle" font-size="12.5" fill="#878787" textLength="42.0" lengthAdjust="spacingAndGlyphs" transform="translate(44.5,304) rotate(-90)">Time [s]</text>
<rect x="710" y="155" width="1" height="292" fill="#8c8c8c" fill-opacity="1.00"/>
<rect x="711" y="429" width="6" height="1" fill="#8c8c8c" fill-opacity="1.00"/>
<rect x="711" y="302" width="6" height="1" fill="#8c8c8c" fill-opacity="1.00"/>
<rect x="711" y="175" width="6" height="1" fill="#8c8c8c" fill-opacity="1.00"/>
<rect x="711" y="429" width="4" height="1" fill="#8c8c8c" fill-opacity="0.50"/>
<rect x="711" y="403" width="4" height="1" fill="#8c8c8c" fill-opacity="0.50"/>
<rect x="711" y="378" width="4" height="1" fill="#8c8c8c" fill-opacity="0.50"/>
<rect x="711" y="353" width="4" height="1" fill="#8c8c8c" fill-opacity="0.50"/>
<rect x="711" y="327" width="4" height="1" fill="#8c8c8c" fill-opacity="0.50"/>
<rect x="711" y="302" width="4" height="1" fill="#8c8c8c" fill-opacity="0.50"/>
<rect x="711" y="277" width="4" height="1" fill="#8c8c8c" fill-opacity="0.50"/>
<rect x="711" y="251" width="4" height="1" fill="#8c8c8c" fill-opacity="0.50"/>
<rect x="711" y="226" width="4" height="1" fill="#8c8c8c" fill-opacity="0.50"/>
<rect x="711" y="201" width="4" height="1" fill="#8c8c8c" fill-opacity="0.50"/>
<rect x="711" y="175" width="4" height="1" fill="#8c8c8c" fill-opacity="0.50"/>
<rect x="711" y="442" width="3" height="1" fill="#8c8c8c" fill-opacity="0.33"/>
<rect x="711" y="429" width="3" height="1" fill="#8c8c8c" fill-opacity="0.33"/>
<rect x="711" y="416" width="3" height="1" fill="#8c8c8c" fill-opacity="0.33"/>
<rect x="711" y="403" width="3" height="1" fill="#8c8c8c" fill-opacity="0.33"/>
<rect x="711" y="391" width="3" height="1" fill="#8c8c8c" fill-opacity="0.33"/>
<rect x="711" y="378" width="3" height="1" fill="#8c8c8c" fill-opacity="0.33"/>
<rect x="711" y="365" width="3" height="1" fill="#8c8c8c" fill-opacity="0.33"/>
<rect x="711" y="353" width="3" height="1" fill="#8c8c8c" fill-opacity="0.33"/>
<rect x="711" y="340" width="3" height="1" fill="#8c8c8c" fill-opacity="0.33"/>
<rect x="711" y="327" width="3" height="1" fill="#8c8c8c" fill-opacity="0.33"/>
<rect x="711" y="315" width="3" height="1" fill="#8c8c8c" fill-opacity="0.33"/>
<rect x="711" y="302" width="3" height="1" fill="#8c8c8c" fill-opacity="0.33"/>
<rect x="711" y="289" width="3" height="1" fill="#8c8c8c" fill-opacity="0.33"/>
<rect x="711" y="277" width="3" height="1" fill="#8c8c8c" fill-opacity="0.33"/>
<rect x="711" y="264" width="3" height="1" fill="#8c8c8c" fill-opacity="0.33"/>
<rect x="711" y="251" width="3" height="1" fill="#8c8c8c" fill-opacity="0.33"/>
<rect x="711" y="239" width="3" height="1" fill="#8c8c8c" fill-opacity="0.33"/>
<rect x="711" y="226" width="3" height="1" fill="#8c8c8c" fill-opacity="0.33"/>
<rect x="711" y="213" width="3" height="1" fill="#8c8c8c" fill-opacity="0.33"/>
<rect x="711" y="201" width="3" height="1" fill="#8c8c8c" fill-opacity="0.33"/>
<rect x="711" y="188" width="3" height="1" fill="#8c8c8c" fill-opacity="0.33"/>
<rect x="711" y="175" width="3" height="1" fill="#8c8c8c" fill-opacity="0.33"/>
<rect x="711" y="163" width="3" height="1" fill="#8c8c8c" fill-opacity="0.33"/>
<text x="706.5" y="434.7" text-anchor="end" font-size="12.5" fill="#878787" textLength="6.0" lengthAdjust="spacingAndGlyphs">0</text>
<text x="706.5" y="409.3" text-anchor="end" font-size="12.5" fill="#878787" textLength="11.9" lengthAdjust="spacingAndGlyphs">10</text>
<text x="706.5" y="384.0" text-anchor="end" font-size="12.5" fill="#878787" textLength="11.9" lengthAdjust="spacingAndGlyphs">20</text>
<text x="706.5" y="358.6" text-anchor="end" font-size="12.5" fill="#878787" textLength="11.9" lengthAdjust="spacingAndGlyphs">30</text>
<text x="706.5" y="333.3" text-anchor="end" font-size="12.5" fill="#878787" textLength="11.9" lengthAdjust="spacingAndGlyphs">40</text>
<text x="706.5" y="307.9" text-anchor="end" font-size="12.5" fill="#878787" textLength="11.9" lengthAdjust="spacingAndGlyphs">50</text>
<text x="706.5" y="282.5" text-anchor="end" font-size="12.5" fill="#878787" textLength="11.9" lengthAdjust="spacingAndGlyphs">60</text>
<text x="706.5" y="257.2" text-anchor="end" font-size="12.5" fill="#878787" textLength="11.9" lengthAdjust="spacingAndGlyphs">70</text>
<text x="706.5" y="231.8" text-anchor="end" font-size="12.5" fill="#878787" textLength="11.9" lengthAdjust="spacingAndGlyphs">80</text>
<text x="706.5" y="206.5" text-anchor="end" font-size="12.5" fill="#878787" textLength="11.9" lengthAdjust="spacingAndGlyphs">90</text>
<text x="706.5" y="181.1" text-anchor="end" font-size="12.5" fill="#878787" textLength="17.9" lengthAdjust="spacingAndGlyphs">100</text>
<rect x="710" y="446" width="160" height="1" fill="#8c8c8c" fill-opacity="1.00"/>
<rect x="759" y="440" width="1" height="6" fill="#8c8c8c" fill-opacity="1.00"/>
<rect x="816" y="440" width="1" height="6" fill="#8c8c8c" fill-opacity="1.00"/>
<rect x="730" y="442" width="1" height="4" fill="#8c8c8c" fill-opacity="0.50"/>
<rect x="759" y="442" width="1" height="4" fill="#8c8c8c" fill-opacity="0.50"/>
<rect x="788" y="442" width="1" height="4" fill="#8c8c8c" fill-opacity="0.50"/>
<rect x="816" y="442" width="1" height="4" fill="#8c8c8c" fill-opacity="0.50"/>
<rect x="845" y="442" width="1" height="4" fill="#8c8c8c" fill-opacity="0.50"/>
<rect x="713" y="443" width="1" height="3" fill="#8c8c8c" fill-opacity="0.33"/>
<rect x="719" y="443" width="1" height="3" fill="#8c8c8c" fill-opacity="0.33"/>
<rect x="724" y="443" width="1" height="3" fill="#8c8c8c" fill-opacity="0.33"/>
<rect x="730" y="443" width="1" height="3" fill="#8c8c8c" fill-opacity="0.33"/>
<rect x="736" y="443" width="1" height="3" fill="#8c8c8c" fill-opacity="0.33"/>
<rect x="742" y="443" width="1" height="3" fill="#8c8c8c" fill-opacity="0.33"/>
<rect x="747" y="443" width="1" height="3" fill="#8c8c8c" fill-opacity="0.33"/>
<rect x="753" y="443" width="1" height="3" fill="#8c8c8c" fill-opacity="0.33"/>
<rect x="759" y="443" width="1" height="3" fill="#8c8c8c" fill-opacity="0.33"/>
<rect x="765" y="443" width="1" height="3" fill="#8c8c8c" fill-opacity="0.33"/>
<rect x="770" y="443" width="1" height="3" fill="#8c8c8c" fill-opacity="0.33"/>
<rect x="776" y="443" width="1" height="3" fill="#8c8c8c" fill-opacity="0.33"/>
<rect x="782" y="443" width="1" height="3" fill="#8c8c8c" fill-opacity="0.33"/>
<rect x="788" y="443" width="1" height="3" fill="#8c8c8c" fill-opacity="0.33"/>
<rect x="793" y="443" width="1" height="3" fill="#8c8c8c" fill-opacity="0.33"/>
<rect x="799" y="443" width="1" height="3" fill="#8c8c8c" fill-opacity="0.33"/>
<rect x="805" y="443" width="1" height="3" fill="#8c8c8c" fill-opacity="0.33"/>
<rect x="811" y="443" width="1" height="3" fill="#8c8c8c" fill-opacity="0.33"/>
<rect x="816" y="443" width="1" height="3" fill="#8c8c8c" fill-opacity="0.33"/>
<rect x="822" y="443" width="1" height="3" fill="#8c8c8c" fill-opacity="0.33"/>
<rect x="828" y="443" width="1" height="3" fill="#8c8c8c" fill-opacity="0.33"/>
<rect x="833" y="443" width="1" height="3" fill="#8c8c8c" fill-opacity="0.33"/>
<rect x="839" y="443" width="1" height="3" fill="#8c8c8c" fill-opacity="0.33"/>
<rect x="845" y="443" width="1" height="3" fill="#8c8c8c" fill-opacity="0.33"/>
<rect x="851" y="443" width="1" height="3" fill="#8c8c8c" fill-opacity="0.33"/>
<rect x="856" y="443" width="1" height="3" fill="#8c8c8c" fill-opacity="0.33"/>
<rect x="862" y="443" width="1" height="3" fill="#8c8c8c" fill-opacity="0.33"/>
<rect x="868" y="443" width="1" height="3" fill="#8c8c8c" fill-opacity="0.33"/>
<text x="759.2" y="461.0" text-anchor="middle" font-size="12.5" fill="#878787" textLength="35.6" lengthAdjust="spacingAndGlyphs">100000</text>
<text x="816.6" y="461.0" text-anchor="middle" font-size="12.5" fill="#878787" textLength="35.6" lengthAdjust="spacingAndGlyphs">200000</text>
<text x="796.0" y="482.5" text-anchor="middle" font-size="12.5" fill="#878787" textLength="128.0" lengthAdjust="spacingAndGlyphs">Integral (438nm-496nm)</text>
<text x="0.0" y="0.0" text-anchor="middle" font-size="12.5" fill="#878787" textLength="42.0" lengthAdjust="spacingAndGlyphs" transform="translate(680.5,302) rotate(-90)">Time [s]</text>
<polyline points="736.5,429.2 723.4,423.1 725.0,404.3 855.4,398.5 855.4,392.9 723.4,386.1 723.4,379.7 799.9,372.4 799.9,366.3 751.5,360.2 751.5,353.4 737.9,347.0 737.9,340.4 724.2,334.1 724.2,315.1 854.5,309.0 854.5,302.4 724.4,295.6 724.4,290.0 798.9,282.6 798.9,276.3 751.0,270.2 751.0,264.1 737.4,256.8 736.2,250.7 724.4,245.8 722.7,239.5 724.4,225.6 854.2,218.2 854.2,213.4 723.4,206.0 723.4,200.5 799.0,193.9 799.0,187.5 751.0,181.2 751.0,176.9 749.5,174.1 745.3,172.3" fill="none" stroke="#ff0000" stroke-width="1" shape-rendering="crispEdges"/>
<rect x="86" y="497" width="1" height="162" fill="#8c8c8c" fill-opacity="1.00"/>
<rect x="87" y="644" width="6" height="1" fill="#8c8c8c" fill-opacity="1.00"/>
<rect x="87" y="576" width="6" height="1" fill="#8c8c8c" fill-opacity="1.00"/>
<rect x="87" y="508" width="6" height="1" fill="#8c8c8c" fill-opacity="1.00"/>
<rect x="87" y="657" width="4" height="1" fill="#8c8c8c" fill-opacity="0.50"/>
<rect x="87" y="644" width="4" height="1" fill="#8c8c8c" fill-opacity="0.50"/>
<rect x="87" y="630" width="4" height="1" fill="#8c8c8c" fill-opacity="0.50"/>
<rect x="87" y="616" width="4" height="1" fill="#8c8c8c" fill-opacity="0.50"/>
<rect x="87" y="603" width="4" height="1" fill="#8c8c8c" fill-opacity="0.50"/>
<rect x="87" y="589" width="4" height="1" fill="#8c8c8c" fill-opacity="0.50"/>
<rect x="87" y="576" width="4" height="1" fill="#8c8c8c" fill-opacity="0.50"/>
<rect x="87" y="562" width="4" height="1" fill="#8c8c8c" fill-opacity="0.50"/>
<rect x="87" y="548" width="4" height="1" fill="#8c8c8c" fill-opacity="0.50"/>
<rect x="87" y="535" width="4" height="1" fill="#8c8c8c" fill-opacity="0.50"/>
<rect x="87" y="521" width="4" height="1" fill="#8c8c8c" fill-opacity="0.50"/>
<rect x="87" y="508" width="4" height="1" fill="#8c8c8c" fill-opacity="0.50"/>
<rect x="87" y="657" width="3" height="1" fill="#8c8c8c" fill-opacity="0.33"/>
<rect x="87" y="650" width="3" height="1" fill="#8c8c8c" fill-opacity="0.33"/>
<rect x="87" y="644" width="3" height="1" fill="#8c8c8c" fill-opacity="0.33"/>
<rect x="87" y="637" width="3" height="1" fill="#8c8c8c" fill-opacity="0.33"/>
<rect x="87" y="630" width="3" height="1" fill="#8c8c8c" fill-opacity="0.33"/>
<rect x="87" y="623" width="3" height="1" fill="#8c8c8c" fill-opacity="0.33"/>
<rect x="87" y="616" width="3" height="1" fill="#8c8c8c" fill-opacity="0.33"/>
<rect x="87" y="610" width="3" height="1" fill="#8c8c8c" fill-opacity="0.33"/>
<rect x="87" y="603" width="3" height="1" fill="#8c8c8c" fill-opacity="0.33"/>
<rect x="87" y="596" width="3" height="1" fill="#8c8c8c" fill-opacity="0.33"/>
<rect x="87" y="589" width="3" height="1" fill="#8c8c8c" fill-opacity="0.33"/>
<rect x="87" y="582" width="3" height="1" fill="#8c8c8c" fill-opacity="0.33"/>
<rect x="87" y="576" width="3" height="1" fill="#8c8c8c" fill-opacity="0.33"/>
<rect x="87" y="569" width="3" height="1" fill="#8c8c8c" fill-opacity="0.33"/>
<rect x="87" y="562" width="3" height="1" fill="#8c8c8c" fill-opacity="0.33"/>
<rect x="87" y="555" width="3" height="1" fill="#8c8c8c" fill-opacity="0.33"/>
<rect x="87" y="548" width="3" height="1" fill="#8c8c8c" fill-opacity="0.33"/>
<rect x="87" y="542" width="3" height="1" fill="#8c8c8c" fill-opacity="0.33"/>
<rect x="87" y="535" width="3" height="1" fill="#8c8c8c" fill-opacity="0.33"/>
<rect x="87" y="528" width="3" height="1" fill="#8c8c8c" fill-opacity="0.33"/>
<rect x="87" y="521" width="3" height="1" fill="#8c8c8c" fill-opacity="0.33"/>
<rect x="87" y="514" width="3" height="1" fill="#8c8c8c" fill-opacity="0.33"/>
<rect x="87" y="508" width="3" height="1" fill="#8c8c8c" fill-opacity="0.33"/>
<rect x="87" y="501" width="3" height="1" fill="#8c8c8c" fill-opacity="0.33"/>
<text x="82.5" y="649.5" text-anchor="end" font-size="12.5" fill="#878787" textLength="6.0" lengthAdjust="spacingAndGlyphs">0</text>
<text x="82.5" y="581.5" text-anchor="end" font-size="12.5" fill="#878787" textLength="23.8" lengthAdjust="spacingAndGlyphs">5000</text>
<text x="82.5" y="513.5" text-anchor="end" font-size="12.5" fill="#878787" textLength="29.8" lengthAdjust="spacingAndGlyphs">10000</text>
<rect x="86" y="658" width="577" height="1" fill="#8c8c8c" fill-opacity="1.00"/>
<rect x="90" y="652" width="1" height="6" fill="#8c8c8c" fill-opacity="1.00"/>
<rect x="212" y="652" width="1" height="6" fill="#8c8c8c" fill-opacity="1.00"/>
<rect x="333" y="652" width="1" height="6" fill="#8c8c8c" fill-opacity="1.00"/>
<rect x="454" y="652" width="1" height="6" fill="#8c8c8c" fill-opacity="1.00"/>
<rect x="575" y="652" width="1" height="6" fill="#8c8c8c" fill-opacity="1.00"/>
<rect x="90" y="654" width="1" height="4" fill="#8c8c8c" fill-opacity="0.50"/>
<rect x="151" y="654" width="1" height="4" fill="#8c8c8c" fill-opacity="0.50"/>
<rect x="212" y="654" width="1" height="4" fill="#8c8c8c" fill-opacity="0.50"/>
<rect x="272" y="654" width="1" height="4" fill="#8c8c8c" fill-opacity="0.50"/>
<rect x="333" y="654" width="1" height="4" fill="#8c8c8c" fill-opacity="0.50"/>
<rect x="393" y="654" width="1" height="4" fill="#8c8c8c" fill-opacity="0.50"/>
<rect x="454" y="654" width="1" height="4" fill="#8c8c8c" fill-opacity="0.50"/>
<rect x="514" y="654" width="1" height="4" fill="#8c8c8c" fill-opacity="0.50"/>
<rect x="575" y="654" width="1" height="4" fill="#8c8c8c" fill-opacity="0.50"/>
<rect x="636" y="654" width="1" height="4" fill="#8c8c8c" fill-opacity="0.50"/>
<rect x="90" y="655" width="1" height="3" fill="#8c8c8c" fill-opacity="0.33"/>
<rect x="103" y="655" width="1" height="3" fill="#8c8c8c" fill-opacity="0.33"/>
<rect x="115" y="655" width="1" height="3" fill="#8c8c8c" fill-opacity="0.33"/>
<rect x="127" y="655" width="1" height="3" fill="#8c8c8c" fill-opacity="0.33"/>
<rect x="139" y="655" width="1" height="3" fill="#8c8c8c" fill-opacity="0.33"/>
<rect x="151" y="655" width="1" height="3" fill="#8c8c8c" fill-opacity="0.33"/>
<rect x="163" y="655" width="1" height="3" fill="#8c8c8c" fill-opacity="0.33"/>
<rect x="175" y="655" width="1" height="3" fill="#8c8c8c" fill-opacity="0.33"/>
<rect x="187" y="655" width="1" height="3" fill="#8c8c8c" fill-opacity="0.33"/>
<rect x="199" y="655" width="1" height="3" fill="#8c8c8c" fill-opacity="0.33"/>
<rect x="212" y="655" width="1" height="3" fill="#8c8c8c" fill-opacity="0.33"/>
<rect x="224" y="655" width="1" height="3" fill="#8c8c8c" fill-opacity="0.33"/>
<rect x="236" y="655" width="1" height="3" fill="#8c8c8c" fill-opacity="0.33"/>
<rect x="248" y="655" width="1" height="3" fill="#8c8c8c" fill-opacity="0.33"/>
<rect x="260" y="655" width="1" height="3" fill="#8c8c8c" fill-opacity="0.33"/>
<rect x="272" y="655" width="1" height="3" fill="#8c8c8c" fill-opacity="0.33"/>
<rect x="284" y="655" width="1" height="3" fill="#8c8c8c" fill-opacity="0.33"/>
<rect x="296" y="655" width="1" height="3" fill="#8c8c8c" fill-opacity="0.33"/>
<rect x="309" y="655" width="1" height="3" fill="#8c8c8c" fill-opacity="0.33"/>
<rect x="321" y="655" width="1" height="3" fill="#8c8c8c" fill-opacity="0.33"/>
<rect x="333" y="655" width="1" height="3" fill="#8c8c8c" fill-opacity="0.33"/>
<rect x="345" y="655" width="1" height="3" fill="#8c8c8c" fill-opacity="0.33"/>
<rect x="357" y="655" width="1" height="3" fill="#8c8c8c" fill-opacity="0.33"/>
<rect x="369" y="655" width="1" height="3" fill="#8c8c8c" fill-opacity="0.33"/>
<rect x="381" y="655" width="1" height="3" fill="#8c8c8c" fill-opacity="0.33"/>
<rect x="393" y="655" width="1" height="3" fill="#8c8c8c" fill-opacity="0.33"/>
<rect x="405" y="655" width="1" height="3" fill="#8c8c8c" fill-opacity="0.33"/>
<rect x="418" y="655" width="1" height="3" fill="#8c8c8c" fill-opacity="0.33"/>
<rect x="430" y="655" width="1" height="3" fill="#8c8c8c" fill-opacity="0.33"/>
<rect x="442" y="655" width="1" height="3" fill="#8c8c8c" fill-opacity="0.33"/>
<rect x="454" y="655" width="1" height="3" fill="#8c8c8c" fill-opacity="0.33"/>
<rect x="466" y="655" width="1" height="3" fill="#8c8c8c" fill-opacity="0.33"/>
<rect x="478" y="655" width="1" height="3" fill="#8c8c8c" fill-opacity="0.33"/>
<rect x="490" y="655" width="1" height="3" fill="#8c8c8c" fill-opacity="0.33"/>
<rect x="502" y="655" width="1" height="3" fill="#8c8c8c" fill-opacity="0.33"/>
<rect x="514" y="655" width="1" height="3" fill="#8c8c8c" fill-opacity="0.33"/>
<rect x="527" y="655" width="1" height="3" fill="#8c8c8c" fill-opacity="0.33"/>
<rect x="539" y="655" width="1" height="3" fill="#8c8c8c" fill-opacity="0.33"/>
<rect x="551" y="655" width="1" height="3" fill="#8c8c8c" fill-opacity="0.33"/>
<rect x="563" y="655" width="1" height="3" fill="#8c8c8c" fill-opacity="0.33"/>
<rect x="575" y="655" width="1" height="3" fill="#8c8c8c" fill-opacity="0.33"/>
<rect x="587" y="655" width="1" height="3" fill="#8c8c8c" fill-opacity="0.33"/>
<rect x="599" y="655" width="1" height="3" fill="#8c8c8c" fill-opacity="0.33"/>
<rect x="611" y="655" width="1" height="3" fill="#8c8c8c" fill-opacity="0.33"/>
<rect x="623" y="655" width="1" height="3" fill="#8c8c8c" fill-opacity="0.33"/>
<rect x="636" y="655" width="1" height="3" fill="#8c8c8c" fill-opacity="0.33"/>
<rect x="648" y="655" width="1" height="3" fill="#8c8c8c" fill-opacity="0.33"/>
<rect x="660" y="655" width="1" height="3" fill="#8c8c8c" fill-opacity="0.33"/>
<text x="151.4" y="673.3" text-anchor="middle" font-size="12.5" fill="#878787" textLength="17.9" lengthAdjust="spacingAndGlyphs">300</text>
<text x="212.0" y="673.3" text-anchor="middle" font-size="12.5" fill="#878787" textLength="17.9" lengthAdjust="spacingAndGlyphs">400</text>
<text x="272.5" y="673.3" text-anchor="middle" font-size="12.5" fill="#878787" textLength="17.9" lengthAdjust="spacingAndGlyphs">500</text>
<text x="333.1" y="673.3" text-anchor="middle" font-size="12.5" fill="#878787" textLength="17.9" lengthAdjust="spacingAndGlyphs">600</text>
<text x="393.6" y="673.3" text-anchor="middle" font-size="12.5" fill="#878787" textLength="17.9" lengthAdjust="spacingAndGlyphs">700</text>
<text x="454.2" y="673.3" text-anchor="middle" font-size="12.5" fill="#878787" textLength="17.9" lengthAdjust="spacingAndGlyphs">800</text>
<text x="514.8" y="673.3" text-anchor="middle" font-size="12.5" fill="#878787" textLength="17.9" lengthAdjust="spacingAndGlyphs">900</text>
<text x="575.3" y="673.3" text-anchor="middle" font-size="12.5" fill="#878787" textLength="23.8" lengthAdjust="spacingAndGlyphs">1000</text>
<text x="635.9" y="673.3" text-anchor="middle" font-size="12.5" fill="#878787" textLength="23.8" lengthAdjust="spacingAndGlyphs">1100</text>
<text x="372.0" y="694.5" text-anchor="middle" font-size="12.5" fill="#878787" textLength="91.5" lengthAdjust="spacingAndGlyphs">Wavelength [nm]</text>
<text x="0.0" y="0.0" text-anchor="middle" font-size="12.5" fill="#878787" textLength="36.0" lengthAdjust="spacingAndGlyphs" transform="translate(44.5,579) rotate(-90)">Counts</text>
<polyline points="110.6,643.2 111.1,644.2 111.6,644.4 112.0,645.7 112.5,644.6 112.9,644.7 113.4,644.5 113.8,644.8 114.3,644.4 114.7,644.7 115.2,645.3 115.6,643.8 116.1,643.8 116.5,643.2 117.0,644.4 117.5,644.7 117.9,644.7 118.4,645.4 118.8,643.7 119.3,645.1 119.7,645.2 120.2,644.5 120.6,643.3 121.1,644.2 121.5,645.0 122.0,644.8 122.5,643.9 122.9,644.4 123.4,644.8 123.8,644.5 124.3,643.8 124.7,643.0 125.2,645.1 125.6,644.7 126.1,644.8 126.5,645.9 127.0,644.9 127.4,645.0 127.9,643.5 128.4,644.3 128.8,645.4 129.3,643.8 129.7,644.5 130.2,645.4 130.6,644.6 131.1,644.6 131.5,644.8 132.0,644.2 132.4,645.7 132.9,644.4 133.4,643.5 133.8,643.6 134.3,643.4 134.7,643.4 135.2,643.2 135.6,644.9 136.1,643.6 136.5,645.4 137.0,644.6 137.4,645.5 137.9,643.4 138.3,643.2 138.8,644.3 139.3,642.9 139.7,644.6 140.2,644.0 140.6,644.0 141.1,644.8 141.5,643.8 142.0,642.8 142.4,644.8 142.9,643.5 143.3,644.2 143.8,642.9 144.3,643.8 144.7,642.7 145.2,643.6 145.6,643.9 146.1,645.0 146.5,643.7 147.0,645.0 147.4,643.9 147.9,643.6 148.3,644.6 148.8,643.9 149.3,643.2 149.7,644.0 150.2,644.6 150.6,646.0 151.1,644.7 151.5,644.4 152.0,644.4 152.4,644.7 152.9,643.7 153.3,644.4 153.8,644.1 154.2,643.5 154.7,644.6 155.2,644.2 155.6,642.5 156.1,643.4 156.5,644.9 157.0,644.1 157.4,643.6 157.9,643.2 158.3,643.9 158.8,644.4 159.2,644.5 159.7,643.6 160.2,643.8 160.6,644.4 161.1,644.1 161.5,644.3 162.0,643.5 162.4,644.5 162.9,643.7 163.3,643.0 163.8,643.7 164.2,644.6 164.7,643.1 165.1,644.5 165.6,643.7 166.1,644.5 166.5,645.2 167.0,643.8 167.4,643.8 167.9,644.1 168.3,643.8 168.8,644.4 169.2,644.5 169.7,644.1 170.1,642.7 170.6,643.4 171.1,644.4 171.5,643.6 172.0,644.3 172.4,644.3 172.9,643.4 173.3,644.4 173.8,645.1 174.2,644.6 174.7,643.9 175.1,643.9 175.6,643.2 176.0,644.5 176.5,643.5 177.0,643.7 177.4,644.1 177.9,643.4 178.3,643.7 178.8,644.6 179.2,643.3 179.7,644.8 180.1,644.0 180.6,644.0 181.0,643.7 181.5,644.5 182.0,644.0 182.4,644.1 182.9,643.3 183.3,644.5 183.8,644.0 184.2,644.2 184.7,644.9 185.1,642.2 185.6,644.0 186.0,645.0 186.5,643.0 186.9,644.7 187.4,643.7 187.9,643.4 188.3,644.4 188.8,644.3 189.2,644.4 189.7,644.1 190.1,645.1 190.6,644.8 191.0,644.1 191.5,643.3 191.9,643.6 192.4,642.8 192.9,643.8 193.3,644.3 193.8,644.1 194.2,645.4 194.7,644.7 195.1,644.7 195.6,643.8 196.0,643.6 196.5,644.4 196.9,644.4 197.4,645.1 197.8,644.1 198.3,643.8 198.8,643.7 199.2,644.5 199.7,642.6 200.1,643.2 200.6,644.1 201.0,644.4 201.5,644.2 201.9,643.9 202.4,644.0 202.8,643.7 203.3,643.5 203.8,643.1 204.2,643.2 204.7,644.1 205.1,643.7 205.6,644.3 206.0,644.4 206.5,642.7 206.9,644.3 207.4,642.6 207.8,644.2 208.3,643.8 208.8,643.3 209.2,644.0 209.7,643.7 210.1,644.2 210.6,644.3 211.0,644.1 211.5,644.4 211.9,642.9 212.4,644.1 212.8,642.8 213.3,645.8 213.7,644.0 214.2,643.6 214.7,644.2 215.1,643.3 215.6,643.6 216.0,644.2 216.5,643.7 216.9,642.1 217.4,643.8 217.8,643.8 218.3,644.3 218.7,643.8 219.2,644.7 219.7,643.9 220.1,642.0 220.6,642.9 221.0,643.2 221.5,642.8 221.9,642.2 222.4,643.0 222.8,641.9 223.3,642.6 223.7,643.1 224.2,642.0 224.6,644.7 225.1,643.4 225.6,642.8 226.0,643.5 226.5,643.0 226.9,643.2 227.4,643.1 227.8,640.6 228.3,641.9 228.7,642.2 229.2,641.0 229.6,641.9 230.1,641.0 230.6,641.2 231.0,640.1 231.5,642.0 231.9,640.3 232.4,640.6 232.8,641.1 233.3,639.0 233.7,639.8 234.2,637.6 234.6,637.8 235.1,637.2 235.5,637.0 236.0,636.0 236.5,637.3 236.9,635.5 237.4,635.0 237.8,632.7 238.3,631.2 238.7,629.0 239.2,628.2 239.6,624.7 240.1,622.6 240.5,622.6 241.0,620.8 241.5,618.8 241.9,616.4 242.4,614.2 242.8,614.5 243.3,612.3 243.7,610.8 244.2,609.1 244.6,607.7 245.1,604.5 245.5,603.7 246.0,600.1 246.4,598.6 246.9,595.3 247.4,590.7 247.8,585.9 248.3,579.9 248.7,576.9 249.2,572.7 249.6,567.2 250.1,561.2 250.5,554.9 251.0,546.4 251.4,540.4 251.9,534.5 252.4,527.5 252.8,522.8 253.3,518.7 253.7,516.0 254.2,511.0 254.6,515.5 255.1,517.4 255.5,521.5 256.0,522.2 256.4,526.5 256.9,529.2 257.3,533.7 257.8,539.8 258.3,544.9 258.7,548.1 259.2,551.8 259.6,556.9 260.1,560.4 260.5,562.9 261.0,567.2 261.4,568.6 261.9,570.1 262.3,574.5 262.8,578.2 263.3,579.6 263.7,583.8 264.2,584.1 264.6,587.1 265.1,588.6 265.5,592.2 266.0,592.2 266.4,593.8 266.9,596.1 267.3,600.1 267.8,601.0 268.3,605.3 268.7,605.0 269.2,606.8 269.6,609.1 270.1,609.7 270.5,611.5 271.0,612.5 271.4,614.6 271.9,616.2 272.3,619.2 272.8,620.3 273.2,621.4 273.7,622.5 274.2,623.2 274.6,622.5 275.1,624.5 275.5,624.5 276.0,624.6 276.4,625.3 276.9,625.2 277.3,626.3 277.8,625.3 278.2,626.9 278.7,626.3 279.2,627.2 279.6,626.2 280.1,628.3 280.5,627.1 281.0,627.9 281.4,627.6 281.9,627.0 282.3,628.7 282.8,629.0 283.2,628.9 283.7,627.9 284.1,629.1 284.6,627.5 285.1,628.2 285.5,627.9 286.0,627.1 286.4,626.3 286.9,626.8 287.3,626.4 287.8,625.9 288.2,625.8 288.7,627.2 289.1,625.4 289.6,624.8 290.1,623.9 290.5,623.0 291.0,623.7 291.4,623.8 291.9,624.3 292.3,623.4 292.8,622.7 293.2,622.1 293.7,623.3 294.1,622.3 294.6,621.7 295.0,620.8 295.5,621.6 296.0,621.9 296.4,621.8 296.9,621.3 297.3,621.3 297.8,620.0 298.2,619.6 298.7,619.7 299.1,619.5 299.6,620.6 300.0,620.1 300.5,620.7 301.0,620.5 301.4,619.7 301.9,620.7 302.3,622.0 302.8,620.9 303.2,621.3 303.7,621.9 304.1,621.5 304.6,620.3 305.0,619.9 305.5,621.4 305.9,620.5 306.4,620.4 306.9,622.1 307.3,621.4 307.8,621.4 308.2,621.4 308.7,622.6 309.1,621.8 309.6,620.7 310.0,620.5 310.5,620.1 310.9,621.5 311.4,619.9 311.9,620.6 312.3,621.9 312.8,620.4 313.2,621.1 313.7,620.4 314.1,620.8 314.6,619.8 315.0,620.4 315.5,620.7 315.9,619.8 316.4,620.2 316.8,620.6 317.3,619.3 317.8,620.4 318.2,620.5 318.7,620.4 319.1,620.9 319.6,620.2 320.0,618.5 320.5,620.3 320.9,619.6 321.4,620.3 321.8,619.9 322.3,618.4 322.8,618.7 323.2,619.7 323.7,619.3 324.1,620.0 324.6,620.0 325.0,620.2 325.5,620.3 325.9,619.5 326.4,619.4 326.8,619.6 327.3,620.1 327.8,621.0 328.2,620.2 328.7,621.0 329.1,620.0 329.6,620.4 330.0,620.5 330.5,621.4 330.9,622.6 331.4,620.9 331.8,620.9 332.3,623.0 332.7,622.1 333.2,621.5 333.7,623.3 334.1,621.5 334.6,623.2 335.0,623.9 335.5,622.4 335.9,623.3 336.4,624.2 336.8,623.3 337.3,625.5 337.7,623.1 338.2,625.1 338.7,624.5 339.1,625.2 339.6,624.9 340.0,624.8 340.5,626.1 340.9,625.2 341.4,626.2 341.8,626.6 342.3,626.5 342.7,627.3 343.2,627.3 343.6,626.3 344.1,627.3 344.6,626.6 345.0,627.3 345.5,628.5 345.9,629.3 346.4,628.7 346.8,628.2 347.3,628.6 347.7,629.4 348.2,628.3 348.6,629.8 349.1,630.2 349.6,629.4 350.0,628.2 350.5,629.6 350.9,630.7 351.4,629.8 351.8,629.9 352.3,629.9 352.7,631.0 353.2,631.4 353.6,630.9 354.1,630.9 354.5,630.3 355.0,630.1 355.5,632.2 355.9,632.2 356.4,632.1 356.8,632.3 357.3,633.2 357.7,632.2 358.2,632.5 358.6,631.9 359.1,633.1 359.5,633.9 360.0,634.4 360.5,634.2 360.9,634.4 361.4,635.1 361.8,633.6 362.3,634.0 362.7,634.6 363.2,635.1 363.6,635.7 364.1,635.4 364.5,633.7 365.0,636.6 365.4,635.2 365.9,634.9 366.4,635.5 366.8,636.0 367.3,635.4 367.7,636.8 368.2,635.9 368.6,635.4 369.1,637.3 369.5,637.3 370.0,636.8 370.4,636.4 370.9,636.3 371.4,636.9 371.8,638.0 372.3,638.4 372.7,637.7 373.2,637.7 373.6,638.9 374.1,638.2 374.5,638.2 375.0,637.9 375.4,639.4 375.9,638.5 376.4,639.9 376.8,639.5 377.3,639.5 377.7,638.5 378.2,637.5 378.6,639.7 379.1,639.7 379.5,639.5 380.0,641.3 380.4,640.0 380.9,641.4 381.3,639.5 381.8,639.7 382.3,640.4 382.7,641.4 383.2,639.7 383.6,640.8 384.1,640.9 384.5,640.7 385.0,642.3 385.4,640.9 385.9,640.6 386.3,641.1 386.8,641.3 387.3,642.1 387.7,641.1 388.2,641.5 388.6,641.7 389.1,642.1 389.5,641.2 390.0,641.0 390.4,641.7 390.9,641.4 391.3,641.2 391.8,641.1 392.2,642.1 392.7,642.4 393.2,642.6 393.6,642.3 394.1,642.0 394.5,641.8 395.0,642.8 395.4,642.4 395.9,643.2 396.3,641.7 396.8,642.9 397.2,642.4 397.7,643.2 398.2,643.0 398.6,643.3 399.1,641.7 399.5,642.6 400.0,643.0 400.4,643.6 400.9,643.4 401.3,642.7 401.8,642.0 402.2,644.1 402.7,643.8 403.1,643.3 403.6,643.7 404.1,644.4 404.5,643.3 405.0,642.9 405.4,644.5 405.9,643.3 406.3,642.8 406.8,642.9 407.2,643.9 407.7,642.1 408.1,643.3 408.6,644.3 409.1,643.1 409.5,644.6 410.0,643.2 410.4,644.7 410.9,643.4 411.3,644.4 411.8,643.2 412.2,643.5 412.7,643.7 413.1,644.0 413.6,643.3 414.0,645.2 414.5,643.7 415.0,643.7 415.4,643.6 415.9,643.4 416.3,641.5 416.8,643.9 417.2,643.5 417.7,643.9 418.1,644.2 418.6,645.4 419.0,642.8 419.5,644.5 420.0,645.5 420.4,644.7 420.9,644.1 421.3,643.9 421.8,644.0 422.2,643.4 422.7,644.0 423.1,644.0 423.6,645.5 424.0,643.7 424.5,643.3 424.9,644.3 425.4,645.3 425.9,644.9 426.3,642.9 426.8,644.4 427.2,644.5 427.7,644.6 428.1,643.5 428.6,644.4 429.0,644.6 429.5,645.0 429.9,644.1 430.4,643.3 430.9,644.1 431.3,643.4 431.8,643.9 432.2,643.9 432.7,643.9 433.1,644.0 433.6,643.3 434.0,643.7 434.5,644.4 434.9,643.9 435.4,644.1 435.9,643.7 436.3,643.9 436.8,643.7 437.2,645.0 437.7,643.7 438.1,643.1 438.6,644.9 439.0,642.9 439.5,643.8 439.9,644.1 440.4,645.2 440.8,643.3 441.3,644.7 441.8,644.3 442.2,643.6 442.7,644.7 443.1,644.7 443.6,644.8 444.0,644.1 444.5,643.6 444.9,643.7 445.4,643.7 445.8,644.2 446.3,643.9 446.8,644.5 447.2,642.6 447.7,643.9 448.1,645.3 448.6,644.7 449.0,642.9 449.5,644.9 449.9,644.3 450.4,643.7 450.8,644.7 451.3,643.3 451.7,642.9 452.2,644.6 452.7,643.2 453.1,644.6 453.6,644.7 454.0,643.8 454.5,643.8 454.9,644.4 455.4,643.4 455.8,645.0 456.3,644.6 456.7,644.4 457.2,643.5 457.7,643.5 458.1,643.5 458.6,644.9 459.0,643.4 459.5,643.7 459.9,645.1 460.4,644.6 460.8,643.6 461.3,642.3 461.7,643.8 462.2,643.6 462.6,643.8 463.1,643.9 463.6,644.1 464.0,644.6 464.5,644.2 464.9,644.3 465.4,642.6 465.8,643.8 466.3,644.0 466.7,644.2 467.2,644.1 467.6,644.2 468.1,643.6 468.6,644.0 469.0,643.5 469.5,644.5 469.9,643.8 470.4,643.4 470.8,644.8 471.3,643.9 471.7,643.8 472.2,644.2 472.6,644.3 473.1,645.3 473.5,643.2 474.0,644.6 474.5,644.8 474.9,643.6 475.4,645.2 475.8,643.3 476.3,643.7 476.7,643.6 477.2,644.1 477.6,644.8 478.1,645.3 478.5,643.0 479.0,644.3 479.5,644.4 479.9,642.9 480.4,644.4 480.8,644.2 481.3,644.2 481.7,644.1 482.2,644.7 482.6,644.4 483.1,643.1 483.5,643.5 484.0,646.0 484.4,644.7 484.9,643.8 485.4,644.1 485.8,644.3 486.3,643.3 486.7,645.2 487.2,643.2 487.6,643.9 488.1,643.6 488.5,643.8 489.0,643.4 489.4,644.2 489.9,644.4 490.4,643.5 490.8,643.9 491.3,644.9 491.7,643.1 492.2,643.2 492.6,643.0 493.1,643.9 493.5,643.8 494.0,644.3 494.4,644.7 494.9,644.0 495.4,643.9 495.8,644.5 496.3,642.8 496.7,645.1 497.2,644.6 497.6,644.5 498.1,643.1 498.5,644.2 499.0,644.2 499.4,644.6 499.9,644.5 500.3,644.9 500.8,643.3 501.3,643.6 501.7,643.3 502.2,644.5 502.6,642.3 503.1,644.7 503.5,645.4 504.0,644.2 504.4,643.9 504.9,643.5 505.3,644.7 505.8,643.6 506.3,642.8 506.7,644.6 507.2,644.5 507.6,645.2 508.1,643.8 508.5,643.4 509.0,643.5 509.4,643.4 509.9,642.6 510.3,643.9 510.8,643.4 511.2,644.6 511.7,644.5 512.2,643.8 512.6,644.6 513.1,643.6 513.5,643.1 514.0,643.7 514.4,644.5 514.9,644.5 515.3,643.1 515.8,644.5 516.2,643.9 516.7,644.2 517.2,644.0 517.6,643.3 518.1,644.4 518.5,645.0 519.0,643.0 519.4,643.8 519.9,643.5 520.3,644.0 520.8,643.5 521.2,643.1 521.7,643.1 522.1,644.2 522.6,644.2 523.1,643.7 523.5,643.9 524.0,643.6 524.4,644.5 524.9,645.6 525.3,643.7 525.8,643.5 526.2,643.6 526.7,642.9 527.1,643.4 527.6,644.3 528.1,643.3 528.5,644.1 529.0,643.1 529.4,643.8 529.9,643.7 530.3,643.8 530.8,644.0 531.2,645.0 531.7,644.0 532.1,645.5 532.6,643.7 533.0,643.3 533.5,642.6 534.0,643.7 534.4,644.5 534.9,645.1 535.3,642.7 535.8,645.0 536.2,643.4 536.7,645.6 537.1,644.0 537.6,643.5 538.0,643.8 538.5,644.0 539.0,644.6 539.4,644.6 539.9,643.3 540.3,643.7 540.8,644.1 541.2,643.9 541.7,644.6 542.1,643.3 542.6,643.1 543.0,644.5 543.5,643.9 543.9,643.3 544.4,644.4 544.9,642.6 545.3,643.0 545.8,643.5 546.2,643.3 546.7,642.9 547.1,644.8 547.6,643.6 548.0,644.1 548.5,644.1 548.9,643.5 549.4,644.3 549.9,645.0 550.3,645.0 550.8,644.0 551.2,643.6 551.7,644.0 552.1,644.1 552.6,644.0 553.0,643.1 553.5,643.6 553.9,644.5 554.4,644.2 554.9,643.2 555.3,644.4 555.8,644.3 556.2,644.0 556.7,644.7 557.1,643.4 557.6,645.5 558.0,643.0 558.5,644.3 558.9,644.9 559.4,643.8 559.8,645.9 560.3,643.6 560.8,643.5 561.2,644.4 561.7,644.3 562.1,643.4 562.6,644.5 563.0,644.0 563.5,643.8 563.9,642.9 564.4,644.3 564.8,644.0 565.3,643.2 565.8,645.7 566.2,644.2 566.7,645.3 567.1,645.3 567.6,642.7 568.0,643.9 568.5,643.0 568.9,642.9 569.4,643.6 569.8,644.3 570.3,644.4 570.7,644.1 571.2,643.9 571.7,643.0 572.1,644.1 572.6,643.7 573.0,644.2 573.5,643.9 573.9,644.9 574.4,643.3 574.8,644.4 575.3,644.0 575.7,644.1 576.2,643.3 576.7,643.6 577.1,644.0 577.6,643.9 578.0,643.8 578.5,643.5 578.9,643.7 579.4,643.1 579.8,642.4 580.3,643.6 580.7,644.9 581.2,642.6 581.6,642.5 582.1,644.2 582.6,644.3 583.0,645.4 583.5,643.5 583.9,644.7 584.4,642.8 584.8,645.7 585.3,644.0 585.7,643.5 586.2,644.3 586.6,644.5 587.1,643.8 587.6,644.4 588.0,644.2 588.5,644.0 588.9,644.4 589.4,644.2 589.8,643.5 590.3,644.3 590.7,643.9 591.2,644.5 591.6,643.4 592.1,644.9 592.5,643.3 593.0,646.1 593.5,644.6 593.9,645.1 594.4,643.3 594.8,643.8 595.3,644.9 595.7,644.4 596.2,641.3 596.6,644.0 597.1,643.6 597.5,645.0 598.0,645.0 598.5,643.6 598.9,642.4 599.4,644.4 599.8,643.6 600.3,644.7 600.7,643.2 601.2,644.3 601.6,644.3 602.1,645.3 602.5,644.3 603.0,643.9 603.5,643.1 603.9,644.8 604.4,643.4 604.8,644.3 605.3,644.2 605.7,646.0 606.2,645.2 606.6,644.9 607.1,642.9 607.5,644.8 608.0,644.3 608.4,643.3 608.9,645.5 609.4,643.7 609.8,644.4 610.3,643.9 610.7,643.4 611.2,643.8 611.6,644.2 612.1,643.5 612.5,643.6 613.0,644.5 613.4,644.2 613.9,645.0 614.4,643.2 614.8,644.9 615.3,643.9 615.7,642.8 616.2,643.5 616.6,644.2 617.1,644.5 617.5,644.5 618.0,643.4 618.4,643.8 618.9,644.0 619.3,642.3 619.8,644.6 620.3,644.4 620.7,644.3 621.2,643.9 621.6,643.8 622.1,644.2 622.5,643.5 623.0,643.7 623.4,644.2 623.9,645.7 624.3,643.5 624.8,644.7 625.3,644.5 625.7,644.1 626.2,644.9 626.6,642.7 627.1,644.0 627.5,644.3 628.0,643.8 628.4,644.6 628.9,644.2 629.3,644.8 629.8,644.3 630.2,643.9 630.7,644.2 631.2,645.0 631.6,644.2 632.1,644.0 632.5,643.3 633.0,644.1 633.4,644.3 633.9,644.9 634.3,642.7 634.8,644.7 635.2,644.8 635.7,644.2 636.2,645.3 636.6,643.3" fill="none" stroke="#ff0000" stroke-width="1" shape-rendering="crispEdges"/>
</svg>
</body></html>
